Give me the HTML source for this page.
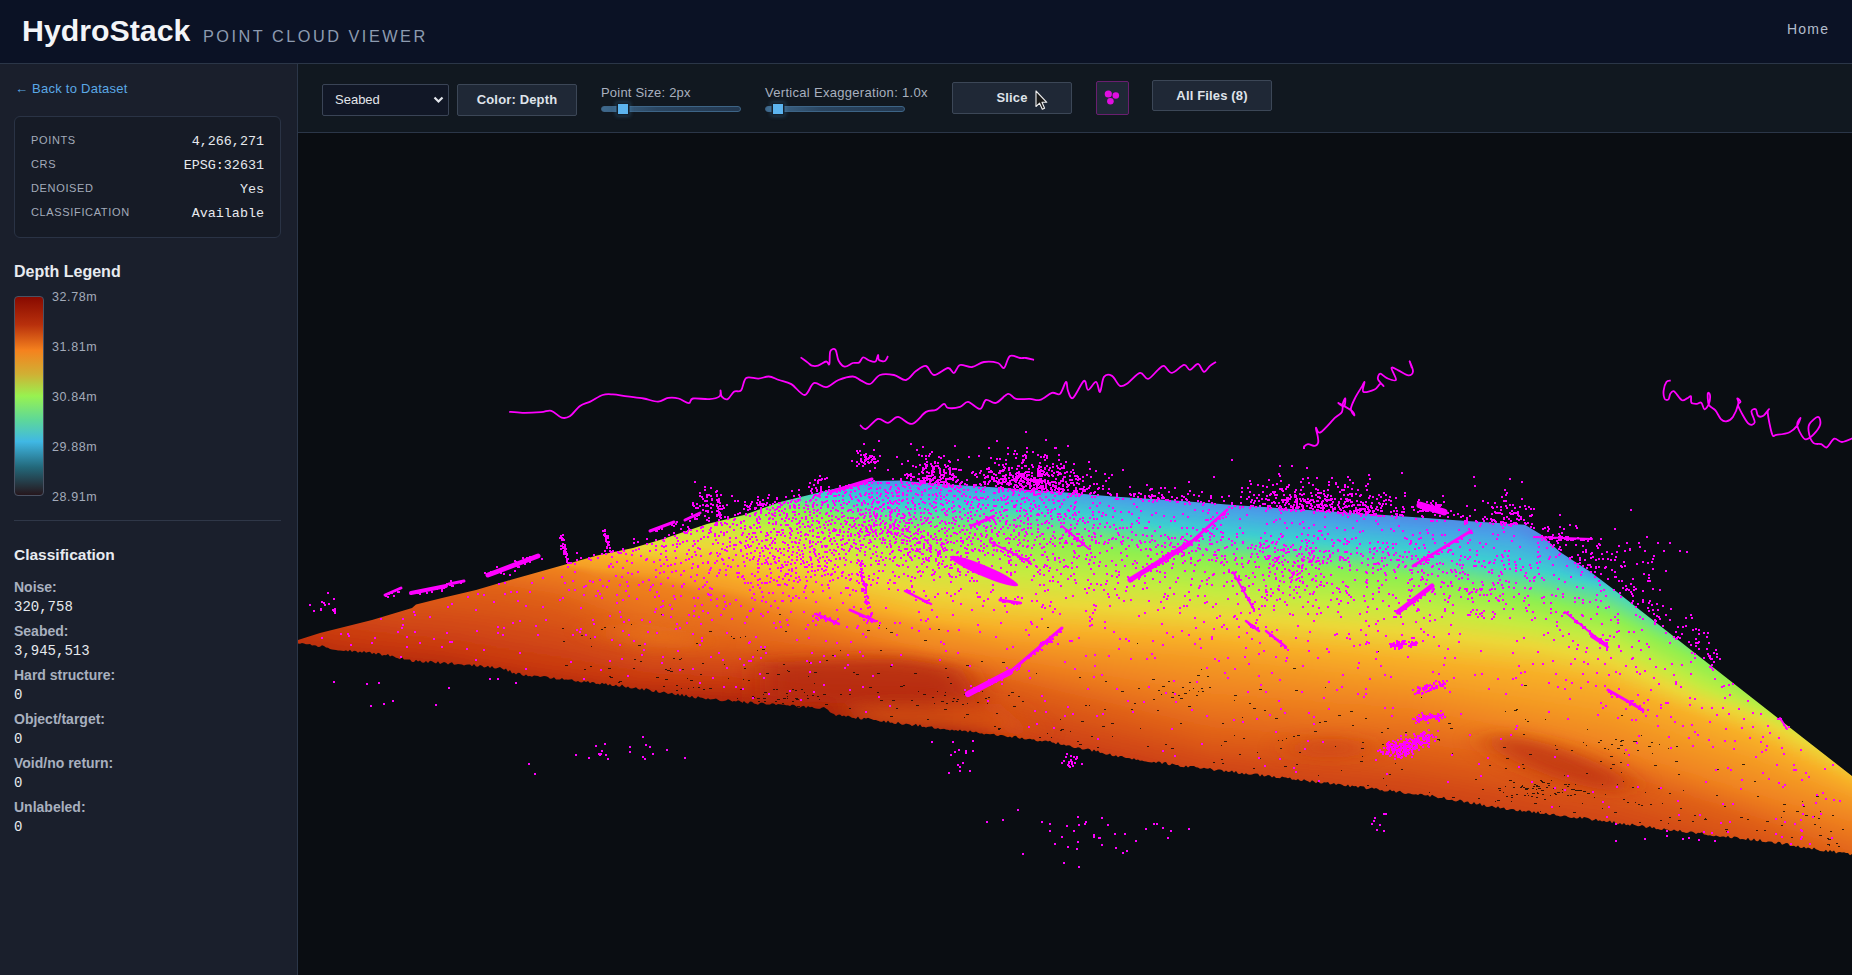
<!DOCTYPE html>
<html><head><meta charset="utf-8">
<style>
*{margin:0;padding:0;box-sizing:border-box}
html,body{width:1852px;height:975px;overflow:hidden;background:#0b0d12;font-family:"Liberation Sans",sans-serif}
.abs{position:absolute}
#hdr{left:0;top:0;width:1852px;height:64px;background:#0b1225;border-bottom:1px solid #2b3648}
#side{left:0;top:64px;width:298px;height:911px;background:#1a1f2c;border-right:1px solid #2b3648}
#tool{left:298px;top:64px;width:1554px;height:69px;background:#111820;border-bottom:1px solid #2b3648}
#view{left:298px;top:133px;width:1554px;height:842px;background:#0a0d12;overflow:hidden}
.t{position:absolute;white-space:nowrap;line-height:1}
.lbl{color:#a3abba;font-size:11px;letter-spacing:0.65px}
.val{color:#e6e9ee;font-family:"Liberation Mono",monospace;font-size:13.4px}
.cl{color:#a8b0bf;font-size:14px;font-weight:bold}
.cv{color:#e6e9ee;font-family:"Liberation Mono",monospace;font-size:14px}
.lg{color:#a3abba;font-size:12.5px;letter-spacing:0.6px}
.btn{position:absolute;background:#1f2836;border:1px solid #3c4757;border-radius:2px;color:#dfe3ea;font-weight:bold;font-size:13px;text-align:center;letter-spacing:0.15px}
.trk{position:absolute;height:6px;border-radius:4px;border:1px solid #3d6486;background:linear-gradient(to right,#3f6a8e,#2a4560 40%,#233850)}
.thm{position:absolute;width:10px;height:10px;background:#5cb4ef;box-shadow:0 0 0 1.5px #14202c,0 0 4px 2px rgba(80,160,220,0.35)}
</style></head><body>
<div id="hdr" class="abs">
  <div class="t" style="left:22px;top:16px;font-size:30.3px;font-weight:bold;color:#f3f5f8">HydroStack</div>
  <div class="t" style="left:203px;top:28px;font-size:16.3px;color:#8d9bb0;letter-spacing:2.5px">POINT CLOUD VIEWER</div>
  <div class="t" style="left:1787px;top:22px;font-size:14px;color:#b3bccb;letter-spacing:1.2px">Home</div>
</div>
<div id="side" class="abs">
  <div class="t" style="left:15px;top:18px;font-size:13px;color:#5aa9e6;letter-spacing:0.25px">&larr; Back to Dataset</div>
  <div class="abs" style="left:14px;top:52px;width:267px;height:122px;background:#161b26;border:1px solid #2a3345;border-radius:6px"></div>
  <div class="t lbl" style="left:31px;top:71px">POINTS</div><div class="t val" style="right:33px;top:71px">4,266,271</div>
  <div class="t lbl" style="left:31px;top:95px">CRS</div><div class="t val" style="right:33px;top:95px">EPSG:32631</div>
  <div class="t lbl" style="left:31px;top:119px">DENOISED</div><div class="t val" style="right:33px;top:119px">Yes</div>
  <div class="t lbl" style="left:31px;top:143px">CLASSIFICATION</div><div class="t val" style="right:33px;top:143px">Available</div>

  <div class="t" style="left:14px;top:200px;font-size:16px;font-weight:bold;color:#e8ebf0">Depth Legend</div>
  <div class="abs" style="left:14px;top:232px;width:30px;height:200px;border:1px solid #4a5263;border-radius:4px;background:linear-gradient(to bottom,#880a00 0%,#b8300c 14%,#f5821e 27%,#d0b034 39%,#98f250 50%,#5ed898 62%,#40b8e4 73%,#23687a 86%,#26161c 100%)"></div>
  <div class="t lg" style="left:52px;top:227px">32.78m</div>
  <div class="t lg" style="left:52px;top:277px">31.81m</div>
  <div class="t lg" style="left:52px;top:327px">30.84m</div>
  <div class="t lg" style="left:52px;top:377px">29.88m</div>
  <div class="t lg" style="left:52px;top:427px">28.91m</div>
  <div class="abs" style="left:14px;top:456px;width:267px;height:1px;background:#2f3748"></div>

  <div class="t" style="left:14px;top:483px;font-size:15.5px;font-weight:bold;color:#e8ebf0">Classification</div>
  <div class="t cl" style="left:14px;top:516px">Noise:</div><div class="t cv" style="left:14px;top:536px">320,758</div>
  <div class="t cl" style="left:14px;top:560px">Seabed:</div><div class="t cv" style="left:14px;top:580px">3,945,513</div>
  <div class="t cl" style="left:14px;top:604px">Hard structure:</div><div class="t cv" style="left:14px;top:624px">0</div>
  <div class="t cl" style="left:14px;top:648px">Object/target:</div><div class="t cv" style="left:14px;top:668px">0</div>
  <div class="t cl" style="left:14px;top:692px">Void/no return:</div><div class="t cv" style="left:14px;top:712px">0</div>
  <div class="t cl" style="left:14px;top:736px">Unlabeled:</div><div class="t cv" style="left:14px;top:756px">0</div>
</div>
<div id="tool" class="abs">
  <div class="abs" style="left:24px;top:20px;width:127px;height:32px;background:#111726;border:1px solid #3a4456;border-radius:2px"></div>
  <div class="t" style="left:37px;top:29px;font-size:13px;color:#e3e6eb">Seabed</div>
  <svg class="abs" style="left:135px;top:31px" width="12" height="10"><path d="M1.5 2.5 L5.5 6.5 L9.5 2.5" fill="none" stroke="#e3e6eb" stroke-width="2.2"/></svg>
  <div class="btn" style="left:159px;top:20px;width:120px;height:32px;line-height:30px">Color: Depth</div>
  <div class="t" style="left:303px;top:22px;font-size:13px;color:#a8b0bf;letter-spacing:0.2px">Point Size: 2px</div>
  <div class="trk" style="left:303px;top:42px;width:140px"></div>
  <div class="thm" style="left:320px;top:40px"></div>
  <div class="t" style="left:467px;top:22px;font-size:13px;color:#a8b0bf;letter-spacing:0.3px">Vertical Exaggeration: 1.0x</div>
  <div class="trk" style="left:467px;top:42px;width:140px"></div>
  <div class="thm" style="left:475px;top:40px"></div>
  <div class="btn" style="left:654px;top:18px;width:120px;height:32px;line-height:30px">Slice</div>
  <div class="abs" style="left:798px;top:17px;width:33px;height:34px;background:#1f2836;border:1px solid #6a1f70;border-radius:2px"></div>
  <svg class="abs" style="left:798px;top:17px" width="33" height="34"><circle cx="12.3" cy="13" r="3.6" fill="#e00ee0"/><circle cx="19.8" cy="14.5" r="3.3" fill="#e00ee0"/><circle cx="14.4" cy="20.2" r="3.3" fill="#e00ee0"/></svg>
  <div class="btn" style="left:854px;top:16px;width:120px;height:31px;line-height:29px">All Files (8)</div>
  <svg class="abs" style="left:737px;top:26px" width="16" height="22"><path d="M1 1 L1 16.5 L4.6 13.2 L7.3 19.3 L9.6 18.3 L7 12.3 L11.8 12.3 Z" fill="#1a1a1a" stroke="#f0f0f0" stroke-width="1.1" stroke-linejoin="round"/></svg>
</div>
<div id="view" class="abs">
<svg width="1554" height="842" viewBox="298 133 1554 842" style="position:absolute;left:0;top:0;display:block">
<defs>
<clipPath id="surf"><path d="M298 640 L320 633 L372 620 L412 608 L416 604.6 L442 598 L476 590 L512 579.5 L560 566 L597 555.5 L633 548 L663 539 L707 524 L744 515 L780 502 L817 493 L854 484 L872 481 L900 480.5 L938 483.7 L997 487.6 L1055 491.5 L1113 496.4 L1172 500.3 L1240 505.5 L1308 510 L1385 515 L1463 520.8 L1525 524.7 L1541 534.4 L1560 552 L1590 571.4 L1617 592 L1654 621 L1691 650 L1728 679 L1765 708 L1802 737 L1852 776 L1856 780 L1856 855.5 L1854 856 L1852 854 L1850 855.2 L1848 852.9 L1846 853 L1844 852.2 L1842 852.4 L1840 852.1 L1838 852.3 L1836 853.4 L1834 850.6 L1832 851.8 L1830 850 L1828 852.2 L1826 849.8 L1824 851.5 L1822 851.2 L1820 850.9 L1818 850.1 L1816 849.2 L1814 847.4 L1812 849.6 L1810 848.3 L1808 847.5 L1806 848.6 L1804 846.8 L1802 848 L1800 847.7 L1798 845.4 L1796 847 L1794 845.7 L1792 845.9 L1790 846.1 L1788 843.3 L1786 842.9 L1784 844.1 L1782 844.8 L1780 842 L1778 841.7 L1776 843.8 L1774 843.5 L1772 841.7 L1770 841.4 L1768 841.6 L1766 842.3 L1764 842 L1762 841.8 L1760 839.1 L1758 841.3 L1756 841.1 L1754 838.4 L1752 840.6 L1750 840.4 L1748 837.7 L1746 839.9 L1744 839.2 L1742 839 L1740 839.2 L1738 837.5 L1736 836.8 L1734 836.5 L1732 838.3 L1730 838.1 L1728 835.8 L1726 837.6 L1724 836.4 L1722 836.6 L1720 836.9 L1718 836.2 L1716 835.4 L1714 836.2 L1712 836 L1710 835.2 L1708 835.5 L1706 834.8 L1704 834.5 L1702 832.3 L1700 833.1 L1698 832.8 L1696 834.1 L1694 832.4 L1692 831.6 L1690 831.4 L1688 832.7 L1686 832.9 L1684 832.2 L1682 832 L1680 829.7 L1678 831.5 L1676 830.8 L1674 829.5 L1672 830.8 L1670 831.1 L1668 829.8 L1666 829.6 L1664 828.3 L1662 830 L1660 829.8 L1658 829 L1656 829.2 L1654 827 L1652 828.2 L1650 825.9 L1648 827.2 L1646 827.9 L1644 826.1 L1642 824.9 L1640 826.1 L1638 826.3 L1636 825.6 L1634 824.8 L1632 823.5 L1630 825.8 L1628 824.5 L1626 825.2 L1624 823 L1622 824.7 L1620 822.9 L1618 824.2 L1616 823.9 L1614 821.1 L1612 823.3 L1610 820.6 L1608 821.8 L1606 822 L1604 820.8 L1602 821.5 L1600 820.2 L1598 821 L1596 818.7 L1594 819.9 L1592 820.7 L1590 818.9 L1588 818.1 L1586 817.4 L1584 817.1 L1582 818.8 L1580 816.6 L1578 818.3 L1576 818.5 L1574 817.3 L1572 818 L1570 817.7 L1568 817 L1566 815.7 L1564 815.5 L1562 816.2 L1560 816.5 L1558 815.7 L1556 815.5 L1554 813.7 L1552 814 L1550 815.2 L1548 814.5 L1546 812.8 L1544 814 L1542 813.8 L1540 814 L1538 811.3 L1536 813.5 L1534 811.3 L1532 813 L1530 810.8 L1528 810.5 L1526 811.8 L1524 811.1 L1522 811.8 L1520 809.6 L1518 811.3 L1516 811.1 L1514 809.3 L1512 809.1 L1510 809.3 L1508 810.1 L1506 809.9 L1504 807.6 L1502 807.9 L1500 808.6 L1498 806.3 L1496 808 L1494 807.1 L1492 805.8 L1490 806.4 L1488 807.1 L1486 806.7 L1484 804.4 L1482 806 L1480 803.1 L1478 804.3 L1476 804.4 L1474 802.1 L1472 804.2 L1470 803.9 L1468 801.5 L1466 801.7 L1464 802.8 L1462 800.5 L1460 799.6 L1458 800.8 L1456 801.4 L1454 801.1 L1452 799.7 L1450 799.9 L1448 800 L1446 799.6 L1444 796.8 L1442 797.9 L1440 798.1 L1438 798.2 L1436 796.9 L1434 796 L1432 794.7 L1430 796.9 L1428 795.1 L1426 795.4 L1424 795.2 L1422 793.9 L1420 793.7 L1418 794.9 L1416 794.2 L1414 794.5 L1412 794.2 L1410 793.5 L1408 793.2 L1406 794 L1404 793.8 L1402 792.5 L1400 790.8 L1398 791.5 L1396 792.8 L1394 790.6 L1392 791.3 L1390 789.6 L1388 791.3 L1386 791.6 L1384 791.4 L1382 790.1 L1380 790.4 L1378 789.1 L1376 787.9 L1374 788.7 L1372 787.4 L1370 788.2 L1368 788.9 L1366 789.2 L1364 786.5 L1362 786.2 L1360 786 L1358 787.7 L1356 786 L1354 786.3 L1352 785.5 L1350 787.3 L1348 784.5 L1346 786.3 L1344 786.1 L1342 784.8 L1340 784.1 L1338 783.8 L1336 785.1 L1334 782.9 L1332 784.1 L1330 784.4 L1328 782.1 L1326 782.4 L1324 782.2 L1322 783.4 L1320 783.2 L1318 781.4 L1316 783.2 L1314 781.4 L1312 780.2 L1310 782.5 L1308 781.2 L1306 780.5 L1304 779.2 L1302 781 L1300 780.8 L1298 779 L1296 780.3 L1294 779.5 L1292 779.8 L1290 777.5 L1288 778.3 L1286 777.6 L1284 777.3 L1282 776.6 L1280 778.3 L1278 778.1 L1276 777.9 L1274 776.1 L1272 777.4 L1270 775.6 L1268 774.9 L1266 776.1 L1264 776.4 L1262 774.2 L1260 776.4 L1258 773.7 L1256 773.4 L1254 773.7 L1252 774.5 L1250 774.7 L1248 774.5 L1246 773.2 L1244 774.5 L1242 772.7 L1240 774 L1238 773.8 L1236 771 L1234 772.8 L1232 770.6 L1230 771.8 L1228 772.1 L1226 770.4 L1224 772.1 L1222 769.9 L1220 769.6 L1218 769.4 L1216 770.2 L1214 770.9 L1212 769.2 L1210 768 L1208 768.7 L1206 768.5 L1204 767.8 L1202 768.5 L1200 768.8 L1198 767.6 L1196 767.3 L1194 766.1 L1192 765.9 L1190 766.1 L1188 767.4 L1186 765.6 L1184 767.3 L1182 767 L1180 766.7 L1178 764.9 L1176 765.1 L1174 764.3 L1172 763.5 L1170 765.2 L1168 764.9 L1166 762.1 L1164 762.3 L1162 764 L1160 761.7 L1158 761.4 L1156 763.1 L1154 761.8 L1152 762.5 L1150 762.2 L1148 761.9 L1146 761.6 L1144 761.3 L1142 760.5 L1140 760.7 L1138 759.4 L1136 760.1 L1134 758.3 L1132 759.5 L1130 758.2 L1128 757.9 L1126 758.1 L1124 757.3 L1122 756 L1120 756.1 L1118 757.2 L1116 755.2 L1114 756.3 L1112 755.9 L1110 753.5 L1108 754.6 L1106 754.7 L1104 753.7 L1102 752.8 L1100 752.9 L1098 750.5 L1096 751.6 L1094 749.6 L1092 751.7 L1090 749.3 L1088 748.4 L1086 749 L1084 749.6 L1082 749.6 L1080 747.7 L1078 747.3 L1076 747.9 L1074 748 L1072 747.1 L1070 745.6 L1068 745.2 L1066 745.8 L1064 744.4 L1062 745 L1060 744.5 L1058 742.1 L1056 744.2 L1054 742.8 L1052 742.5 L1050 740.7 L1048 741.4 L1046 740.6 L1044 740.8 L1042 741.5 L1040 740.7 L1038 741.4 L1036 741.1 L1034 739.3 L1032 739.5 L1030 738.7 L1028 738.9 L1026 739.6 L1024 739.3 L1022 737.5 L1020 738.8 L1018 738 L1016 735.8 L1014 736 L1012 737.8 L1010 736.6 L1008 737.3 L1006 736.6 L1004 735.4 L1002 735.1 L1000 734.9 L998 736.1 L996 735.4 L994 733.7 L992 733.9 L990 734.2 L988 733.9 L986 733.7 L984 734.5 L982 733.2 L980 733.5 L978 732.7 L976 731.5 L974 732.3 L972 732 L970 730.3 L968 732.6 L966 730.8 L964 730.6 L962 731.3 L960 729.6 L958 730.9 L956 730.1 L954 730.4 L952 729.6 L950 730.4 L948 729.7 L946 729.4 L944 728.7 L942 728.9 L940 729.2 L938 728 L936 728.7 L934 728.5 L932 726.3 L930 726.5 L928 726.8 L926 727.5 L924 726.8 L922 727.1 L920 724.3 L918 726.6 L916 723.8 L914 725.1 L912 725.9 L910 724.6 L908 723.9 L906 723.6 L904 724.4 L902 724.7 L900 723.4 L898 721.7 L896 724 L894 723.7 L892 722.5 L890 722.7 L888 720.5 L886 722.7 L884 720.5 L882 721.7 L880 721.4 L878 720.7 L876 719.9 L874 720.1 L872 719.3 L870 718.6 L868 717.8 L866 718.5 L864 717.8 L862 719.5 L860 719.2 L858 716.5 L856 718.7 L854 717.9 L852 717.7 L850 716.4 L848 715.6 L846 716.8 L844 715.6 L842 716.3 L840 714.5 L838 714.8 L836 716 L834 713.9 L832 713.3 L830 712.3 L828 709.7 L826 708.6 L824 707 L822 707.4 L820 708.8 L818 708.7 L816 708.6 L814 707.9 L812 706.8 L810 707.2 L808 706 L806 707.9 L804 705.8 L802 706.2 L800 707.5 L798 707.4 L796 706.3 L794 704.7 L792 704.5 L790 705.9 L788 705.3 L786 705.2 L784 704.5 L782 704.4 L780 704.3 L778 704.1 L776 705 L774 703.4 L772 703.3 L770 704.6 L768 704.5 L766 704.4 L764 703.3 L762 702.6 L760 703 L758 704.8 L756 704.1 L754 703.4 L752 701.7 L750 701.5 L748 703.8 L746 703.1 L744 700.9 L742 703.2 L740 701 L738 700.3 L736 701.6 L734 700.9 L732 701.7 L730 700 L728 699.3 L726 700.6 L724 700.9 L722 701.2 L720 701 L718 699.8 L716 698.6 L714 698.9 L712 699.2 L710 699.5 L708 698.3 L706 699.6 L704 698.4 L702 697.7 L700 697.5 L698 696.2 L696 698.4 L694 698.1 L692 695.8 L690 697.5 L688 696.7 L686 694.4 L684 696.6 L682 693.8 L680 696 L678 693.6 L676 695.3 L674 694.5 L672 692.7 L670 693.4 L668 694.1 L666 692.8 L664 691.5 L662 692.2 L660 692.9 L658 692.6 L656 689.8 L654 692 L652 691.7 L650 689.9 L648 689.1 L646 688.3 L644 690.5 L642 688.2 L640 689.8 L638 689 L636 687.2 L634 687.9 L632 688.6 L630 688.3 L628 686.5 L626 687.7 L624 686.4 L622 684.6 L620 686.8 L618 686.6 L616 684.8 L614 686.1 L612 685.9 L610 684.1 L608 685.4 L606 683.2 L604 683.9 L602 682.7 L600 684.5 L598 683.8 L596 684 L594 682.3 L592 682.1 L590 683.3 L588 681.1 L586 681.9 L584 681.1 L582 682.4 L580 682.2 L578 680.9 L576 681.7 L574 681 L572 679.2 L570 679.5 L568 679.8 L566 679.6 L564 679.8 L562 678.1 L560 679.4 L558 679.6 L556 679.4 L554 677.2 L552 678.5 L550 678.7 L548 677 L546 676.3 L544 676.1 L542 676.4 L540 677.1 L538 675.9 L536 675.7 L534 675.5 L532 676.8 L530 676 L528 676.3 L526 674.6 L524 675.9 L522 675.2 L520 672.9 L518 672.7 L516 674.5 L514 672.7 L512 673.4 L510 670.1 L508 671.8 L506 668.5 L504 669.7 L502 668.4 L500 666.9 L498 667.7 L496 668.5 L494 668.3 L492 666.1 L490 668 L488 665.8 L486 667.1 L484 667.4 L482 665.7 L480 665 L478 666.8 L476 666.6 L474 663.9 L472 666.3 L470 664.6 L468 664.4 L466 664.7 L464 665.5 L462 664.4 L460 664.2 L458 664.1 L456 664.5 L454 664.8 L452 662.2 L450 663 L448 664.4 L446 662.8 L444 662.1 L442 663 L440 663.9 L438 661.2 L436 663.6 L434 662.5 L432 661.3 L430 660.7 L428 663.1 L426 660.9 L424 662.8 L422 662.6 L420 660.5 L418 661.4 L416 659.7 L414 662.1 L412 661.9 L410 659.4 L408 659.5 L406 659.5 L404 659.6 L402 657.2 L400 659.2 L398 658.3 L396 657.8 L394 656.4 L392 655.4 L390 656.5 L388 654 L386 655.2 L384 654.9 L382 655.7 L380 653.5 L378 652.7 L376 654.5 L374 652.7 L372 654 L370 651.7 L368 652 L366 652.8 L364 651 L362 652.8 L360 651.5 L358 652.8 L356 651 L354 650.8 L352 652.1 L350 649.8 L348 651.6 L346 650.3 L344 651.1 L342 650.8 L340 650.6 L338 650.4 L336 650.1 L334 649.8 L332 649.5 L330 649.1 L328 647.8 L326 647.4 L324 646 L322 645.2 L320 646.8 L318 647 L316 645.6 L314 645.3 L312 645.4 L310 644 L308 644.2 L306 644.3 L304 643.5 L302 643.1 L300 643.8 L298 643.4Z"/></clipPath>
<filter id="bl" x="-5%" y="-5%" width="110%" height="110%"><feGaussianBlur stdDeviation="5 2"/></filter>
<filter id="bl2" x="-50%" y="-50%" width="200%" height="200%"><feGaussianBlur stdDeviation="16 7"/></filter>
<linearGradient id="g290" gradientUnits="userSpaceOnUse" x1="0" y1="359" x2="0" y2="671"><stop offset="0.003" stop-color="#518ce4"/><stop offset="0.067" stop-color="#48a0e8"/><stop offset="0.131" stop-color="#3cd0d0"/><stop offset="0.196" stop-color="#8cf050"/><stop offset="0.260" stop-color="#c4ec40"/><stop offset="0.324" stop-color="#ecd838"/><stop offset="0.388" stop-color="#f8b028"/><stop offset="0.452" stop-color="#f49a24"/><stop offset="0.516" stop-color="#f08420"/><stop offset="0.644" stop-color="#e06018"/><stop offset="0.869" stop-color="#c83810"/><stop offset="0.997" stop-color="#a82008"/></linearGradient>
<linearGradient id="g298" gradientUnits="userSpaceOnUse" x1="0" y1="359.8" x2="0" y2="671.3"><stop offset="0.003" stop-color="#518ce4"/><stop offset="0.067" stop-color="#48a0e8"/><stop offset="0.132" stop-color="#3cd0d0"/><stop offset="0.196" stop-color="#8cf050"/><stop offset="0.261" stop-color="#c4ec40"/><stop offset="0.325" stop-color="#ecd838"/><stop offset="0.390" stop-color="#f8b028"/><stop offset="0.454" stop-color="#f49a24"/><stop offset="0.517" stop-color="#f08420"/><stop offset="0.646" stop-color="#e06018"/><stop offset="0.870" stop-color="#c83810"/><stop offset="0.997" stop-color="#a82008"/></linearGradient>
<linearGradient id="g306" gradientUnits="userSpaceOnUse" x1="0" y1="361.4" x2="0" y2="671.8"><stop offset="0.003" stop-color="#518ce4"/><stop offset="0.067" stop-color="#48a0e8"/><stop offset="0.133" stop-color="#3cd0d0"/><stop offset="0.196" stop-color="#8cf050"/><stop offset="0.263" stop-color="#c4ec40"/><stop offset="0.327" stop-color="#ecd838"/><stop offset="0.395" stop-color="#f8b028"/><stop offset="0.458" stop-color="#f49a24"/><stop offset="0.519" stop-color="#f08420"/><stop offset="0.649" stop-color="#e06018"/><stop offset="0.873" stop-color="#c83810"/><stop offset="0.997" stop-color="#a82008"/></linearGradient>
<linearGradient id="g314" gradientUnits="userSpaceOnUse" x1="0" y1="363" x2="0" y2="672.3"><stop offset="0.003" stop-color="#518ce4"/><stop offset="0.067" stop-color="#48a0e8"/><stop offset="0.133" stop-color="#3cd0d0"/><stop offset="0.197" stop-color="#8cf050"/><stop offset="0.266" stop-color="#c4ec40"/><stop offset="0.330" stop-color="#ecd838"/><stop offset="0.399" stop-color="#f8b028"/><stop offset="0.462" stop-color="#f49a24"/><stop offset="0.520" stop-color="#f08420"/><stop offset="0.653" stop-color="#e06018"/><stop offset="0.876" stop-color="#c83810"/><stop offset="0.997" stop-color="#a82008"/></linearGradient>
<linearGradient id="g322" gradientUnits="userSpaceOnUse" x1="0" y1="364.6" x2="0" y2="672.8"><stop offset="0.003" stop-color="#518ce4"/><stop offset="0.066" stop-color="#48a0e8"/><stop offset="0.134" stop-color="#3cd0d0"/><stop offset="0.198" stop-color="#8cf050"/><stop offset="0.268" stop-color="#c4ec40"/><stop offset="0.332" stop-color="#ecd838"/><stop offset="0.404" stop-color="#f8b028"/><stop offset="0.466" stop-color="#f49a24"/><stop offset="0.522" stop-color="#f08420"/><stop offset="0.656" stop-color="#e06018"/><stop offset="0.878" stop-color="#c83810"/><stop offset="0.997" stop-color="#a82008"/></linearGradient>
<linearGradient id="g330" gradientUnits="userSpaceOnUse" x1="0" y1="366.2" x2="0" y2="673.4"><stop offset="0.003" stop-color="#518ce4"/><stop offset="0.066" stop-color="#48a0e8"/><stop offset="0.135" stop-color="#3cd0d0"/><stop offset="0.198" stop-color="#8cf050"/><stop offset="0.270" stop-color="#c4ec40"/><stop offset="0.335" stop-color="#ecd838"/><stop offset="0.408" stop-color="#f8b028"/><stop offset="0.470" stop-color="#f49a24"/><stop offset="0.524" stop-color="#f08420"/><stop offset="0.660" stop-color="#e06018"/><stop offset="0.881" stop-color="#c83810"/><stop offset="0.997" stop-color="#a82008"/></linearGradient>
<linearGradient id="g338" gradientUnits="userSpaceOnUse" x1="0" y1="367.8" x2="0" y2="673.9"><stop offset="0.003" stop-color="#518ce4"/><stop offset="0.066" stop-color="#48a0e8"/><stop offset="0.136" stop-color="#3cd0d0"/><stop offset="0.199" stop-color="#8cf050"/><stop offset="0.273" stop-color="#c4ec40"/><stop offset="0.337" stop-color="#ecd838"/><stop offset="0.413" stop-color="#f8b028"/><stop offset="0.475" stop-color="#f49a24"/><stop offset="0.525" stop-color="#f08420"/><stop offset="0.663" stop-color="#e06018"/><stop offset="0.884" stop-color="#c83810"/><stop offset="0.997" stop-color="#a82008"/></linearGradient>
<linearGradient id="g346" gradientUnits="userSpaceOnUse" x1="0" y1="369.4" x2="0" y2="674.4"><stop offset="0.003" stop-color="#518ce4"/><stop offset="0.065" stop-color="#48a0e8"/><stop offset="0.136" stop-color="#3cd0d0"/><stop offset="0.200" stop-color="#8cf050"/><stop offset="0.275" stop-color="#c4ec40"/><stop offset="0.339" stop-color="#ecd838"/><stop offset="0.418" stop-color="#f8b028"/><stop offset="0.479" stop-color="#f49a24"/><stop offset="0.527" stop-color="#f08420"/><stop offset="0.667" stop-color="#e06018"/><stop offset="0.887" stop-color="#c83810"/><stop offset="0.997" stop-color="#a82008"/></linearGradient>
<linearGradient id="g354" gradientUnits="userSpaceOnUse" x1="0" y1="371" x2="0" y2="674.9"><stop offset="0.003" stop-color="#518ce4"/><stop offset="0.065" stop-color="#48a0e8"/><stop offset="0.137" stop-color="#3cd0d0"/><stop offset="0.201" stop-color="#8cf050"/><stop offset="0.278" stop-color="#c4ec40"/><stop offset="0.342" stop-color="#ecd838"/><stop offset="0.422" stop-color="#f8b028"/><stop offset="0.483" stop-color="#f49a24"/><stop offset="0.529" stop-color="#f08420"/><stop offset="0.670" stop-color="#e06018"/><stop offset="0.888" stop-color="#c83810"/><stop offset="0.997" stop-color="#a82008"/></linearGradient>
<linearGradient id="g362" gradientUnits="userSpaceOnUse" x1="0" y1="372.5" x2="0" y2="675.5"><stop offset="0.003" stop-color="#518ce4"/><stop offset="0.065" stop-color="#48a0e8"/><stop offset="0.138" stop-color="#3cd0d0"/><stop offset="0.201" stop-color="#8cf050"/><stop offset="0.280" stop-color="#c4ec40"/><stop offset="0.344" stop-color="#ecd838"/><stop offset="0.427" stop-color="#f8b028"/><stop offset="0.487" stop-color="#f49a24"/><stop offset="0.531" stop-color="#f08420"/><stop offset="0.674" stop-color="#e06018"/><stop offset="0.888" stop-color="#c83810"/><stop offset="0.997" stop-color="#a82008"/></linearGradient>
<linearGradient id="g370" gradientUnits="userSpaceOnUse" x1="0" y1="374.1" x2="0" y2="676"><stop offset="0.003" stop-color="#518ce4"/><stop offset="0.065" stop-color="#48a0e8"/><stop offset="0.139" stop-color="#3cd0d0"/><stop offset="0.202" stop-color="#8cf050"/><stop offset="0.283" stop-color="#c4ec40"/><stop offset="0.347" stop-color="#ecd838"/><stop offset="0.432" stop-color="#f8b028"/><stop offset="0.492" stop-color="#f49a24"/><stop offset="0.533" stop-color="#f08420"/><stop offset="0.677" stop-color="#e06018"/><stop offset="0.889" stop-color="#c83810"/><stop offset="0.997" stop-color="#a82008"/></linearGradient>
<linearGradient id="g378" gradientUnits="userSpaceOnUse" x1="0" y1="375.7" x2="0" y2="676.5"><stop offset="0.003" stop-color="#518ce4"/><stop offset="0.064" stop-color="#48a0e8"/><stop offset="0.139" stop-color="#3cd0d0"/><stop offset="0.203" stop-color="#8cf050"/><stop offset="0.285" stop-color="#c4ec40"/><stop offset="0.350" stop-color="#ecd838"/><stop offset="0.437" stop-color="#f8b028"/><stop offset="0.496" stop-color="#f49a24"/><stop offset="0.534" stop-color="#f08420"/><stop offset="0.681" stop-color="#e06018"/><stop offset="0.889" stop-color="#c83810"/><stop offset="0.997" stop-color="#a82008"/></linearGradient>
<linearGradient id="g386" gradientUnits="userSpaceOnUse" x1="0" y1="377.3" x2="0" y2="677.1"><stop offset="0.003" stop-color="#518ce4"/><stop offset="0.064" stop-color="#48a0e8"/><stop offset="0.140" stop-color="#3cd0d0"/><stop offset="0.203" stop-color="#8cf050"/><stop offset="0.288" stop-color="#c4ec40"/><stop offset="0.352" stop-color="#ecd838"/><stop offset="0.441" stop-color="#f8b028"/><stop offset="0.500" stop-color="#f49a24"/><stop offset="0.536" stop-color="#f08420"/><stop offset="0.685" stop-color="#e06018"/><stop offset="0.890" stop-color="#c83810"/><stop offset="0.997" stop-color="#a82008"/></linearGradient>
<linearGradient id="g394" gradientUnits="userSpaceOnUse" x1="0" y1="378.9" x2="0" y2="677.6"><stop offset="0.003" stop-color="#518ce4"/><stop offset="0.064" stop-color="#48a0e8"/><stop offset="0.141" stop-color="#3cd0d0"/><stop offset="0.204" stop-color="#8cf050"/><stop offset="0.290" stop-color="#c4ec40"/><stop offset="0.355" stop-color="#ecd838"/><stop offset="0.446" stop-color="#f8b028"/><stop offset="0.505" stop-color="#f49a24"/><stop offset="0.538" stop-color="#f08420"/><stop offset="0.688" stop-color="#e06018"/><stop offset="0.890" stop-color="#c83810"/><stop offset="0.997" stop-color="#a82008"/></linearGradient>
<linearGradient id="g402" gradientUnits="userSpaceOnUse" x1="0" y1="380.5" x2="0" y2="678.1"><stop offset="0.003" stop-color="#518ce4"/><stop offset="0.063" stop-color="#48a0e8"/><stop offset="0.142" stop-color="#3cd0d0"/><stop offset="0.205" stop-color="#8cf050"/><stop offset="0.293" stop-color="#c4ec40"/><stop offset="0.357" stop-color="#ecd838"/><stop offset="0.451" stop-color="#f8b028"/><stop offset="0.509" stop-color="#f49a24"/><stop offset="0.540" stop-color="#f08420"/><stop offset="0.688" stop-color="#e06018"/><stop offset="0.891" stop-color="#c83810"/><stop offset="0.997" stop-color="#a82008"/></linearGradient>
<linearGradient id="g410" gradientUnits="userSpaceOnUse" x1="0" y1="382.1" x2="0" y2="678.6"><stop offset="0.003" stop-color="#518ce4"/><stop offset="0.063" stop-color="#48a0e8"/><stop offset="0.143" stop-color="#3cd0d0"/><stop offset="0.205" stop-color="#8cf050"/><stop offset="0.295" stop-color="#c4ec40"/><stop offset="0.360" stop-color="#ecd838"/><stop offset="0.456" stop-color="#f8b028"/><stop offset="0.514" stop-color="#f49a24"/><stop offset="0.542" stop-color="#f08420"/><stop offset="0.687" stop-color="#e06018"/><stop offset="0.891" stop-color="#c83810"/><stop offset="0.997" stop-color="#a82008"/></linearGradient>
<linearGradient id="g418" gradientUnits="userSpaceOnUse" x1="0" y1="383.7" x2="0" y2="679.2"><stop offset="0.003" stop-color="#518ce4"/><stop offset="0.063" stop-color="#48a0e8"/><stop offset="0.143" stop-color="#3cd0d0"/><stop offset="0.206" stop-color="#8cf050"/><stop offset="0.298" stop-color="#c4ec40"/><stop offset="0.362" stop-color="#ecd838"/><stop offset="0.461" stop-color="#f8b028"/><stop offset="0.518" stop-color="#f49a24"/><stop offset="0.544" stop-color="#f08420"/><stop offset="0.685" stop-color="#e06018"/><stop offset="0.892" stop-color="#c83810"/><stop offset="0.997" stop-color="#a82008"/></linearGradient>
<linearGradient id="g426" gradientUnits="userSpaceOnUse" x1="0" y1="385.3" x2="0" y2="679.7"><stop offset="0.003" stop-color="#518ce4"/><stop offset="0.062" stop-color="#48a0e8"/><stop offset="0.144" stop-color="#3cd0d0"/><stop offset="0.207" stop-color="#8cf050"/><stop offset="0.300" stop-color="#c4ec40"/><stop offset="0.365" stop-color="#ecd838"/><stop offset="0.466" stop-color="#f8b028"/><stop offset="0.523" stop-color="#f49a24"/><stop offset="0.546" stop-color="#f08420"/><stop offset="0.683" stop-color="#e06018"/><stop offset="0.892" stop-color="#c83810"/><stop offset="0.997" stop-color="#a82008"/></linearGradient>
<linearGradient id="g434" gradientUnits="userSpaceOnUse" x1="0" y1="386.9" x2="0" y2="680.2"><stop offset="0.003" stop-color="#518ce4"/><stop offset="0.062" stop-color="#48a0e8"/><stop offset="0.145" stop-color="#3cd0d0"/><stop offset="0.208" stop-color="#8cf050"/><stop offset="0.303" stop-color="#c4ec40"/><stop offset="0.368" stop-color="#ecd838"/><stop offset="0.471" stop-color="#f8b028"/><stop offset="0.527" stop-color="#f49a24"/><stop offset="0.548" stop-color="#f08420"/><stop offset="0.682" stop-color="#e06018"/><stop offset="0.893" stop-color="#c83810"/><stop offset="0.997" stop-color="#a82008"/></linearGradient>
<linearGradient id="g442" gradientUnits="userSpaceOnUse" x1="0" y1="388.5" x2="0" y2="680.7"><stop offset="0.003" stop-color="#518ce4"/><stop offset="0.062" stop-color="#48a0e8"/><stop offset="0.146" stop-color="#3cd0d0"/><stop offset="0.208" stop-color="#8cf050"/><stop offset="0.306" stop-color="#c4ec40"/><stop offset="0.370" stop-color="#ecd838"/><stop offset="0.476" stop-color="#f8b028"/><stop offset="0.532" stop-color="#f49a24"/><stop offset="0.550" stop-color="#f08420"/><stop offset="0.680" stop-color="#e06018"/><stop offset="0.893" stop-color="#c83810"/><stop offset="0.997" stop-color="#a82008"/></linearGradient>
<linearGradient id="g450" gradientUnits="userSpaceOnUse" x1="0" y1="390.1" x2="0" y2="681.5"><stop offset="0.003" stop-color="#518ce4"/><stop offset="0.061" stop-color="#48a0e8"/><stop offset="0.147" stop-color="#3cd0d0"/><stop offset="0.209" stop-color="#8cf050"/><stop offset="0.308" stop-color="#c4ec40"/><stop offset="0.373" stop-color="#ecd838"/><stop offset="0.481" stop-color="#f8b028"/><stop offset="0.536" stop-color="#f49a24"/><stop offset="0.551" stop-color="#f08420"/><stop offset="0.678" stop-color="#e06018"/><stop offset="0.895" stop-color="#c83810"/><stop offset="0.997" stop-color="#a82008"/></linearGradient>
<linearGradient id="g458" gradientUnits="userSpaceOnUse" x1="0" y1="391.7" x2="0" y2="682.6"><stop offset="0.003" stop-color="#518ce4"/><stop offset="0.061" stop-color="#48a0e8"/><stop offset="0.147" stop-color="#3cd0d0"/><stop offset="0.209" stop-color="#8cf050"/><stop offset="0.310" stop-color="#c4ec40"/><stop offset="0.375" stop-color="#ecd838"/><stop offset="0.485" stop-color="#f8b028"/><stop offset="0.540" stop-color="#f49a24"/><stop offset="0.552" stop-color="#f08420"/><stop offset="0.675" stop-color="#e06018"/><stop offset="0.896" stop-color="#c83810"/><stop offset="0.997" stop-color="#a82008"/></linearGradient>
<linearGradient id="g466" gradientUnits="userSpaceOnUse" x1="0" y1="393.3" x2="0" y2="683.7"><stop offset="0.003" stop-color="#518ce4"/><stop offset="0.061" stop-color="#48a0e8"/><stop offset="0.148" stop-color="#3cd0d0"/><stop offset="0.210" stop-color="#8cf050"/><stop offset="0.312" stop-color="#c4ec40"/><stop offset="0.377" stop-color="#ecd838"/><stop offset="0.489" stop-color="#f8b028"/><stop offset="0.543" stop-color="#f49a24"/><stop offset="0.553" stop-color="#f08420"/><stop offset="0.672" stop-color="#e06018"/><stop offset="0.898" stop-color="#c83810"/><stop offset="0.997" stop-color="#a82008"/></linearGradient>
<linearGradient id="g474" gradientUnits="userSpaceOnUse" x1="0" y1="394.9" x2="0" y2="684.7"><stop offset="0.003" stop-color="#518ce4"/><stop offset="0.060" stop-color="#48a0e8"/><stop offset="0.148" stop-color="#3cd0d0"/><stop offset="0.210" stop-color="#8cf050"/><stop offset="0.314" stop-color="#c4ec40"/><stop offset="0.379" stop-color="#ecd838"/><stop offset="0.494" stop-color="#f8b028"/><stop offset="0.547" stop-color="#f49a24"/><stop offset="0.555" stop-color="#f08420"/><stop offset="0.669" stop-color="#e06018"/><stop offset="0.899" stop-color="#c83810"/><stop offset="0.997" stop-color="#a82008"/></linearGradient>
<linearGradient id="g482" gradientUnits="userSpaceOnUse" x1="0" y1="396.5" x2="0" y2="685.8"><stop offset="0.003" stop-color="#518ce4"/><stop offset="0.060" stop-color="#48a0e8"/><stop offset="0.149" stop-color="#3cd0d0"/><stop offset="0.210" stop-color="#8cf050"/><stop offset="0.317" stop-color="#c4ec40"/><stop offset="0.381" stop-color="#ecd838"/><stop offset="0.498" stop-color="#f8b028"/><stop offset="0.551" stop-color="#f49a24"/><stop offset="0.556" stop-color="#f08420"/><stop offset="0.666" stop-color="#e06018"/><stop offset="0.901" stop-color="#c83810"/><stop offset="0.997" stop-color="#a82008"/></linearGradient>
<linearGradient id="g490" gradientUnits="userSpaceOnUse" x1="0" y1="398" x2="0" y2="686.9"><stop offset="0.003" stop-color="#518ce4"/><stop offset="0.059" stop-color="#48a0e8"/><stop offset="0.149" stop-color="#3cd0d0"/><stop offset="0.211" stop-color="#8cf050"/><stop offset="0.319" stop-color="#c4ec40"/><stop offset="0.383" stop-color="#ecd838"/><stop offset="0.502" stop-color="#f8b028"/><stop offset="0.555" stop-color="#f49a24"/><stop offset="0.557" stop-color="#f08420"/><stop offset="0.664" stop-color="#e06018"/><stop offset="0.903" stop-color="#c83810"/><stop offset="0.997" stop-color="#a82008"/></linearGradient>
<linearGradient id="g498" gradientUnits="userSpaceOnUse" x1="0" y1="399.6" x2="0" y2="687.9"><stop offset="0.003" stop-color="#518ce4"/><stop offset="0.059" stop-color="#48a0e8"/><stop offset="0.150" stop-color="#3cd0d0"/><stop offset="0.211" stop-color="#8cf050"/><stop offset="0.321" stop-color="#c4ec40"/><stop offset="0.385" stop-color="#ecd838"/><stop offset="0.505" stop-color="#f8b028"/><stop offset="0.557" stop-color="#f49a24"/><stop offset="0.559" stop-color="#f08420"/><stop offset="0.661" stop-color="#e06018"/><stop offset="0.904" stop-color="#c83810"/><stop offset="0.997" stop-color="#a82008"/></linearGradient>
<linearGradient id="g506" gradientUnits="userSpaceOnUse" x1="0" y1="401.2" x2="0" y2="689"><stop offset="0.003" stop-color="#518ce4"/><stop offset="0.058" stop-color="#48a0e8"/><stop offset="0.151" stop-color="#3cd0d0"/><stop offset="0.212" stop-color="#8cf050"/><stop offset="0.323" stop-color="#c4ec40"/><stop offset="0.387" stop-color="#ecd838"/><stop offset="0.503" stop-color="#f8b028"/><stop offset="0.555" stop-color="#f49a24"/><stop offset="0.557" stop-color="#f08420"/><stop offset="0.662" stop-color="#e06018"/><stop offset="0.904" stop-color="#c83810"/><stop offset="0.997" stop-color="#a82008"/></linearGradient>
<linearGradient id="g514" gradientUnits="userSpaceOnUse" x1="0" y1="402.8" x2="0" y2="690.1"><stop offset="0.003" stop-color="#518ce4"/><stop offset="0.058" stop-color="#48a0e8"/><stop offset="0.151" stop-color="#3cd0d0"/><stop offset="0.212" stop-color="#8cf050"/><stop offset="0.325" stop-color="#c4ec40"/><stop offset="0.389" stop-color="#ecd838"/><stop offset="0.502" stop-color="#f8b028"/><stop offset="0.553" stop-color="#f49a24"/><stop offset="0.555" stop-color="#f08420"/><stop offset="0.662" stop-color="#e06018"/><stop offset="0.905" stop-color="#c83810"/><stop offset="0.997" stop-color="#a82008"/></linearGradient>
<linearGradient id="g522" gradientUnits="userSpaceOnUse" x1="0" y1="404.4" x2="0" y2="691.1"><stop offset="0.003" stop-color="#518ce4"/><stop offset="0.057" stop-color="#48a0e8"/><stop offset="0.152" stop-color="#3cd0d0"/><stop offset="0.212" stop-color="#8cf050"/><stop offset="0.327" stop-color="#c4ec40"/><stop offset="0.391" stop-color="#ecd838"/><stop offset="0.500" stop-color="#f8b028"/><stop offset="0.552" stop-color="#f49a24"/><stop offset="0.553" stop-color="#f08420"/><stop offset="0.662" stop-color="#e06018"/><stop offset="0.905" stop-color="#c83810"/><stop offset="0.997" stop-color="#a82008"/></linearGradient>
<linearGradient id="g530" gradientUnits="userSpaceOnUse" x1="0" y1="406" x2="0" y2="692.2"><stop offset="0.003" stop-color="#518ce4"/><stop offset="0.057" stop-color="#48a0e8"/><stop offset="0.152" stop-color="#3cd0d0"/><stop offset="0.213" stop-color="#8cf050"/><stop offset="0.330" stop-color="#c4ec40"/><stop offset="0.393" stop-color="#ecd838"/><stop offset="0.499" stop-color="#f8b028"/><stop offset="0.550" stop-color="#f49a24"/><stop offset="0.552" stop-color="#f08420"/><stop offset="0.663" stop-color="#e06018"/><stop offset="0.905" stop-color="#c83810"/><stop offset="0.997" stop-color="#a82008"/></linearGradient>
<linearGradient id="g538" gradientUnits="userSpaceOnUse" x1="0" y1="407.6" x2="0" y2="693.3"><stop offset="0.004" stop-color="#518ce4"/><stop offset="0.056" stop-color="#48a0e8"/><stop offset="0.153" stop-color="#3cd0d0"/><stop offset="0.213" stop-color="#8cf050"/><stop offset="0.332" stop-color="#c4ec40"/><stop offset="0.396" stop-color="#ecd838"/><stop offset="0.497" stop-color="#f8b028"/><stop offset="0.548" stop-color="#f49a24"/><stop offset="0.550" stop-color="#f08420"/><stop offset="0.663" stop-color="#e06018"/><stop offset="0.906" stop-color="#c83810"/><stop offset="0.996" stop-color="#a82008"/></linearGradient>
<linearGradient id="g546" gradientUnits="userSpaceOnUse" x1="0" y1="409.2" x2="0" y2="694.3"><stop offset="0.004" stop-color="#518ce4"/><stop offset="0.056" stop-color="#48a0e8"/><stop offset="0.154" stop-color="#3cd0d0"/><stop offset="0.213" stop-color="#8cf050"/><stop offset="0.334" stop-color="#c4ec40"/><stop offset="0.398" stop-color="#ecd838"/><stop offset="0.496" stop-color="#f8b028"/><stop offset="0.546" stop-color="#f49a24"/><stop offset="0.548" stop-color="#f08420"/><stop offset="0.663" stop-color="#e06018"/><stop offset="0.906" stop-color="#c83810"/><stop offset="0.996" stop-color="#a82008"/></linearGradient>
<linearGradient id="g554" gradientUnits="userSpaceOnUse" x1="0" y1="410.8" x2="0" y2="695.4"><stop offset="0.004" stop-color="#518ce4"/><stop offset="0.056" stop-color="#48a0e8"/><stop offset="0.154" stop-color="#3cd0d0"/><stop offset="0.214" stop-color="#8cf050"/><stop offset="0.336" stop-color="#c4ec40"/><stop offset="0.400" stop-color="#ecd838"/><stop offset="0.494" stop-color="#f8b028"/><stop offset="0.545" stop-color="#f49a24"/><stop offset="0.546" stop-color="#f08420"/><stop offset="0.664" stop-color="#e06018"/><stop offset="0.906" stop-color="#c83810"/><stop offset="0.996" stop-color="#a82008"/></linearGradient>
<linearGradient id="g562" gradientUnits="userSpaceOnUse" x1="0" y1="412.4" x2="0" y2="696.5"><stop offset="0.004" stop-color="#518ce4"/><stop offset="0.055" stop-color="#48a0e8"/><stop offset="0.155" stop-color="#3cd0d0"/><stop offset="0.214" stop-color="#8cf050"/><stop offset="0.338" stop-color="#c4ec40"/><stop offset="0.402" stop-color="#ecd838"/><stop offset="0.492" stop-color="#f8b028"/><stop offset="0.543" stop-color="#f49a24"/><stop offset="0.545" stop-color="#f08420"/><stop offset="0.668" stop-color="#e06018"/><stop offset="0.906" stop-color="#c83810"/><stop offset="0.996" stop-color="#a82008"/></linearGradient>
<linearGradient id="g570" gradientUnits="userSpaceOnUse" x1="0" y1="414" x2="0" y2="697.5"><stop offset="0.004" stop-color="#518ce4"/><stop offset="0.055" stop-color="#48a0e8"/><stop offset="0.155" stop-color="#3cd0d0"/><stop offset="0.215" stop-color="#8cf050"/><stop offset="0.341" stop-color="#c4ec40"/><stop offset="0.404" stop-color="#ecd838"/><stop offset="0.491" stop-color="#f8b028"/><stop offset="0.541" stop-color="#f49a24"/><stop offset="0.543" stop-color="#f08420"/><stop offset="0.675" stop-color="#e06018"/><stop offset="0.907" stop-color="#c83810"/><stop offset="0.996" stop-color="#a82008"/></linearGradient>
<linearGradient id="g578" gradientUnits="userSpaceOnUse" x1="0" y1="415.6" x2="0" y2="698.6"><stop offset="0.004" stop-color="#518ce4"/><stop offset="0.054" stop-color="#48a0e8"/><stop offset="0.156" stop-color="#3cd0d0"/><stop offset="0.215" stop-color="#8cf050"/><stop offset="0.343" stop-color="#c4ec40"/><stop offset="0.406" stop-color="#ecd838"/><stop offset="0.489" stop-color="#f8b028"/><stop offset="0.539" stop-color="#f49a24"/><stop offset="0.543" stop-color="#f08420"/><stop offset="0.681" stop-color="#e06018"/><stop offset="0.907" stop-color="#c83810"/><stop offset="0.996" stop-color="#a82008"/></linearGradient>
<linearGradient id="g586" gradientUnits="userSpaceOnUse" x1="0" y1="417.2" x2="0" y2="699.7"><stop offset="0.004" stop-color="#518ce4"/><stop offset="0.054" stop-color="#48a0e8"/><stop offset="0.157" stop-color="#3cd0d0"/><stop offset="0.215" stop-color="#8cf050"/><stop offset="0.345" stop-color="#c4ec40"/><stop offset="0.408" stop-color="#ecd838"/><stop offset="0.488" stop-color="#f8b028"/><stop offset="0.537" stop-color="#f49a24"/><stop offset="0.547" stop-color="#f08420"/><stop offset="0.687" stop-color="#e06018"/><stop offset="0.907" stop-color="#c83810"/><stop offset="0.996" stop-color="#a82008"/></linearGradient>
<linearGradient id="g594" gradientUnits="userSpaceOnUse" x1="0" y1="418.8" x2="0" y2="700.7"><stop offset="0.004" stop-color="#518ce4"/><stop offset="0.053" stop-color="#48a0e8"/><stop offset="0.157" stop-color="#3cd0d0"/><stop offset="0.216" stop-color="#8cf050"/><stop offset="0.347" stop-color="#c4ec40"/><stop offset="0.410" stop-color="#ecd838"/><stop offset="0.486" stop-color="#f8b028"/><stop offset="0.536" stop-color="#f49a24"/><stop offset="0.552" stop-color="#f08420"/><stop offset="0.693" stop-color="#e06018"/><stop offset="0.908" stop-color="#c83810"/><stop offset="0.996" stop-color="#a82008"/></linearGradient>
<linearGradient id="g602" gradientUnits="userSpaceOnUse" x1="0" y1="420.4" x2="0" y2="701.5"><stop offset="0.004" stop-color="#518ce4"/><stop offset="0.053" stop-color="#48a0e8"/><stop offset="0.158" stop-color="#3cd0d0"/><stop offset="0.216" stop-color="#8cf050"/><stop offset="0.350" stop-color="#c4ec40"/><stop offset="0.414" stop-color="#ecd838"/><stop offset="0.485" stop-color="#f8b028"/><stop offset="0.534" stop-color="#f49a24"/><stop offset="0.552" stop-color="#f08420"/><stop offset="0.703" stop-color="#e06018"/><stop offset="0.908" stop-color="#c83810"/><stop offset="0.996" stop-color="#a82008"/></linearGradient>
<linearGradient id="g610" gradientUnits="userSpaceOnUse" x1="0" y1="421.9" x2="0" y2="702"><stop offset="0.004" stop-color="#518ce4"/><stop offset="0.052" stop-color="#48a0e8"/><stop offset="0.159" stop-color="#3cd0d0"/><stop offset="0.217" stop-color="#8cf050"/><stop offset="0.353" stop-color="#c4ec40"/><stop offset="0.419" stop-color="#ecd838"/><stop offset="0.485" stop-color="#f8b028"/><stop offset="0.534" stop-color="#f49a24"/><stop offset="0.551" stop-color="#f08420"/><stop offset="0.714" stop-color="#e06018"/><stop offset="0.908" stop-color="#c83810"/><stop offset="0.996" stop-color="#a82008"/></linearGradient>
<linearGradient id="g618" gradientUnits="userSpaceOnUse" x1="0" y1="423.5" x2="0" y2="702.6"><stop offset="0.004" stop-color="#518ce4"/><stop offset="0.052" stop-color="#48a0e8"/><stop offset="0.160" stop-color="#3cd0d0"/><stop offset="0.218" stop-color="#8cf050"/><stop offset="0.356" stop-color="#c4ec40"/><stop offset="0.423" stop-color="#ecd838"/><stop offset="0.484" stop-color="#f8b028"/><stop offset="0.533" stop-color="#f49a24"/><stop offset="0.551" stop-color="#f08420"/><stop offset="0.725" stop-color="#e06018"/><stop offset="0.909" stop-color="#c83810"/><stop offset="0.996" stop-color="#a82008"/></linearGradient>
<linearGradient id="g626" gradientUnits="userSpaceOnUse" x1="0" y1="425.1" x2="0" y2="703.2"><stop offset="0.004" stop-color="#518ce4"/><stop offset="0.052" stop-color="#48a0e8"/><stop offset="0.161" stop-color="#3cd0d0"/><stop offset="0.219" stop-color="#8cf050"/><stop offset="0.359" stop-color="#c4ec40"/><stop offset="0.427" stop-color="#ecd838"/><stop offset="0.483" stop-color="#f8b028"/><stop offset="0.532" stop-color="#f49a24"/><stop offset="0.550" stop-color="#f08420"/><stop offset="0.737" stop-color="#e06018"/><stop offset="0.909" stop-color="#c83810"/><stop offset="0.996" stop-color="#a82008"/></linearGradient>
<linearGradient id="g634" gradientUnits="userSpaceOnUse" x1="0" y1="426.7" x2="0" y2="703.9"><stop offset="0.004" stop-color="#518ce4"/><stop offset="0.051" stop-color="#48a0e8"/><stop offset="0.162" stop-color="#3cd0d0"/><stop offset="0.219" stop-color="#8cf050"/><stop offset="0.362" stop-color="#c4ec40"/><stop offset="0.432" stop-color="#ecd838"/><stop offset="0.483" stop-color="#f8b028"/><stop offset="0.531" stop-color="#f49a24"/><stop offset="0.549" stop-color="#f08420"/><stop offset="0.748" stop-color="#e06018"/><stop offset="0.910" stop-color="#c83810"/><stop offset="0.996" stop-color="#a82008"/></linearGradient>
<linearGradient id="g642" gradientUnits="userSpaceOnUse" x1="0" y1="428.3" x2="0" y2="704.5"><stop offset="0.004" stop-color="#518ce4"/><stop offset="0.051" stop-color="#48a0e8"/><stop offset="0.162" stop-color="#3cd0d0"/><stop offset="0.220" stop-color="#8cf050"/><stop offset="0.365" stop-color="#c4ec40"/><stop offset="0.436" stop-color="#ecd838"/><stop offset="0.482" stop-color="#f8b028"/><stop offset="0.530" stop-color="#f49a24"/><stop offset="0.548" stop-color="#f08420"/><stop offset="0.759" stop-color="#e06018"/><stop offset="0.910" stop-color="#c83810"/><stop offset="0.996" stop-color="#a82008"/></linearGradient>
<linearGradient id="g650" gradientUnits="userSpaceOnUse" x1="0" y1="429.9" x2="0" y2="705"><stop offset="0.004" stop-color="#518ce4"/><stop offset="0.051" stop-color="#48a0e8"/><stop offset="0.163" stop-color="#3cd0d0"/><stop offset="0.221" stop-color="#8cf050"/><stop offset="0.362" stop-color="#c4ec40"/><stop offset="0.435" stop-color="#ecd838"/><stop offset="0.482" stop-color="#f8b028"/><stop offset="0.530" stop-color="#f49a24"/><stop offset="0.548" stop-color="#f08420"/><stop offset="0.765" stop-color="#e06018"/><stop offset="0.910" stop-color="#c83810"/><stop offset="0.996" stop-color="#a82008"/></linearGradient>
<linearGradient id="g658" gradientUnits="userSpaceOnUse" x1="0" y1="431.5" x2="0" y2="705.6"><stop offset="0.004" stop-color="#518ce4"/><stop offset="0.050" stop-color="#48a0e8"/><stop offset="0.164" stop-color="#3cd0d0"/><stop offset="0.222" stop-color="#8cf050"/><stop offset="0.355" stop-color="#c4ec40"/><stop offset="0.429" stop-color="#ecd838"/><stop offset="0.482" stop-color="#f8b028"/><stop offset="0.532" stop-color="#f49a24"/><stop offset="0.550" stop-color="#f08420"/><stop offset="0.763" stop-color="#e06018"/><stop offset="0.908" stop-color="#c83810"/><stop offset="0.996" stop-color="#a82008"/></linearGradient>
<linearGradient id="g666" gradientUnits="userSpaceOnUse" x1="0" y1="433.1" x2="0" y2="706.2"><stop offset="0.004" stop-color="#518ce4"/><stop offset="0.050" stop-color="#48a0e8"/><stop offset="0.165" stop-color="#3cd0d0"/><stop offset="0.222" stop-color="#8cf050"/><stop offset="0.347" stop-color="#c4ec40"/><stop offset="0.423" stop-color="#ecd838"/><stop offset="0.482" stop-color="#f8b028"/><stop offset="0.534" stop-color="#f49a24"/><stop offset="0.552" stop-color="#f08420"/><stop offset="0.762" stop-color="#e06018"/><stop offset="0.907" stop-color="#c83810"/><stop offset="0.996" stop-color="#a82008"/></linearGradient>
<linearGradient id="g674" gradientUnits="userSpaceOnUse" x1="0" y1="434.7" x2="0" y2="706.9"><stop offset="0.004" stop-color="#518ce4"/><stop offset="0.049" stop-color="#48a0e8"/><stop offset="0.166" stop-color="#3cd0d0"/><stop offset="0.223" stop-color="#8cf050"/><stop offset="0.339" stop-color="#c4ec40"/><stop offset="0.417" stop-color="#ecd838"/><stop offset="0.481" stop-color="#f8b028"/><stop offset="0.535" stop-color="#f49a24"/><stop offset="0.554" stop-color="#f08420"/><stop offset="0.761" stop-color="#e06018"/><stop offset="0.905" stop-color="#c83810"/><stop offset="0.996" stop-color="#a82008"/></linearGradient>
<linearGradient id="g682" gradientUnits="userSpaceOnUse" x1="0" y1="436.3" x2="0" y2="707.5"><stop offset="0.004" stop-color="#518ce4"/><stop offset="0.049" stop-color="#48a0e8"/><stop offset="0.167" stop-color="#3cd0d0"/><stop offset="0.224" stop-color="#8cf050"/><stop offset="0.332" stop-color="#c4ec40"/><stop offset="0.411" stop-color="#ecd838"/><stop offset="0.481" stop-color="#f8b028"/><stop offset="0.537" stop-color="#f49a24"/><stop offset="0.556" stop-color="#f08420"/><stop offset="0.760" stop-color="#e06018"/><stop offset="0.904" stop-color="#c83810"/><stop offset="0.996" stop-color="#a82008"/></linearGradient>
<linearGradient id="g690" gradientUnits="userSpaceOnUse" x1="0" y1="437.9" x2="0" y2="708"><stop offset="0.004" stop-color="#518ce4"/><stop offset="0.049" stop-color="#48a0e8"/><stop offset="0.168" stop-color="#3cd0d0"/><stop offset="0.225" stop-color="#8cf050"/><stop offset="0.324" stop-color="#c4ec40"/><stop offset="0.404" stop-color="#ecd838"/><stop offset="0.481" stop-color="#f8b028"/><stop offset="0.539" stop-color="#f49a24"/><stop offset="0.558" stop-color="#f08420"/><stop offset="0.759" stop-color="#e06018"/><stop offset="0.903" stop-color="#c83810"/><stop offset="0.996" stop-color="#a82008"/></linearGradient>
<linearGradient id="g698" gradientUnits="userSpaceOnUse" x1="0" y1="439.5" x2="0" y2="708.6"><stop offset="0.004" stop-color="#518ce4"/><stop offset="0.048" stop-color="#48a0e8"/><stop offset="0.169" stop-color="#3cd0d0"/><stop offset="0.226" stop-color="#8cf050"/><stop offset="0.316" stop-color="#c4ec40"/><stop offset="0.398" stop-color="#ecd838"/><stop offset="0.481" stop-color="#f8b028"/><stop offset="0.541" stop-color="#f49a24"/><stop offset="0.560" stop-color="#f08420"/><stop offset="0.758" stop-color="#e06018"/><stop offset="0.901" stop-color="#c83810"/><stop offset="0.996" stop-color="#a82008"/></linearGradient>
<linearGradient id="g706" gradientUnits="userSpaceOnUse" x1="0" y1="441.1" x2="0" y2="709.2"><stop offset="0.004" stop-color="#518ce4"/><stop offset="0.048" stop-color="#48a0e8"/><stop offset="0.170" stop-color="#3cd0d0"/><stop offset="0.227" stop-color="#8cf050"/><stop offset="0.308" stop-color="#c4ec40"/><stop offset="0.391" stop-color="#ecd838"/><stop offset="0.480" stop-color="#f8b028"/><stop offset="0.543" stop-color="#f49a24"/><stop offset="0.562" stop-color="#f08420"/><stop offset="0.756" stop-color="#e06018"/><stop offset="0.900" stop-color="#c83810"/><stop offset="0.996" stop-color="#a82008"/></linearGradient>
<linearGradient id="g714" gradientUnits="userSpaceOnUse" x1="0" y1="442.7" x2="0" y2="709.9"><stop offset="0.004" stop-color="#518ce4"/><stop offset="0.047" stop-color="#48a0e8"/><stop offset="0.171" stop-color="#3cd0d0"/><stop offset="0.227" stop-color="#8cf050"/><stop offset="0.300" stop-color="#c4ec40"/><stop offset="0.385" stop-color="#ecd838"/><stop offset="0.480" stop-color="#f8b028"/><stop offset="0.544" stop-color="#f49a24"/><stop offset="0.564" stop-color="#f08420"/><stop offset="0.755" stop-color="#e06018"/><stop offset="0.898" stop-color="#c83810"/><stop offset="0.996" stop-color="#a82008"/></linearGradient>
<linearGradient id="g722" gradientUnits="userSpaceOnUse" x1="0" y1="444.3" x2="0" y2="710.5"><stop offset="0.004" stop-color="#518ce4"/><stop offset="0.047" stop-color="#48a0e8"/><stop offset="0.172" stop-color="#3cd0d0"/><stop offset="0.228" stop-color="#8cf050"/><stop offset="0.292" stop-color="#c4ec40"/><stop offset="0.378" stop-color="#ecd838"/><stop offset="0.480" stop-color="#f8b028"/><stop offset="0.546" stop-color="#f49a24"/><stop offset="0.566" stop-color="#f08420"/><stop offset="0.754" stop-color="#e06018"/><stop offset="0.897" stop-color="#c83810"/><stop offset="0.996" stop-color="#a82008"/></linearGradient>
<linearGradient id="g730" gradientUnits="userSpaceOnUse" x1="0" y1="445.9" x2="0" y2="711"><stop offset="0.004" stop-color="#518ce4"/><stop offset="0.046" stop-color="#48a0e8"/><stop offset="0.167" stop-color="#3cd0d0"/><stop offset="0.225" stop-color="#8cf050"/><stop offset="0.292" stop-color="#c4ec40"/><stop offset="0.381" stop-color="#ecd838"/><stop offset="0.483" stop-color="#f8b028"/><stop offset="0.548" stop-color="#f49a24"/><stop offset="0.572" stop-color="#f08420"/><stop offset="0.753" stop-color="#e06018"/><stop offset="0.897" stop-color="#c83810"/><stop offset="0.996" stop-color="#a82008"/></linearGradient>
<linearGradient id="g738" gradientUnits="userSpaceOnUse" x1="0" y1="447.4" x2="0" y2="711.6"><stop offset="0.004" stop-color="#518ce4"/><stop offset="0.046" stop-color="#48a0e8"/><stop offset="0.163" stop-color="#3cd0d0"/><stop offset="0.222" stop-color="#8cf050"/><stop offset="0.292" stop-color="#c4ec40"/><stop offset="0.383" stop-color="#ecd838"/><stop offset="0.486" stop-color="#f8b028"/><stop offset="0.550" stop-color="#f49a24"/><stop offset="0.577" stop-color="#f08420"/><stop offset="0.752" stop-color="#e06018"/><stop offset="0.897" stop-color="#c83810"/><stop offset="0.996" stop-color="#a82008"/></linearGradient>
<linearGradient id="g746" gradientUnits="userSpaceOnUse" x1="0" y1="449" x2="0" y2="712.2"><stop offset="0.004" stop-color="#518ce4"/><stop offset="0.046" stop-color="#48a0e8"/><stop offset="0.158" stop-color="#3cd0d0"/><stop offset="0.219" stop-color="#8cf050"/><stop offset="0.292" stop-color="#c4ec40"/><stop offset="0.386" stop-color="#ecd838"/><stop offset="0.489" stop-color="#f8b028"/><stop offset="0.552" stop-color="#f49a24"/><stop offset="0.583" stop-color="#f08420"/><stop offset="0.751" stop-color="#e06018"/><stop offset="0.897" stop-color="#c83810"/><stop offset="0.996" stop-color="#a82008"/></linearGradient>
<linearGradient id="g754" gradientUnits="userSpaceOnUse" x1="0" y1="450.6" x2="0" y2="712.9"><stop offset="0.004" stop-color="#518ce4"/><stop offset="0.045" stop-color="#48a0e8"/><stop offset="0.153" stop-color="#3cd0d0"/><stop offset="0.216" stop-color="#8cf050"/><stop offset="0.292" stop-color="#c4ec40"/><stop offset="0.388" stop-color="#ecd838"/><stop offset="0.493" stop-color="#f8b028"/><stop offset="0.554" stop-color="#f49a24"/><stop offset="0.588" stop-color="#f08420"/><stop offset="0.749" stop-color="#e06018"/><stop offset="0.898" stop-color="#c83810"/><stop offset="0.996" stop-color="#a82008"/></linearGradient>
<linearGradient id="g762" gradientUnits="userSpaceOnUse" x1="0" y1="452.2" x2="0" y2="713.5"><stop offset="0.004" stop-color="#518ce4"/><stop offset="0.045" stop-color="#48a0e8"/><stop offset="0.149" stop-color="#3cd0d0"/><stop offset="0.212" stop-color="#8cf050"/><stop offset="0.292" stop-color="#c4ec40"/><stop offset="0.390" stop-color="#ecd838"/><stop offset="0.496" stop-color="#f8b028"/><stop offset="0.556" stop-color="#f49a24"/><stop offset="0.594" stop-color="#f08420"/><stop offset="0.748" stop-color="#e06018"/><stop offset="0.898" stop-color="#c83810"/><stop offset="0.996" stop-color="#a82008"/></linearGradient>
<linearGradient id="g770" gradientUnits="userSpaceOnUse" x1="0" y1="453.8" x2="0" y2="714"><stop offset="0.004" stop-color="#518ce4"/><stop offset="0.044" stop-color="#48a0e8"/><stop offset="0.144" stop-color="#3cd0d0"/><stop offset="0.209" stop-color="#8cf050"/><stop offset="0.292" stop-color="#c4ec40"/><stop offset="0.393" stop-color="#ecd838"/><stop offset="0.499" stop-color="#f8b028"/><stop offset="0.558" stop-color="#f49a24"/><stop offset="0.600" stop-color="#f08420"/><stop offset="0.747" stop-color="#e06018"/><stop offset="0.898" stop-color="#c83810"/><stop offset="0.996" stop-color="#a82008"/></linearGradient>
<linearGradient id="g778" gradientUnits="userSpaceOnUse" x1="0" y1="455.4" x2="0" y2="714.6"><stop offset="0.004" stop-color="#518ce4"/><stop offset="0.044" stop-color="#48a0e8"/><stop offset="0.139" stop-color="#3cd0d0"/><stop offset="0.206" stop-color="#8cf050"/><stop offset="0.292" stop-color="#c4ec40"/><stop offset="0.395" stop-color="#ecd838"/><stop offset="0.502" stop-color="#f8b028"/><stop offset="0.560" stop-color="#f49a24"/><stop offset="0.606" stop-color="#f08420"/><stop offset="0.746" stop-color="#e06018"/><stop offset="0.898" stop-color="#c83810"/><stop offset="0.996" stop-color="#a82008"/></linearGradient>
<linearGradient id="g786" gradientUnits="userSpaceOnUse" x1="0" y1="457" x2="0" y2="715.2"><stop offset="0.004" stop-color="#518ce4"/><stop offset="0.043" stop-color="#48a0e8"/><stop offset="0.134" stop-color="#3cd0d0"/><stop offset="0.203" stop-color="#8cf050"/><stop offset="0.292" stop-color="#c4ec40"/><stop offset="0.398" stop-color="#ecd838"/><stop offset="0.506" stop-color="#f8b028"/><stop offset="0.562" stop-color="#f49a24"/><stop offset="0.611" stop-color="#f08420"/><stop offset="0.745" stop-color="#e06018"/><stop offset="0.899" stop-color="#c83810"/><stop offset="0.996" stop-color="#a82008"/></linearGradient>
<linearGradient id="g794" gradientUnits="userSpaceOnUse" x1="0" y1="458.6" x2="0" y2="715.9"><stop offset="0.004" stop-color="#518ce4"/><stop offset="0.043" stop-color="#48a0e8"/><stop offset="0.130" stop-color="#3cd0d0"/><stop offset="0.199" stop-color="#8cf050"/><stop offset="0.292" stop-color="#c4ec40"/><stop offset="0.400" stop-color="#ecd838"/><stop offset="0.509" stop-color="#f8b028"/><stop offset="0.564" stop-color="#f49a24"/><stop offset="0.617" stop-color="#f08420"/><stop offset="0.743" stop-color="#e06018"/><stop offset="0.899" stop-color="#c83810"/><stop offset="0.996" stop-color="#a82008"/></linearGradient>
<linearGradient id="g802" gradientUnits="userSpaceOnUse" x1="0" y1="460.7" x2="0" y2="715.9"><stop offset="0.004" stop-color="#518ce4"/><stop offset="0.042" stop-color="#48a0e8"/><stop offset="0.126" stop-color="#3cd0d0"/><stop offset="0.198" stop-color="#8cf050"/><stop offset="0.292" stop-color="#c4ec40"/><stop offset="0.402" stop-color="#ecd838"/><stop offset="0.512" stop-color="#f8b028"/><stop offset="0.566" stop-color="#f49a24"/><stop offset="0.622" stop-color="#f08420"/><stop offset="0.744" stop-color="#e06018"/><stop offset="0.899" stop-color="#c83810"/><stop offset="0.996" stop-color="#a82008"/></linearGradient>
<linearGradient id="g810" gradientUnits="userSpaceOnUse" x1="0" y1="462.9" x2="0" y2="715.7"><stop offset="0.004" stop-color="#518ce4"/><stop offset="0.040" stop-color="#48a0e8"/><stop offset="0.123" stop-color="#3cd0d0"/><stop offset="0.198" stop-color="#8cf050"/><stop offset="0.293" stop-color="#c4ec40"/><stop offset="0.405" stop-color="#ecd838"/><stop offset="0.516" stop-color="#f8b028"/><stop offset="0.568" stop-color="#f49a24"/><stop offset="0.626" stop-color="#f08420"/><stop offset="0.746" stop-color="#e06018"/><stop offset="0.899" stop-color="#c83810"/><stop offset="0.996" stop-color="#a82008"/></linearGradient>
<linearGradient id="g818" gradientUnits="userSpaceOnUse" x1="0" y1="465.1" x2="0" y2="715.5"><stop offset="0.004" stop-color="#518ce4"/><stop offset="0.039" stop-color="#48a0e8"/><stop offset="0.120" stop-color="#3cd0d0"/><stop offset="0.197" stop-color="#8cf050"/><stop offset="0.294" stop-color="#c4ec40"/><stop offset="0.407" stop-color="#ecd838"/><stop offset="0.519" stop-color="#f8b028"/><stop offset="0.571" stop-color="#f49a24"/><stop offset="0.631" stop-color="#f08420"/><stop offset="0.748" stop-color="#e06018"/><stop offset="0.900" stop-color="#c83810"/><stop offset="0.996" stop-color="#a82008"/></linearGradient>
<linearGradient id="g826" gradientUnits="userSpaceOnUse" x1="0" y1="467.3" x2="0" y2="715.3"><stop offset="0.004" stop-color="#518ce4"/><stop offset="0.037" stop-color="#48a0e8"/><stop offset="0.117" stop-color="#3cd0d0"/><stop offset="0.197" stop-color="#8cf050"/><stop offset="0.295" stop-color="#c4ec40"/><stop offset="0.410" stop-color="#ecd838"/><stop offset="0.522" stop-color="#f8b028"/><stop offset="0.573" stop-color="#f49a24"/><stop offset="0.635" stop-color="#f08420"/><stop offset="0.750" stop-color="#e06018"/><stop offset="0.900" stop-color="#c83810"/><stop offset="0.996" stop-color="#a82008"/></linearGradient>
<linearGradient id="g834" gradientUnits="userSpaceOnUse" x1="0" y1="469.5" x2="0" y2="715.1"><stop offset="0.004" stop-color="#518ce4"/><stop offset="0.035" stop-color="#48a0e8"/><stop offset="0.114" stop-color="#3cd0d0"/><stop offset="0.196" stop-color="#8cf050"/><stop offset="0.296" stop-color="#c4ec40"/><stop offset="0.412" stop-color="#ecd838"/><stop offset="0.526" stop-color="#f8b028"/><stop offset="0.576" stop-color="#f49a24"/><stop offset="0.640" stop-color="#f08420"/><stop offset="0.751" stop-color="#e06018"/><stop offset="0.900" stop-color="#c83810"/><stop offset="0.996" stop-color="#a82008"/></linearGradient>
<linearGradient id="g842" gradientUnits="userSpaceOnUse" x1="0" y1="471.7" x2="0" y2="714.9"><stop offset="0.004" stop-color="#518ce4"/><stop offset="0.034" stop-color="#48a0e8"/><stop offset="0.110" stop-color="#3cd0d0"/><stop offset="0.196" stop-color="#8cf050"/><stop offset="0.296" stop-color="#c4ec40"/><stop offset="0.414" stop-color="#ecd838"/><stop offset="0.530" stop-color="#f8b028"/><stop offset="0.578" stop-color="#f49a24"/><stop offset="0.645" stop-color="#f08420"/><stop offset="0.753" stop-color="#e06018"/><stop offset="0.900" stop-color="#c83810"/><stop offset="0.996" stop-color="#a82008"/></linearGradient>
<linearGradient id="g850" gradientUnits="userSpaceOnUse" x1="0" y1="474" x2="0" y2="714.8"><stop offset="0.004" stop-color="#518ce4"/><stop offset="0.032" stop-color="#48a0e8"/><stop offset="0.107" stop-color="#3cd0d0"/><stop offset="0.195" stop-color="#8cf050"/><stop offset="0.297" stop-color="#c4ec40"/><stop offset="0.417" stop-color="#ecd838"/><stop offset="0.533" stop-color="#f8b028"/><stop offset="0.581" stop-color="#f49a24"/><stop offset="0.650" stop-color="#f08420"/><stop offset="0.755" stop-color="#e06018"/><stop offset="0.901" stop-color="#c83810"/><stop offset="0.996" stop-color="#a82008"/></linearGradient>
<linearGradient id="g858" gradientUnits="userSpaceOnUse" x1="0" y1="476.2" x2="0" y2="714.6"><stop offset="0.004" stop-color="#518ce4"/><stop offset="0.030" stop-color="#48a0e8"/><stop offset="0.104" stop-color="#3cd0d0"/><stop offset="0.195" stop-color="#8cf050"/><stop offset="0.298" stop-color="#c4ec40"/><stop offset="0.420" stop-color="#ecd838"/><stop offset="0.537" stop-color="#f8b028"/><stop offset="0.583" stop-color="#f49a24"/><stop offset="0.654" stop-color="#f08420"/><stop offset="0.757" stop-color="#e06018"/><stop offset="0.901" stop-color="#c83810"/><stop offset="0.996" stop-color="#a82008"/></linearGradient>
<linearGradient id="g866" gradientUnits="userSpaceOnUse" x1="0" y1="477.2" x2="0" y2="714.4"><stop offset="0.004" stop-color="#518ce4"/><stop offset="0.029" stop-color="#48a0e8"/><stop offset="0.104" stop-color="#3cd0d0"/><stop offset="0.198" stop-color="#8cf050"/><stop offset="0.302" stop-color="#c4ec40"/><stop offset="0.425" stop-color="#ecd838"/><stop offset="0.543" stop-color="#f8b028"/><stop offset="0.588" stop-color="#f49a24"/><stop offset="0.661" stop-color="#f08420"/><stop offset="0.760" stop-color="#e06018"/><stop offset="0.902" stop-color="#c83810"/><stop offset="0.996" stop-color="#a82008"/></linearGradient>
<linearGradient id="g874" gradientUnits="userSpaceOnUse" x1="0" y1="477.6" x2="0" y2="714.2"><stop offset="0.004" stop-color="#518ce4"/><stop offset="0.028" stop-color="#48a0e8"/><stop offset="0.108" stop-color="#3cd0d0"/><stop offset="0.204" stop-color="#8cf050"/><stop offset="0.309" stop-color="#c4ec40"/><stop offset="0.432" stop-color="#ecd838"/><stop offset="0.550" stop-color="#f8b028"/><stop offset="0.594" stop-color="#f49a24"/><stop offset="0.669" stop-color="#f08420"/><stop offset="0.764" stop-color="#e06018"/><stop offset="0.903" stop-color="#c83810"/><stop offset="0.996" stop-color="#a82008"/></linearGradient>
<linearGradient id="g882" gradientUnits="userSpaceOnUse" x1="0" y1="478" x2="0" y2="714"><stop offset="0.004" stop-color="#518ce4"/><stop offset="0.027" stop-color="#48a0e8"/><stop offset="0.111" stop-color="#3cd0d0"/><stop offset="0.210" stop-color="#8cf050"/><stop offset="0.315" stop-color="#c4ec40"/><stop offset="0.439" stop-color="#ecd838"/><stop offset="0.558" stop-color="#f8b028"/><stop offset="0.600" stop-color="#f49a24"/><stop offset="0.677" stop-color="#f08420"/><stop offset="0.768" stop-color="#e06018"/><stop offset="0.904" stop-color="#c83810"/><stop offset="0.996" stop-color="#a82008"/></linearGradient>
<linearGradient id="g890" gradientUnits="userSpaceOnUse" x1="0" y1="478.4" x2="0" y2="713.8"><stop offset="0.004" stop-color="#518ce4"/><stop offset="0.026" stop-color="#48a0e8"/><stop offset="0.115" stop-color="#3cd0d0"/><stop offset="0.216" stop-color="#8cf050"/><stop offset="0.321" stop-color="#c4ec40"/><stop offset="0.446" stop-color="#ecd838"/><stop offset="0.565" stop-color="#f8b028"/><stop offset="0.606" stop-color="#f49a24"/><stop offset="0.684" stop-color="#f08420"/><stop offset="0.771" stop-color="#e06018"/><stop offset="0.905" stop-color="#c83810"/><stop offset="0.996" stop-color="#a82008"/></linearGradient>
<linearGradient id="g898" gradientUnits="userSpaceOnUse" x1="0" y1="478.8" x2="0" y2="713.7"><stop offset="0.004" stop-color="#518ce4"/><stop offset="0.025" stop-color="#48a0e8"/><stop offset="0.116" stop-color="#3cd0d0"/><stop offset="0.219" stop-color="#8cf050"/><stop offset="0.328" stop-color="#c4ec40"/><stop offset="0.454" stop-color="#ecd838"/><stop offset="0.573" stop-color="#f8b028"/><stop offset="0.612" stop-color="#f49a24"/><stop offset="0.692" stop-color="#f08420"/><stop offset="0.775" stop-color="#e06018"/><stop offset="0.906" stop-color="#c83810"/><stop offset="0.996" stop-color="#a82008"/></linearGradient>
<linearGradient id="g906" gradientUnits="userSpaceOnUse" x1="0" y1="479.2" x2="0" y2="713.5"><stop offset="0.004" stop-color="#518ce4"/><stop offset="0.025" stop-color="#48a0e8"/><stop offset="0.114" stop-color="#3cd0d0"/><stop offset="0.219" stop-color="#8cf050"/><stop offset="0.334" stop-color="#c4ec40"/><stop offset="0.461" stop-color="#ecd838"/><stop offset="0.580" stop-color="#f8b028"/><stop offset="0.618" stop-color="#f49a24"/><stop offset="0.700" stop-color="#f08420"/><stop offset="0.779" stop-color="#e06018"/><stop offset="0.907" stop-color="#c83810"/><stop offset="0.996" stop-color="#a82008"/></linearGradient>
<linearGradient id="g914" gradientUnits="userSpaceOnUse" x1="0" y1="479.6" x2="0" y2="713.3"><stop offset="0.004" stop-color="#518ce4"/><stop offset="0.024" stop-color="#48a0e8"/><stop offset="0.112" stop-color="#3cd0d0"/><stop offset="0.220" stop-color="#8cf050"/><stop offset="0.341" stop-color="#c4ec40"/><stop offset="0.468" stop-color="#ecd838"/><stop offset="0.588" stop-color="#f8b028"/><stop offset="0.624" stop-color="#f49a24"/><stop offset="0.708" stop-color="#f08420"/><stop offset="0.783" stop-color="#e06018"/><stop offset="0.908" stop-color="#c83810"/><stop offset="0.996" stop-color="#a82008"/></linearGradient>
<linearGradient id="g922" gradientUnits="userSpaceOnUse" x1="0" y1="480" x2="0" y2="713.1"><stop offset="0.004" stop-color="#518ce4"/><stop offset="0.023" stop-color="#48a0e8"/><stop offset="0.111" stop-color="#3cd0d0"/><stop offset="0.220" stop-color="#8cf050"/><stop offset="0.347" stop-color="#c4ec40"/><stop offset="0.476" stop-color="#ecd838"/><stop offset="0.596" stop-color="#f8b028"/><stop offset="0.630" stop-color="#f49a24"/><stop offset="0.716" stop-color="#f08420"/><stop offset="0.787" stop-color="#e06018"/><stop offset="0.909" stop-color="#c83810"/><stop offset="0.996" stop-color="#a82008"/></linearGradient>
<linearGradient id="g930" gradientUnits="userSpaceOnUse" x1="0" y1="480.3" x2="0" y2="715.2"><stop offset="0.004" stop-color="#518ce4"/><stop offset="0.022" stop-color="#48a0e8"/><stop offset="0.108" stop-color="#3cd0d0"/><stop offset="0.218" stop-color="#8cf050"/><stop offset="0.349" stop-color="#c4ec40"/><stop offset="0.477" stop-color="#ecd838"/><stop offset="0.596" stop-color="#f8b028"/><stop offset="0.630" stop-color="#f49a24"/><stop offset="0.715" stop-color="#f08420"/><stop offset="0.785" stop-color="#e06018"/><stop offset="0.905" stop-color="#c83810"/><stop offset="0.996" stop-color="#a82008"/></linearGradient>
<linearGradient id="g938" gradientUnits="userSpaceOnUse" x1="0" y1="480.7" x2="0" y2="721.1"><stop offset="0.004" stop-color="#518ce4"/><stop offset="0.020" stop-color="#48a0e8"/><stop offset="0.103" stop-color="#3cd0d0"/><stop offset="0.213" stop-color="#8cf050"/><stop offset="0.343" stop-color="#c4ec40"/><stop offset="0.468" stop-color="#ecd838"/><stop offset="0.584" stop-color="#f8b028"/><stop offset="0.620" stop-color="#f49a24"/><stop offset="0.701" stop-color="#f08420"/><stop offset="0.774" stop-color="#e06018"/><stop offset="0.891" stop-color="#c83810"/><stop offset="0.996" stop-color="#a82008"/></linearGradient>
<linearGradient id="g946" gradientUnits="userSpaceOnUse" x1="0" y1="481.1" x2="0" y2="726.9"><stop offset="0.004" stop-color="#518ce4"/><stop offset="0.019" stop-color="#48a0e8"/><stop offset="0.099" stop-color="#3cd0d0"/><stop offset="0.208" stop-color="#8cf050"/><stop offset="0.337" stop-color="#c4ec40"/><stop offset="0.459" stop-color="#ecd838"/><stop offset="0.573" stop-color="#f8b028"/><stop offset="0.610" stop-color="#f49a24"/><stop offset="0.688" stop-color="#f08420"/><stop offset="0.763" stop-color="#e06018"/><stop offset="0.878" stop-color="#c83810"/><stop offset="0.996" stop-color="#a82008"/></linearGradient>
<linearGradient id="g954" gradientUnits="userSpaceOnUse" x1="0" y1="481.5" x2="0" y2="732.8"><stop offset="0.004" stop-color="#518ce4"/><stop offset="0.018" stop-color="#48a0e8"/><stop offset="0.095" stop-color="#3cd0d0"/><stop offset="0.204" stop-color="#8cf050"/><stop offset="0.331" stop-color="#c4ec40"/><stop offset="0.451" stop-color="#ecd838"/><stop offset="0.562" stop-color="#f8b028"/><stop offset="0.601" stop-color="#f49a24"/><stop offset="0.675" stop-color="#f08420"/><stop offset="0.753" stop-color="#e06018"/><stop offset="0.866" stop-color="#c83810"/><stop offset="0.996" stop-color="#a82008"/></linearGradient>
<linearGradient id="g962" gradientUnits="userSpaceOnUse" x1="0" y1="481.9" x2="0" y2="738.7"><stop offset="0.004" stop-color="#518ce4"/><stop offset="0.016" stop-color="#48a0e8"/><stop offset="0.091" stop-color="#3cd0d0"/><stop offset="0.199" stop-color="#8cf050"/><stop offset="0.326" stop-color="#c4ec40"/><stop offset="0.443" stop-color="#ecd838"/><stop offset="0.552" stop-color="#f8b028"/><stop offset="0.592" stop-color="#f49a24"/><stop offset="0.662" stop-color="#f08420"/><stop offset="0.744" stop-color="#e06018"/><stop offset="0.854" stop-color="#c83810"/><stop offset="0.996" stop-color="#a82008"/></linearGradient>
<linearGradient id="g970" gradientUnits="userSpaceOnUse" x1="0" y1="482.3" x2="0" y2="744.6"><stop offset="0.004" stop-color="#518ce4"/><stop offset="0.015" stop-color="#48a0e8"/><stop offset="0.088" stop-color="#3cd0d0"/><stop offset="0.195" stop-color="#8cf050"/><stop offset="0.321" stop-color="#c4ec40"/><stop offset="0.435" stop-color="#ecd838"/><stop offset="0.542" stop-color="#f8b028"/><stop offset="0.584" stop-color="#f49a24"/><stop offset="0.650" stop-color="#f08420"/><stop offset="0.734" stop-color="#e06018"/><stop offset="0.843" stop-color="#c83810"/><stop offset="0.996" stop-color="#a82008"/></linearGradient>
<linearGradient id="g978" gradientUnits="userSpaceOnUse" x1="0" y1="482.7" x2="0" y2="750.4"><stop offset="0.004" stop-color="#518ce4"/><stop offset="0.014" stop-color="#48a0e8"/><stop offset="0.084" stop-color="#3cd0d0"/><stop offset="0.191" stop-color="#8cf050"/><stop offset="0.316" stop-color="#c4ec40"/><stop offset="0.428" stop-color="#ecd838"/><stop offset="0.532" stop-color="#f8b028"/><stop offset="0.576" stop-color="#f49a24"/><stop offset="0.639" stop-color="#f08420"/><stop offset="0.725" stop-color="#e06018"/><stop offset="0.840" stop-color="#c83810"/><stop offset="0.996" stop-color="#a82008"/></linearGradient>
<linearGradient id="g986" gradientUnits="userSpaceOnUse" x1="0" y1="483.1" x2="0" y2="756.3"><stop offset="0.004" stop-color="#518ce4"/><stop offset="0.013" stop-color="#48a0e8"/><stop offset="0.081" stop-color="#3cd0d0"/><stop offset="0.187" stop-color="#8cf050"/><stop offset="0.311" stop-color="#c4ec40"/><stop offset="0.421" stop-color="#ecd838"/><stop offset="0.523" stop-color="#f8b028"/><stop offset="0.568" stop-color="#f49a24"/><stop offset="0.628" stop-color="#f08420"/><stop offset="0.717" stop-color="#e06018"/><stop offset="0.861" stop-color="#c83810"/><stop offset="0.996" stop-color="#a82008"/></linearGradient>
<linearGradient id="g994" gradientUnits="userSpaceOnUse" x1="0" y1="483.4" x2="0" y2="762.2"><stop offset="0.004" stop-color="#518ce4"/><stop offset="0.012" stop-color="#48a0e8"/><stop offset="0.078" stop-color="#3cd0d0"/><stop offset="0.183" stop-color="#8cf050"/><stop offset="0.306" stop-color="#c4ec40"/><stop offset="0.414" stop-color="#ecd838"/><stop offset="0.514" stop-color="#f8b028"/><stop offset="0.561" stop-color="#f49a24"/><stop offset="0.618" stop-color="#f08420"/><stop offset="0.709" stop-color="#e06018"/><stop offset="0.881" stop-color="#c83810"/><stop offset="0.996" stop-color="#a82008"/></linearGradient>
<linearGradient id="g1002" gradientUnits="userSpaceOnUse" x1="0" y1="483.8" x2="0" y2="768.1"><stop offset="0.004" stop-color="#518ce4"/><stop offset="0.011" stop-color="#48a0e8"/><stop offset="0.075" stop-color="#3cd0d0"/><stop offset="0.179" stop-color="#8cf050"/><stop offset="0.302" stop-color="#c4ec40"/><stop offset="0.407" stop-color="#ecd838"/><stop offset="0.506" stop-color="#f8b028"/><stop offset="0.554" stop-color="#f49a24"/><stop offset="0.608" stop-color="#f08420"/><stop offset="0.701" stop-color="#e06018"/><stop offset="0.900" stop-color="#c83810"/><stop offset="0.996" stop-color="#a82008"/></linearGradient>
<linearGradient id="g1010" gradientUnits="userSpaceOnUse" x1="0" y1="484.2" x2="0" y2="771.9"><stop offset="0.003" stop-color="#518ce4"/><stop offset="0.011" stop-color="#48a0e8"/><stop offset="0.074" stop-color="#3cd0d0"/><stop offset="0.178" stop-color="#8cf050"/><stop offset="0.300" stop-color="#c4ec40"/><stop offset="0.404" stop-color="#ecd838"/><stop offset="0.501" stop-color="#f8b028"/><stop offset="0.550" stop-color="#f49a24"/><stop offset="0.603" stop-color="#f08420"/><stop offset="0.698" stop-color="#e06018"/><stop offset="0.909" stop-color="#c83810"/><stop offset="0.997" stop-color="#a82008"/></linearGradient>
<linearGradient id="g1018" gradientUnits="userSpaceOnUse" x1="0" y1="484.6" x2="0" y2="773.6"><stop offset="0.003" stop-color="#518ce4"/><stop offset="0.013" stop-color="#48a0e8"/><stop offset="0.076" stop-color="#3cd0d0"/><stop offset="0.180" stop-color="#8cf050"/><stop offset="0.300" stop-color="#c4ec40"/><stop offset="0.402" stop-color="#ecd838"/><stop offset="0.499" stop-color="#f8b028"/><stop offset="0.548" stop-color="#f49a24"/><stop offset="0.603" stop-color="#f08420"/><stop offset="0.701" stop-color="#e06018"/><stop offset="0.909" stop-color="#c83810"/><stop offset="0.997" stop-color="#a82008"/></linearGradient>
<linearGradient id="g1026" gradientUnits="userSpaceOnUse" x1="0" y1="485" x2="0" y2="775.3"><stop offset="0.003" stop-color="#518ce4"/><stop offset="0.014" stop-color="#48a0e8"/><stop offset="0.078" stop-color="#3cd0d0"/><stop offset="0.181" stop-color="#8cf050"/><stop offset="0.300" stop-color="#c4ec40"/><stop offset="0.401" stop-color="#ecd838"/><stop offset="0.497" stop-color="#f8b028"/><stop offset="0.547" stop-color="#f49a24"/><stop offset="0.604" stop-color="#f08420"/><stop offset="0.703" stop-color="#e06018"/><stop offset="0.910" stop-color="#c83810"/><stop offset="0.997" stop-color="#a82008"/></linearGradient>
<linearGradient id="g1034" gradientUnits="userSpaceOnUse" x1="0" y1="485.6" x2="0" y2="777"><stop offset="0.003" stop-color="#518ce4"/><stop offset="0.015" stop-color="#48a0e8"/><stop offset="0.079" stop-color="#3cd0d0"/><stop offset="0.182" stop-color="#8cf050"/><stop offset="0.300" stop-color="#c4ec40"/><stop offset="0.400" stop-color="#ecd838"/><stop offset="0.494" stop-color="#f8b028"/><stop offset="0.545" stop-color="#f49a24"/><stop offset="0.604" stop-color="#f08420"/><stop offset="0.705" stop-color="#e06018"/><stop offset="0.910" stop-color="#c83810"/><stop offset="0.997" stop-color="#a82008"/></linearGradient>
<linearGradient id="g1042" gradientUnits="userSpaceOnUse" x1="0" y1="486.2" x2="0" y2="778.7"><stop offset="0.003" stop-color="#518ce4"/><stop offset="0.016" stop-color="#48a0e8"/><stop offset="0.081" stop-color="#3cd0d0"/><stop offset="0.182" stop-color="#8cf050"/><stop offset="0.300" stop-color="#c4ec40"/><stop offset="0.398" stop-color="#ecd838"/><stop offset="0.492" stop-color="#f8b028"/><stop offset="0.544" stop-color="#f49a24"/><stop offset="0.604" stop-color="#f08420"/><stop offset="0.708" stop-color="#e06018"/><stop offset="0.910" stop-color="#c83810"/><stop offset="0.997" stop-color="#a82008"/></linearGradient>
<linearGradient id="g1050" gradientUnits="userSpaceOnUse" x1="0" y1="486.9" x2="0" y2="780.4"><stop offset="0.003" stop-color="#518ce4"/><stop offset="0.016" stop-color="#48a0e8"/><stop offset="0.082" stop-color="#3cd0d0"/><stop offset="0.183" stop-color="#8cf050"/><stop offset="0.300" stop-color="#c4ec40"/><stop offset="0.397" stop-color="#ecd838"/><stop offset="0.490" stop-color="#f8b028"/><stop offset="0.542" stop-color="#f49a24"/><stop offset="0.604" stop-color="#f08420"/><stop offset="0.710" stop-color="#e06018"/><stop offset="0.909" stop-color="#c83810"/><stop offset="0.997" stop-color="#a82008"/></linearGradient>
<linearGradient id="g1058" gradientUnits="userSpaceOnUse" x1="0" y1="487.5" x2="0" y2="782.1"><stop offset="0.003" stop-color="#518ce4"/><stop offset="0.017" stop-color="#48a0e8"/><stop offset="0.083" stop-color="#3cd0d0"/><stop offset="0.183" stop-color="#8cf050"/><stop offset="0.300" stop-color="#c4ec40"/><stop offset="0.395" stop-color="#ecd838"/><stop offset="0.488" stop-color="#f8b028"/><stop offset="0.540" stop-color="#f49a24"/><stop offset="0.605" stop-color="#f08420"/><stop offset="0.712" stop-color="#e06018"/><stop offset="0.909" stop-color="#c83810"/><stop offset="0.997" stop-color="#a82008"/></linearGradient>
<linearGradient id="g1066" gradientUnits="userSpaceOnUse" x1="0" y1="488.1" x2="0" y2="783.8"><stop offset="0.003" stop-color="#518ce4"/><stop offset="0.018" stop-color="#48a0e8"/><stop offset="0.085" stop-color="#3cd0d0"/><stop offset="0.184" stop-color="#8cf050"/><stop offset="0.299" stop-color="#c4ec40"/><stop offset="0.394" stop-color="#ecd838"/><stop offset="0.485" stop-color="#f8b028"/><stop offset="0.539" stop-color="#f49a24"/><stop offset="0.605" stop-color="#f08420"/><stop offset="0.714" stop-color="#e06018"/><stop offset="0.909" stop-color="#c83810"/><stop offset="0.997" stop-color="#a82008"/></linearGradient>
<linearGradient id="g1074" gradientUnits="userSpaceOnUse" x1="0" y1="488.7" x2="0" y2="785.5"><stop offset="0.003" stop-color="#518ce4"/><stop offset="0.018" stop-color="#48a0e8"/><stop offset="0.086" stop-color="#3cd0d0"/><stop offset="0.185" stop-color="#8cf050"/><stop offset="0.299" stop-color="#c4ec40"/><stop offset="0.392" stop-color="#ecd838"/><stop offset="0.483" stop-color="#f8b028"/><stop offset="0.537" stop-color="#f49a24"/><stop offset="0.605" stop-color="#f08420"/><stop offset="0.716" stop-color="#e06018"/><stop offset="0.909" stop-color="#c83810"/><stop offset="0.997" stop-color="#a82008"/></linearGradient>
<linearGradient id="g1082" gradientUnits="userSpaceOnUse" x1="0" y1="489.4" x2="0" y2="787.2"><stop offset="0.003" stop-color="#518ce4"/><stop offset="0.019" stop-color="#48a0e8"/><stop offset="0.087" stop-color="#3cd0d0"/><stop offset="0.185" stop-color="#8cf050"/><stop offset="0.299" stop-color="#c4ec40"/><stop offset="0.391" stop-color="#ecd838"/><stop offset="0.481" stop-color="#f8b028"/><stop offset="0.536" stop-color="#f49a24"/><stop offset="0.605" stop-color="#f08420"/><stop offset="0.719" stop-color="#e06018"/><stop offset="0.909" stop-color="#c83810"/><stop offset="0.997" stop-color="#a82008"/></linearGradient>
<linearGradient id="g1090" gradientUnits="userSpaceOnUse" x1="0" y1="490" x2="0" y2="788.9"><stop offset="0.003" stop-color="#518ce4"/><stop offset="0.020" stop-color="#48a0e8"/><stop offset="0.088" stop-color="#3cd0d0"/><stop offset="0.186" stop-color="#8cf050"/><stop offset="0.299" stop-color="#c4ec40"/><stop offset="0.389" stop-color="#ecd838"/><stop offset="0.479" stop-color="#f8b028"/><stop offset="0.534" stop-color="#f49a24"/><stop offset="0.605" stop-color="#f08420"/><stop offset="0.721" stop-color="#e06018"/><stop offset="0.909" stop-color="#c83810"/><stop offset="0.997" stop-color="#a82008"/></linearGradient>
<linearGradient id="g1098" gradientUnits="userSpaceOnUse" x1="0" y1="490.6" x2="0" y2="790.6"><stop offset="0.003" stop-color="#518ce4"/><stop offset="0.020" stop-color="#48a0e8"/><stop offset="0.089" stop-color="#3cd0d0"/><stop offset="0.186" stop-color="#8cf050"/><stop offset="0.298" stop-color="#c4ec40"/><stop offset="0.388" stop-color="#ecd838"/><stop offset="0.476" stop-color="#f8b028"/><stop offset="0.532" stop-color="#f49a24"/><stop offset="0.605" stop-color="#f08420"/><stop offset="0.723" stop-color="#e06018"/><stop offset="0.909" stop-color="#c83810"/><stop offset="0.997" stop-color="#a82008"/></linearGradient>
<linearGradient id="g1106" gradientUnits="userSpaceOnUse" x1="0" y1="491.2" x2="0" y2="792.3"><stop offset="0.003" stop-color="#518ce4"/><stop offset="0.021" stop-color="#48a0e8"/><stop offset="0.091" stop-color="#3cd0d0"/><stop offset="0.187" stop-color="#8cf050"/><stop offset="0.298" stop-color="#c4ec40"/><stop offset="0.386" stop-color="#ecd838"/><stop offset="0.474" stop-color="#f8b028"/><stop offset="0.531" stop-color="#f49a24"/><stop offset="0.605" stop-color="#f08420"/><stop offset="0.725" stop-color="#e06018"/><stop offset="0.909" stop-color="#c83810"/><stop offset="0.997" stop-color="#a82008"/></linearGradient>
<linearGradient id="g1114" gradientUnits="userSpaceOnUse" x1="0" y1="491.8" x2="0" y2="794"><stop offset="0.003" stop-color="#518ce4"/><stop offset="0.021" stop-color="#48a0e8"/><stop offset="0.092" stop-color="#3cd0d0"/><stop offset="0.188" stop-color="#8cf050"/><stop offset="0.298" stop-color="#c4ec40"/><stop offset="0.385" stop-color="#ecd838"/><stop offset="0.472" stop-color="#f8b028"/><stop offset="0.529" stop-color="#f49a24"/><stop offset="0.606" stop-color="#f08420"/><stop offset="0.727" stop-color="#e06018"/><stop offset="0.909" stop-color="#c83810"/><stop offset="0.997" stop-color="#a82008"/></linearGradient>
<linearGradient id="g1122" gradientUnits="userSpaceOnUse" x1="0" y1="492.5" x2="0" y2="795.7"><stop offset="0.003" stop-color="#518ce4"/><stop offset="0.022" stop-color="#48a0e8"/><stop offset="0.093" stop-color="#3cd0d0"/><stop offset="0.188" stop-color="#8cf050"/><stop offset="0.298" stop-color="#c4ec40"/><stop offset="0.383" stop-color="#ecd838"/><stop offset="0.470" stop-color="#f8b028"/><stop offset="0.528" stop-color="#f49a24"/><stop offset="0.606" stop-color="#f08420"/><stop offset="0.729" stop-color="#e06018"/><stop offset="0.909" stop-color="#c83810"/><stop offset="0.997" stop-color="#a82008"/></linearGradient>
<linearGradient id="g1130" gradientUnits="userSpaceOnUse" x1="0" y1="493.1" x2="0" y2="797.4"><stop offset="0.003" stop-color="#518ce4"/><stop offset="0.023" stop-color="#48a0e8"/><stop offset="0.094" stop-color="#3cd0d0"/><stop offset="0.189" stop-color="#8cf050"/><stop offset="0.298" stop-color="#c4ec40"/><stop offset="0.382" stop-color="#ecd838"/><stop offset="0.468" stop-color="#f8b028"/><stop offset="0.526" stop-color="#f49a24"/><stop offset="0.606" stop-color="#f08420"/><stop offset="0.731" stop-color="#e06018"/><stop offset="0.909" stop-color="#c83810"/><stop offset="0.997" stop-color="#a82008"/></linearGradient>
<linearGradient id="g1138" gradientUnits="userSpaceOnUse" x1="0" y1="493.7" x2="0" y2="799.1"><stop offset="0.003" stop-color="#518ce4"/><stop offset="0.023" stop-color="#48a0e8"/><stop offset="0.095" stop-color="#3cd0d0"/><stop offset="0.189" stop-color="#8cf050"/><stop offset="0.297" stop-color="#c4ec40"/><stop offset="0.380" stop-color="#ecd838"/><stop offset="0.466" stop-color="#f8b028"/><stop offset="0.525" stop-color="#f49a24"/><stop offset="0.606" stop-color="#f08420"/><stop offset="0.733" stop-color="#e06018"/><stop offset="0.909" stop-color="#c83810"/><stop offset="0.997" stop-color="#a82008"/></linearGradient>
<linearGradient id="g1146" gradientUnits="userSpaceOnUse" x1="0" y1="494.3" x2="0" y2="800.8"><stop offset="0.003" stop-color="#518ce4"/><stop offset="0.024" stop-color="#48a0e8"/><stop offset="0.096" stop-color="#3cd0d0"/><stop offset="0.190" stop-color="#8cf050"/><stop offset="0.297" stop-color="#c4ec40"/><stop offset="0.379" stop-color="#ecd838"/><stop offset="0.464" stop-color="#f8b028"/><stop offset="0.523" stop-color="#f49a24"/><stop offset="0.606" stop-color="#f08420"/><stop offset="0.735" stop-color="#e06018"/><stop offset="0.909" stop-color="#c83810"/><stop offset="0.997" stop-color="#a82008"/></linearGradient>
<linearGradient id="g1154" gradientUnits="userSpaceOnUse" x1="0" y1="495" x2="0" y2="802.5"><stop offset="0.003" stop-color="#518ce4"/><stop offset="0.025" stop-color="#48a0e8"/><stop offset="0.098" stop-color="#3cd0d0"/><stop offset="0.190" stop-color="#8cf050"/><stop offset="0.297" stop-color="#c4ec40"/><stop offset="0.378" stop-color="#ecd838"/><stop offset="0.461" stop-color="#f8b028"/><stop offset="0.521" stop-color="#f49a24"/><stop offset="0.606" stop-color="#f08420"/><stop offset="0.737" stop-color="#e06018"/><stop offset="0.909" stop-color="#c83810"/><stop offset="0.997" stop-color="#a82008"/></linearGradient>
<linearGradient id="g1162" gradientUnits="userSpaceOnUse" x1="0" y1="495.6" x2="0" y2="804.2"><stop offset="0.003" stop-color="#518ce4"/><stop offset="0.025" stop-color="#48a0e8"/><stop offset="0.099" stop-color="#3cd0d0"/><stop offset="0.191" stop-color="#8cf050"/><stop offset="0.297" stop-color="#c4ec40"/><stop offset="0.376" stop-color="#ecd838"/><stop offset="0.459" stop-color="#f8b028"/><stop offset="0.520" stop-color="#f49a24"/><stop offset="0.606" stop-color="#f08420"/><stop offset="0.739" stop-color="#e06018"/><stop offset="0.909" stop-color="#c83810"/><stop offset="0.997" stop-color="#a82008"/></linearGradient>
<linearGradient id="g1170" gradientUnits="userSpaceOnUse" x1="0" y1="496.2" x2="0" y2="805.9"><stop offset="0.003" stop-color="#518ce4"/><stop offset="0.026" stop-color="#48a0e8"/><stop offset="0.100" stop-color="#3cd0d0"/><stop offset="0.191" stop-color="#8cf050"/><stop offset="0.297" stop-color="#c4ec40"/><stop offset="0.375" stop-color="#ecd838"/><stop offset="0.457" stop-color="#f8b028"/><stop offset="0.518" stop-color="#f49a24"/><stop offset="0.607" stop-color="#f08420"/><stop offset="0.741" stop-color="#e06018"/><stop offset="0.909" stop-color="#c83810"/><stop offset="0.997" stop-color="#a82008"/></linearGradient>
<linearGradient id="g1178" gradientUnits="userSpaceOnUse" x1="0" y1="496.8" x2="0" y2="807.6"><stop offset="0.003" stop-color="#518ce4"/><stop offset="0.027" stop-color="#48a0e8"/><stop offset="0.101" stop-color="#3cd0d0"/><stop offset="0.192" stop-color="#8cf050"/><stop offset="0.296" stop-color="#c4ec40"/><stop offset="0.374" stop-color="#ecd838"/><stop offset="0.455" stop-color="#f8b028"/><stop offset="0.517" stop-color="#f49a24"/><stop offset="0.607" stop-color="#f08420"/><stop offset="0.743" stop-color="#e06018"/><stop offset="0.909" stop-color="#c83810"/><stop offset="0.997" stop-color="#a82008"/></linearGradient>
<linearGradient id="g1186" gradientUnits="userSpaceOnUse" x1="0" y1="497.4" x2="0" y2="809.3"><stop offset="0.003" stop-color="#518ce4"/><stop offset="0.027" stop-color="#48a0e8"/><stop offset="0.102" stop-color="#3cd0d0"/><stop offset="0.193" stop-color="#8cf050"/><stop offset="0.296" stop-color="#c4ec40"/><stop offset="0.372" stop-color="#ecd838"/><stop offset="0.453" stop-color="#f8b028"/><stop offset="0.515" stop-color="#f49a24"/><stop offset="0.607" stop-color="#f08420"/><stop offset="0.745" stop-color="#e06018"/><stop offset="0.909" stop-color="#c83810"/><stop offset="0.997" stop-color="#a82008"/></linearGradient>
<linearGradient id="g1194" gradientUnits="userSpaceOnUse" x1="0" y1="498.1" x2="0" y2="811"><stop offset="0.003" stop-color="#518ce4"/><stop offset="0.028" stop-color="#48a0e8"/><stop offset="0.103" stop-color="#3cd0d0"/><stop offset="0.193" stop-color="#8cf050"/><stop offset="0.296" stop-color="#c4ec40"/><stop offset="0.371" stop-color="#ecd838"/><stop offset="0.451" stop-color="#f8b028"/><stop offset="0.514" stop-color="#f49a24"/><stop offset="0.607" stop-color="#f08420"/><stop offset="0.747" stop-color="#e06018"/><stop offset="0.909" stop-color="#c83810"/><stop offset="0.997" stop-color="#a82008"/></linearGradient>
<linearGradient id="g1202" gradientUnits="userSpaceOnUse" x1="0" y1="498.7" x2="0" y2="812.7"><stop offset="0.003" stop-color="#518ce4"/><stop offset="0.028" stop-color="#48a0e8"/><stop offset="0.104" stop-color="#3cd0d0"/><stop offset="0.194" stop-color="#8cf050"/><stop offset="0.296" stop-color="#c4ec40"/><stop offset="0.369" stop-color="#ecd838"/><stop offset="0.449" stop-color="#f8b028"/><stop offset="0.513" stop-color="#f49a24"/><stop offset="0.607" stop-color="#f08420"/><stop offset="0.749" stop-color="#e06018"/><stop offset="0.909" stop-color="#c83810"/><stop offset="0.997" stop-color="#a82008"/></linearGradient>
<linearGradient id="g1210" gradientUnits="userSpaceOnUse" x1="0" y1="499.4" x2="0" y2="814.4"><stop offset="0.003" stop-color="#518ce4"/><stop offset="0.029" stop-color="#48a0e8"/><stop offset="0.105" stop-color="#3cd0d0"/><stop offset="0.194" stop-color="#8cf050"/><stop offset="0.295" stop-color="#c4ec40"/><stop offset="0.368" stop-color="#ecd838"/><stop offset="0.448" stop-color="#f8b028"/><stop offset="0.511" stop-color="#f49a24"/><stop offset="0.606" stop-color="#f08420"/><stop offset="0.749" stop-color="#e06018"/><stop offset="0.908" stop-color="#c83810"/><stop offset="0.997" stop-color="#a82008"/></linearGradient>
<linearGradient id="g1218" gradientUnits="userSpaceOnUse" x1="0" y1="500.1" x2="0" y2="816.1"><stop offset="0.003" stop-color="#518ce4"/><stop offset="0.029" stop-color="#48a0e8"/><stop offset="0.104" stop-color="#3cd0d0"/><stop offset="0.193" stop-color="#8cf050"/><stop offset="0.294" stop-color="#c4ec40"/><stop offset="0.367" stop-color="#ecd838"/><stop offset="0.447" stop-color="#f8b028"/><stop offset="0.510" stop-color="#f49a24"/><stop offset="0.604" stop-color="#f08420"/><stop offset="0.746" stop-color="#e06018"/><stop offset="0.906" stop-color="#c83810"/><stop offset="0.997" stop-color="#a82008"/></linearGradient>
<linearGradient id="g1226" gradientUnits="userSpaceOnUse" x1="0" y1="500.8" x2="0" y2="817.8"><stop offset="0.003" stop-color="#518ce4"/><stop offset="0.029" stop-color="#48a0e8"/><stop offset="0.104" stop-color="#3cd0d0"/><stop offset="0.192" stop-color="#8cf050"/><stop offset="0.292" stop-color="#c4ec40"/><stop offset="0.366" stop-color="#ecd838"/><stop offset="0.445" stop-color="#f8b028"/><stop offset="0.509" stop-color="#f49a24"/><stop offset="0.602" stop-color="#f08420"/><stop offset="0.744" stop-color="#e06018"/><stop offset="0.904" stop-color="#c83810"/><stop offset="0.997" stop-color="#a82008"/></linearGradient>
<linearGradient id="g1234" gradientUnits="userSpaceOnUse" x1="0" y1="501.5" x2="0" y2="819.5"><stop offset="0.003" stop-color="#518ce4"/><stop offset="0.029" stop-color="#48a0e8"/><stop offset="0.104" stop-color="#3cd0d0"/><stop offset="0.191" stop-color="#8cf050"/><stop offset="0.291" stop-color="#c4ec40"/><stop offset="0.364" stop-color="#ecd838"/><stop offset="0.444" stop-color="#f8b028"/><stop offset="0.509" stop-color="#f49a24"/><stop offset="0.599" stop-color="#f08420"/><stop offset="0.741" stop-color="#e06018"/><stop offset="0.902" stop-color="#c83810"/><stop offset="0.997" stop-color="#a82008"/></linearGradient>
<linearGradient id="g1242" gradientUnits="userSpaceOnUse" x1="0" y1="502.2" x2="0" y2="821.2"><stop offset="0.003" stop-color="#518ce4"/><stop offset="0.029" stop-color="#48a0e8"/><stop offset="0.103" stop-color="#3cd0d0"/><stop offset="0.191" stop-color="#8cf050"/><stop offset="0.290" stop-color="#c4ec40"/><stop offset="0.363" stop-color="#ecd838"/><stop offset="0.443" stop-color="#f8b028"/><stop offset="0.508" stop-color="#f49a24"/><stop offset="0.597" stop-color="#f08420"/><stop offset="0.738" stop-color="#e06018"/><stop offset="0.901" stop-color="#c83810"/><stop offset="0.997" stop-color="#a82008"/></linearGradient>
<linearGradient id="g1250" gradientUnits="userSpaceOnUse" x1="0" y1="503" x2="0" y2="822.9"><stop offset="0.003" stop-color="#518ce4"/><stop offset="0.030" stop-color="#48a0e8"/><stop offset="0.103" stop-color="#3cd0d0"/><stop offset="0.190" stop-color="#8cf050"/><stop offset="0.289" stop-color="#c4ec40"/><stop offset="0.362" stop-color="#ecd838"/><stop offset="0.442" stop-color="#f8b028"/><stop offset="0.507" stop-color="#f49a24"/><stop offset="0.595" stop-color="#f08420"/><stop offset="0.736" stop-color="#e06018"/><stop offset="0.899" stop-color="#c83810"/><stop offset="0.997" stop-color="#a82008"/></linearGradient>
<linearGradient id="g1258" gradientUnits="userSpaceOnUse" x1="0" y1="503.7" x2="0" y2="824.6"><stop offset="0.003" stop-color="#518ce4"/><stop offset="0.030" stop-color="#48a0e8"/><stop offset="0.103" stop-color="#3cd0d0"/><stop offset="0.189" stop-color="#8cf050"/><stop offset="0.287" stop-color="#c4ec40"/><stop offset="0.361" stop-color="#ecd838"/><stop offset="0.441" stop-color="#f8b028"/><stop offset="0.506" stop-color="#f49a24"/><stop offset="0.593" stop-color="#f08420"/><stop offset="0.733" stop-color="#e06018"/><stop offset="0.897" stop-color="#c83810"/><stop offset="0.997" stop-color="#a82008"/></linearGradient>
<linearGradient id="g1266" gradientUnits="userSpaceOnUse" x1="0" y1="504.4" x2="0" y2="826.3"><stop offset="0.003" stop-color="#518ce4"/><stop offset="0.030" stop-color="#48a0e8"/><stop offset="0.103" stop-color="#3cd0d0"/><stop offset="0.189" stop-color="#8cf050"/><stop offset="0.286" stop-color="#c4ec40"/><stop offset="0.359" stop-color="#ecd838"/><stop offset="0.440" stop-color="#f8b028"/><stop offset="0.505" stop-color="#f49a24"/><stop offset="0.591" stop-color="#f08420"/><stop offset="0.730" stop-color="#e06018"/><stop offset="0.895" stop-color="#c83810"/><stop offset="0.997" stop-color="#a82008"/></linearGradient>
<linearGradient id="g1274" gradientUnits="userSpaceOnUse" x1="0" y1="505.1" x2="0" y2="828"><stop offset="0.003" stop-color="#518ce4"/><stop offset="0.030" stop-color="#48a0e8"/><stop offset="0.102" stop-color="#3cd0d0"/><stop offset="0.188" stop-color="#8cf050"/><stop offset="0.285" stop-color="#c4ec40"/><stop offset="0.358" stop-color="#ecd838"/><stop offset="0.439" stop-color="#f8b028"/><stop offset="0.504" stop-color="#f49a24"/><stop offset="0.588" stop-color="#f08420"/><stop offset="0.728" stop-color="#e06018"/><stop offset="0.893" stop-color="#c83810"/><stop offset="0.997" stop-color="#a82008"/></linearGradient>
<linearGradient id="g1282" gradientUnits="userSpaceOnUse" x1="0" y1="505.8" x2="0" y2="829.7"><stop offset="0.003" stop-color="#518ce4"/><stop offset="0.030" stop-color="#48a0e8"/><stop offset="0.102" stop-color="#3cd0d0"/><stop offset="0.187" stop-color="#8cf050"/><stop offset="0.284" stop-color="#c4ec40"/><stop offset="0.357" stop-color="#ecd838"/><stop offset="0.438" stop-color="#f8b028"/><stop offset="0.503" stop-color="#f49a24"/><stop offset="0.586" stop-color="#f08420"/><stop offset="0.725" stop-color="#e06018"/><stop offset="0.891" stop-color="#c83810"/><stop offset="0.997" stop-color="#a82008"/></linearGradient>
<linearGradient id="g1290" gradientUnits="userSpaceOnUse" x1="0" y1="506.6" x2="0" y2="831.4"><stop offset="0.003" stop-color="#518ce4"/><stop offset="0.030" stop-color="#48a0e8"/><stop offset="0.102" stop-color="#3cd0d0"/><stop offset="0.186" stop-color="#8cf050"/><stop offset="0.282" stop-color="#c4ec40"/><stop offset="0.356" stop-color="#ecd838"/><stop offset="0.437" stop-color="#f8b028"/><stop offset="0.502" stop-color="#f49a24"/><stop offset="0.584" stop-color="#f08420"/><stop offset="0.723" stop-color="#e06018"/><stop offset="0.889" stop-color="#c83810"/><stop offset="0.997" stop-color="#a82008"/></linearGradient>
<linearGradient id="g1298" gradientUnits="userSpaceOnUse" x1="0" y1="507.3" x2="0" y2="833.1"><stop offset="0.003" stop-color="#518ce4"/><stop offset="0.030" stop-color="#48a0e8"/><stop offset="0.101" stop-color="#3cd0d0"/><stop offset="0.186" stop-color="#8cf050"/><stop offset="0.281" stop-color="#c4ec40"/><stop offset="0.355" stop-color="#ecd838"/><stop offset="0.436" stop-color="#f8b028"/><stop offset="0.501" stop-color="#f49a24"/><stop offset="0.582" stop-color="#f08420"/><stop offset="0.720" stop-color="#e06018"/><stop offset="0.888" stop-color="#c83810"/><stop offset="0.997" stop-color="#a82008"/></linearGradient>
<linearGradient id="g1306" gradientUnits="userSpaceOnUse" x1="0" y1="508" x2="0" y2="834.8"><stop offset="0.003" stop-color="#518ce4"/><stop offset="0.031" stop-color="#48a0e8"/><stop offset="0.101" stop-color="#3cd0d0"/><stop offset="0.185" stop-color="#8cf050"/><stop offset="0.280" stop-color="#c4ec40"/><stop offset="0.353" stop-color="#ecd838"/><stop offset="0.434" stop-color="#f8b028"/><stop offset="0.500" stop-color="#f49a24"/><stop offset="0.580" stop-color="#f08420"/><stop offset="0.717" stop-color="#e06018"/><stop offset="0.886" stop-color="#c83810"/><stop offset="0.997" stop-color="#a82008"/></linearGradient>
<linearGradient id="g1314" gradientUnits="userSpaceOnUse" x1="0" y1="508.7" x2="0" y2="836.5"><stop offset="0.003" stop-color="#518ce4"/><stop offset="0.031" stop-color="#48a0e8"/><stop offset="0.101" stop-color="#3cd0d0"/><stop offset="0.184" stop-color="#8cf050"/><stop offset="0.279" stop-color="#c4ec40"/><stop offset="0.352" stop-color="#ecd838"/><stop offset="0.433" stop-color="#f8b028"/><stop offset="0.499" stop-color="#f49a24"/><stop offset="0.578" stop-color="#f08420"/><stop offset="0.715" stop-color="#e06018"/><stop offset="0.884" stop-color="#c83810"/><stop offset="0.997" stop-color="#a82008"/></linearGradient>
<linearGradient id="g1322" gradientUnits="userSpaceOnUse" x1="0" y1="509.4" x2="0" y2="838.2"><stop offset="0.003" stop-color="#518ce4"/><stop offset="0.031" stop-color="#48a0e8"/><stop offset="0.100" stop-color="#3cd0d0"/><stop offset="0.184" stop-color="#8cf050"/><stop offset="0.278" stop-color="#c4ec40"/><stop offset="0.351" stop-color="#ecd838"/><stop offset="0.432" stop-color="#f8b028"/><stop offset="0.498" stop-color="#f49a24"/><stop offset="0.576" stop-color="#f08420"/><stop offset="0.712" stop-color="#e06018"/><stop offset="0.882" stop-color="#c83810"/><stop offset="0.997" stop-color="#a82008"/></linearGradient>
<linearGradient id="g1330" gradientUnits="userSpaceOnUse" x1="0" y1="510.2" x2="0" y2="839.9"><stop offset="0.003" stop-color="#518ce4"/><stop offset="0.031" stop-color="#48a0e8"/><stop offset="0.100" stop-color="#3cd0d0"/><stop offset="0.183" stop-color="#8cf050"/><stop offset="0.276" stop-color="#c4ec40"/><stop offset="0.350" stop-color="#ecd838"/><stop offset="0.431" stop-color="#f8b028"/><stop offset="0.498" stop-color="#f49a24"/><stop offset="0.574" stop-color="#f08420"/><stop offset="0.710" stop-color="#e06018"/><stop offset="0.880" stop-color="#c83810"/><stop offset="0.997" stop-color="#a82008"/></linearGradient>
<linearGradient id="g1338" gradientUnits="userSpaceOnUse" x1="0" y1="510.9" x2="0" y2="841.6"><stop offset="0.003" stop-color="#518ce4"/><stop offset="0.031" stop-color="#48a0e8"/><stop offset="0.100" stop-color="#3cd0d0"/><stop offset="0.182" stop-color="#8cf050"/><stop offset="0.275" stop-color="#c4ec40"/><stop offset="0.349" stop-color="#ecd838"/><stop offset="0.430" stop-color="#f8b028"/><stop offset="0.497" stop-color="#f49a24"/><stop offset="0.571" stop-color="#f08420"/><stop offset="0.708" stop-color="#e06018"/><stop offset="0.879" stop-color="#c83810"/><stop offset="0.997" stop-color="#a82008"/></linearGradient>
<linearGradient id="g1346" gradientUnits="userSpaceOnUse" x1="0" y1="511.6" x2="0" y2="843.3"><stop offset="0.003" stop-color="#518ce4"/><stop offset="0.031" stop-color="#48a0e8"/><stop offset="0.099" stop-color="#3cd0d0"/><stop offset="0.182" stop-color="#8cf050"/><stop offset="0.274" stop-color="#c4ec40"/><stop offset="0.348" stop-color="#ecd838"/><stop offset="0.429" stop-color="#f8b028"/><stop offset="0.496" stop-color="#f49a24"/><stop offset="0.569" stop-color="#f08420"/><stop offset="0.705" stop-color="#e06018"/><stop offset="0.877" stop-color="#c83810"/><stop offset="0.997" stop-color="#a82008"/></linearGradient>
<linearGradient id="g1354" gradientUnits="userSpaceOnUse" x1="0" y1="512.3" x2="0" y2="845"><stop offset="0.003" stop-color="#518ce4"/><stop offset="0.031" stop-color="#48a0e8"/><stop offset="0.099" stop-color="#3cd0d0"/><stop offset="0.181" stop-color="#8cf050"/><stop offset="0.273" stop-color="#c4ec40"/><stop offset="0.346" stop-color="#ecd838"/><stop offset="0.428" stop-color="#f8b028"/><stop offset="0.495" stop-color="#f49a24"/><stop offset="0.567" stop-color="#f08420"/><stop offset="0.703" stop-color="#e06018"/><stop offset="0.875" stop-color="#c83810"/><stop offset="0.997" stop-color="#a82008"/></linearGradient>
<linearGradient id="g1362" gradientUnits="userSpaceOnUse" x1="0" y1="513" x2="0" y2="846.7"><stop offset="0.003" stop-color="#518ce4"/><stop offset="0.032" stop-color="#48a0e8"/><stop offset="0.099" stop-color="#3cd0d0"/><stop offset="0.180" stop-color="#8cf050"/><stop offset="0.272" stop-color="#c4ec40"/><stop offset="0.345" stop-color="#ecd838"/><stop offset="0.427" stop-color="#f8b028"/><stop offset="0.494" stop-color="#f49a24"/><stop offset="0.565" stop-color="#f08420"/><stop offset="0.700" stop-color="#e06018"/><stop offset="0.873" stop-color="#c83810"/><stop offset="0.997" stop-color="#a82008"/></linearGradient>
<linearGradient id="g1370" gradientUnits="userSpaceOnUse" x1="0" y1="513.8" x2="0" y2="848.4"><stop offset="0.003" stop-color="#518ce4"/><stop offset="0.032" stop-color="#48a0e8"/><stop offset="0.099" stop-color="#3cd0d0"/><stop offset="0.180" stop-color="#8cf050"/><stop offset="0.271" stop-color="#c4ec40"/><stop offset="0.344" stop-color="#ecd838"/><stop offset="0.426" stop-color="#f8b028"/><stop offset="0.493" stop-color="#f49a24"/><stop offset="0.563" stop-color="#f08420"/><stop offset="0.698" stop-color="#e06018"/><stop offset="0.872" stop-color="#c83810"/><stop offset="0.997" stop-color="#a82008"/></linearGradient>
<linearGradient id="g1378" gradientUnits="userSpaceOnUse" x1="0" y1="514.5" x2="0" y2="850.1"><stop offset="0.003" stop-color="#518ce4"/><stop offset="0.032" stop-color="#48a0e8"/><stop offset="0.098" stop-color="#3cd0d0"/><stop offset="0.179" stop-color="#8cf050"/><stop offset="0.269" stop-color="#c4ec40"/><stop offset="0.343" stop-color="#ecd838"/><stop offset="0.425" stop-color="#f8b028"/><stop offset="0.492" stop-color="#f49a24"/><stop offset="0.561" stop-color="#f08420"/><stop offset="0.695" stop-color="#e06018"/><stop offset="0.870" stop-color="#c83810"/><stop offset="0.997" stop-color="#a82008"/></linearGradient>
<linearGradient id="g1386" gradientUnits="userSpaceOnUse" x1="0" y1="515.2" x2="0" y2="851.9"><stop offset="0.003" stop-color="#518ce4"/><stop offset="0.032" stop-color="#48a0e8"/><stop offset="0.098" stop-color="#3cd0d0"/><stop offset="0.179" stop-color="#8cf050"/><stop offset="0.268" stop-color="#c4ec40"/><stop offset="0.342" stop-color="#ecd838"/><stop offset="0.424" stop-color="#f8b028"/><stop offset="0.492" stop-color="#f49a24"/><stop offset="0.559" stop-color="#f08420"/><stop offset="0.693" stop-color="#e06018"/><stop offset="0.868" stop-color="#c83810"/><stop offset="0.997" stop-color="#a82008"/></linearGradient>
<linearGradient id="g1394" gradientUnits="userSpaceOnUse" x1="0" y1="515.9" x2="0" y2="853.6"><stop offset="0.003" stop-color="#518ce4"/><stop offset="0.032" stop-color="#48a0e8"/><stop offset="0.098" stop-color="#3cd0d0"/><stop offset="0.178" stop-color="#8cf050"/><stop offset="0.267" stop-color="#c4ec40"/><stop offset="0.341" stop-color="#ecd838"/><stop offset="0.423" stop-color="#f8b028"/><stop offset="0.491" stop-color="#f49a24"/><stop offset="0.557" stop-color="#f08420"/><stop offset="0.691" stop-color="#e06018"/><stop offset="0.867" stop-color="#c83810"/><stop offset="0.997" stop-color="#a82008"/></linearGradient>
<linearGradient id="g1402" gradientUnits="userSpaceOnUse" x1="0" y1="516.6" x2="0" y2="855.3"><stop offset="0.003" stop-color="#518ce4"/><stop offset="0.032" stop-color="#48a0e8"/><stop offset="0.097" stop-color="#3cd0d0"/><stop offset="0.177" stop-color="#8cf050"/><stop offset="0.266" stop-color="#c4ec40"/><stop offset="0.340" stop-color="#ecd838"/><stop offset="0.422" stop-color="#f8b028"/><stop offset="0.490" stop-color="#f49a24"/><stop offset="0.555" stop-color="#f08420"/><stop offset="0.688" stop-color="#e06018"/><stop offset="0.865" stop-color="#c83810"/><stop offset="0.997" stop-color="#a82008"/></linearGradient>
<linearGradient id="g1410" gradientUnits="userSpaceOnUse" x1="0" y1="517.2" x2="0" y2="857"><stop offset="0.003" stop-color="#518ce4"/><stop offset="0.032" stop-color="#48a0e8"/><stop offset="0.098" stop-color="#3cd0d0"/><stop offset="0.178" stop-color="#8cf050"/><stop offset="0.266" stop-color="#c4ec40"/><stop offset="0.339" stop-color="#ecd838"/><stop offset="0.421" stop-color="#f8b028"/><stop offset="0.490" stop-color="#f49a24"/><stop offset="0.555" stop-color="#f08420"/><stop offset="0.687" stop-color="#e06018"/><stop offset="0.864" stop-color="#c83810"/><stop offset="0.997" stop-color="#a82008"/></linearGradient>
<linearGradient id="g1418" gradientUnits="userSpaceOnUse" x1="0" y1="517.7" x2="0" y2="858.7"><stop offset="0.003" stop-color="#518ce4"/><stop offset="0.033" stop-color="#48a0e8"/><stop offset="0.100" stop-color="#3cd0d0"/><stop offset="0.180" stop-color="#8cf050"/><stop offset="0.267" stop-color="#c4ec40"/><stop offset="0.339" stop-color="#ecd838"/><stop offset="0.421" stop-color="#f8b028"/><stop offset="0.490" stop-color="#f49a24"/><stop offset="0.556" stop-color="#f08420"/><stop offset="0.686" stop-color="#e06018"/><stop offset="0.864" stop-color="#c83810"/><stop offset="0.997" stop-color="#a82008"/></linearGradient>
<linearGradient id="g1426" gradientUnits="userSpaceOnUse" x1="0" y1="518.2" x2="0" y2="860.4"><stop offset="0.003" stop-color="#518ce4"/><stop offset="0.033" stop-color="#48a0e8"/><stop offset="0.102" stop-color="#3cd0d0"/><stop offset="0.183" stop-color="#8cf050"/><stop offset="0.268" stop-color="#c4ec40"/><stop offset="0.339" stop-color="#ecd838"/><stop offset="0.420" stop-color="#f8b028"/><stop offset="0.491" stop-color="#f49a24"/><stop offset="0.558" stop-color="#f08420"/><stop offset="0.685" stop-color="#e06018"/><stop offset="0.865" stop-color="#c83810"/><stop offset="0.997" stop-color="#a82008"/></linearGradient>
<linearGradient id="g1434" gradientUnits="userSpaceOnUse" x1="0" y1="518.6" x2="0" y2="862.1"><stop offset="0.003" stop-color="#518ce4"/><stop offset="0.033" stop-color="#48a0e8"/><stop offset="0.103" stop-color="#3cd0d0"/><stop offset="0.185" stop-color="#8cf050"/><stop offset="0.269" stop-color="#c4ec40"/><stop offset="0.339" stop-color="#ecd838"/><stop offset="0.420" stop-color="#f8b028"/><stop offset="0.492" stop-color="#f49a24"/><stop offset="0.559" stop-color="#f08420"/><stop offset="0.684" stop-color="#e06018"/><stop offset="0.865" stop-color="#c83810"/><stop offset="0.997" stop-color="#a82008"/></linearGradient>
<linearGradient id="g1442" gradientUnits="userSpaceOnUse" x1="0" y1="519.1" x2="0" y2="863.8"><stop offset="0.003" stop-color="#518ce4"/><stop offset="0.033" stop-color="#48a0e8"/><stop offset="0.105" stop-color="#3cd0d0"/><stop offset="0.187" stop-color="#8cf050"/><stop offset="0.270" stop-color="#c4ec40"/><stop offset="0.339" stop-color="#ecd838"/><stop offset="0.419" stop-color="#f8b028"/><stop offset="0.492" stop-color="#f49a24"/><stop offset="0.560" stop-color="#f08420"/><stop offset="0.683" stop-color="#e06018"/><stop offset="0.865" stop-color="#c83810"/><stop offset="0.997" stop-color="#a82008"/></linearGradient>
<linearGradient id="g1450" gradientUnits="userSpaceOnUse" x1="0" y1="519.5" x2="0" y2="865.5"><stop offset="0.003" stop-color="#518ce4"/><stop offset="0.033" stop-color="#48a0e8"/><stop offset="0.107" stop-color="#3cd0d0"/><stop offset="0.190" stop-color="#8cf050"/><stop offset="0.271" stop-color="#c4ec40"/><stop offset="0.338" stop-color="#ecd838"/><stop offset="0.418" stop-color="#f8b028"/><stop offset="0.493" stop-color="#f49a24"/><stop offset="0.562" stop-color="#f08420"/><stop offset="0.682" stop-color="#e06018"/><stop offset="0.865" stop-color="#c83810"/><stop offset="0.997" stop-color="#a82008"/></linearGradient>
<linearGradient id="g1458" gradientUnits="userSpaceOnUse" x1="0" y1="520" x2="0" y2="867.2"><stop offset="0.003" stop-color="#518ce4"/><stop offset="0.033" stop-color="#48a0e8"/><stop offset="0.108" stop-color="#3cd0d0"/><stop offset="0.192" stop-color="#8cf050"/><stop offset="0.272" stop-color="#c4ec40"/><stop offset="0.338" stop-color="#ecd838"/><stop offset="0.418" stop-color="#f8b028"/><stop offset="0.493" stop-color="#f49a24"/><stop offset="0.563" stop-color="#f08420"/><stop offset="0.681" stop-color="#e06018"/><stop offset="0.866" stop-color="#c83810"/><stop offset="0.997" stop-color="#a82008"/></linearGradient>
<linearGradient id="g1466" gradientUnits="userSpaceOnUse" x1="0" y1="520.5" x2="0" y2="868.9"><stop offset="0.003" stop-color="#518ce4"/><stop offset="0.033" stop-color="#48a0e8"/><stop offset="0.110" stop-color="#3cd0d0"/><stop offset="0.194" stop-color="#8cf050"/><stop offset="0.273" stop-color="#c4ec40"/><stop offset="0.338" stop-color="#ecd838"/><stop offset="0.417" stop-color="#f8b028"/><stop offset="0.494" stop-color="#f49a24"/><stop offset="0.564" stop-color="#f08420"/><stop offset="0.680" stop-color="#e06018"/><stop offset="0.866" stop-color="#c83810"/><stop offset="0.997" stop-color="#a82008"/></linearGradient>
<linearGradient id="g1474" gradientUnits="userSpaceOnUse" x1="0" y1="520.9" x2="0" y2="870.6"><stop offset="0.003" stop-color="#518ce4"/><stop offset="0.033" stop-color="#48a0e8"/><stop offset="0.111" stop-color="#3cd0d0"/><stop offset="0.196" stop-color="#8cf050"/><stop offset="0.274" stop-color="#c4ec40"/><stop offset="0.338" stop-color="#ecd838"/><stop offset="0.417" stop-color="#f8b028"/><stop offset="0.495" stop-color="#f49a24"/><stop offset="0.565" stop-color="#f08420"/><stop offset="0.679" stop-color="#e06018"/><stop offset="0.866" stop-color="#c83810"/><stop offset="0.997" stop-color="#a82008"/></linearGradient>
<linearGradient id="g1482" gradientUnits="userSpaceOnUse" x1="0" y1="521.4" x2="0" y2="872.3"><stop offset="0.003" stop-color="#518ce4"/><stop offset="0.033" stop-color="#48a0e8"/><stop offset="0.113" stop-color="#3cd0d0"/><stop offset="0.199" stop-color="#8cf050"/><stop offset="0.275" stop-color="#c4ec40"/><stop offset="0.338" stop-color="#ecd838"/><stop offset="0.416" stop-color="#f8b028"/><stop offset="0.495" stop-color="#f49a24"/><stop offset="0.567" stop-color="#f08420"/><stop offset="0.679" stop-color="#e06018"/><stop offset="0.866" stop-color="#c83810"/><stop offset="0.997" stop-color="#a82008"/></linearGradient>
<linearGradient id="g1490" gradientUnits="userSpaceOnUse" x1="0" y1="521.8" x2="0" y2="874"><stop offset="0.003" stop-color="#518ce4"/><stop offset="0.034" stop-color="#48a0e8"/><stop offset="0.115" stop-color="#3cd0d0"/><stop offset="0.201" stop-color="#8cf050"/><stop offset="0.276" stop-color="#c4ec40"/><stop offset="0.338" stop-color="#ecd838"/><stop offset="0.415" stop-color="#f8b028"/><stop offset="0.496" stop-color="#f49a24"/><stop offset="0.568" stop-color="#f08420"/><stop offset="0.678" stop-color="#e06018"/><stop offset="0.866" stop-color="#c83810"/><stop offset="0.997" stop-color="#a82008"/></linearGradient>
<linearGradient id="g1498" gradientUnits="userSpaceOnUse" x1="0" y1="522.3" x2="0" y2="875.7"><stop offset="0.003" stop-color="#518ce4"/><stop offset="0.034" stop-color="#48a0e8"/><stop offset="0.116" stop-color="#3cd0d0"/><stop offset="0.203" stop-color="#8cf050"/><stop offset="0.277" stop-color="#c4ec40"/><stop offset="0.338" stop-color="#ecd838"/><stop offset="0.415" stop-color="#f8b028"/><stop offset="0.496" stop-color="#f49a24"/><stop offset="0.569" stop-color="#f08420"/><stop offset="0.677" stop-color="#e06018"/><stop offset="0.867" stop-color="#c83810"/><stop offset="0.997" stop-color="#a82008"/></linearGradient>
<linearGradient id="g1506" gradientUnits="userSpaceOnUse" x1="0" y1="522.8" x2="0" y2="877.4"><stop offset="0.003" stop-color="#518ce4"/><stop offset="0.034" stop-color="#48a0e8"/><stop offset="0.118" stop-color="#3cd0d0"/><stop offset="0.205" stop-color="#8cf050"/><stop offset="0.278" stop-color="#c4ec40"/><stop offset="0.338" stop-color="#ecd838"/><stop offset="0.414" stop-color="#f8b028"/><stop offset="0.497" stop-color="#f49a24"/><stop offset="0.570" stop-color="#f08420"/><stop offset="0.676" stop-color="#e06018"/><stop offset="0.867" stop-color="#c83810"/><stop offset="0.997" stop-color="#a82008"/></linearGradient>
<linearGradient id="g1514" gradientUnits="userSpaceOnUse" x1="0" y1="525.2" x2="0" y2="879.1"><stop offset="0.003" stop-color="#518ce4"/><stop offset="0.032" stop-color="#48a0e8"/><stop offset="0.114" stop-color="#3cd0d0"/><stop offset="0.203" stop-color="#8cf050"/><stop offset="0.276" stop-color="#c4ec40"/><stop offset="0.334" stop-color="#ecd838"/><stop offset="0.411" stop-color="#f8b028"/><stop offset="0.495" stop-color="#f49a24"/><stop offset="0.569" stop-color="#f08420"/><stop offset="0.673" stop-color="#e06018"/><stop offset="0.866" stop-color="#c83810"/><stop offset="0.997" stop-color="#a82008"/></linearGradient>
<linearGradient id="g1522" gradientUnits="userSpaceOnUse" x1="0" y1="529.5" x2="0" y2="880.8"><stop offset="0.003" stop-color="#518ce4"/><stop offset="0.029" stop-color="#48a0e8"/><stop offset="0.106" stop-color="#3cd0d0"/><stop offset="0.197" stop-color="#8cf050"/><stop offset="0.269" stop-color="#c4ec40"/><stop offset="0.326" stop-color="#ecd838"/><stop offset="0.404" stop-color="#f8b028"/><stop offset="0.490" stop-color="#f49a24"/><stop offset="0.566" stop-color="#f08420"/><stop offset="0.669" stop-color="#e06018"/><stop offset="0.865" stop-color="#c83810"/><stop offset="0.997" stop-color="#a82008"/></linearGradient>
<linearGradient id="g1530" gradientUnits="userSpaceOnUse" x1="0" y1="533.8" x2="0" y2="882.5"><stop offset="0.003" stop-color="#518ce4"/><stop offset="0.026" stop-color="#48a0e8"/><stop offset="0.098" stop-color="#3cd0d0"/><stop offset="0.190" stop-color="#8cf050"/><stop offset="0.262" stop-color="#c4ec40"/><stop offset="0.319" stop-color="#ecd838"/><stop offset="0.396" stop-color="#f8b028"/><stop offset="0.485" stop-color="#f49a24"/><stop offset="0.562" stop-color="#f08420"/><stop offset="0.665" stop-color="#e06018"/><stop offset="0.864" stop-color="#c83810"/><stop offset="0.997" stop-color="#a82008"/></linearGradient>
<linearGradient id="g1538" gradientUnits="userSpaceOnUse" x1="0" y1="538.1" x2="0" y2="884.2"><stop offset="0.003" stop-color="#518ce4"/><stop offset="0.022" stop-color="#48a0e8"/><stop offset="0.092" stop-color="#3cd0d0"/><stop offset="0.183" stop-color="#8cf050"/><stop offset="0.256" stop-color="#c4ec40"/><stop offset="0.313" stop-color="#ecd838"/><stop offset="0.391" stop-color="#f8b028"/><stop offset="0.480" stop-color="#f49a24"/><stop offset="0.559" stop-color="#f08420"/><stop offset="0.660" stop-color="#e06018"/><stop offset="0.863" stop-color="#c83810"/><stop offset="0.997" stop-color="#a82008"/></linearGradient>
<linearGradient id="g1546" gradientUnits="userSpaceOnUse" x1="0" y1="542.4" x2="0" y2="885.9"><stop offset="0.003" stop-color="#518ce4"/><stop offset="0.019" stop-color="#48a0e8"/><stop offset="0.085" stop-color="#3cd0d0"/><stop offset="0.177" stop-color="#8cf050"/><stop offset="0.250" stop-color="#c4ec40"/><stop offset="0.308" stop-color="#ecd838"/><stop offset="0.385" stop-color="#f8b028"/><stop offset="0.475" stop-color="#f49a24"/><stop offset="0.555" stop-color="#f08420"/><stop offset="0.655" stop-color="#e06018"/><stop offset="0.861" stop-color="#c83810"/><stop offset="0.997" stop-color="#a82008"/></linearGradient>
<linearGradient id="g1554" gradientUnits="userSpaceOnUse" x1="0" y1="546.7" x2="0" y2="887.6"><stop offset="0.003" stop-color="#518ce4"/><stop offset="0.019" stop-color="#48a0e8"/><stop offset="0.078" stop-color="#3cd0d0"/><stop offset="0.170" stop-color="#8cf050"/><stop offset="0.244" stop-color="#c4ec40"/><stop offset="0.302" stop-color="#ecd838"/><stop offset="0.380" stop-color="#f8b028"/><stop offset="0.469" stop-color="#f49a24"/><stop offset="0.551" stop-color="#f08420"/><stop offset="0.651" stop-color="#e06018"/><stop offset="0.860" stop-color="#c83810"/><stop offset="0.997" stop-color="#a82008"/></linearGradient>
<linearGradient id="g1562" gradientUnits="userSpaceOnUse" x1="0" y1="550.9" x2="0" y2="889.3"><stop offset="0.003" stop-color="#518ce4"/><stop offset="0.022" stop-color="#48a0e8"/><stop offset="0.072" stop-color="#3cd0d0"/><stop offset="0.164" stop-color="#8cf050"/><stop offset="0.238" stop-color="#c4ec40"/><stop offset="0.297" stop-color="#ecd838"/><stop offset="0.374" stop-color="#f8b028"/><stop offset="0.464" stop-color="#f49a24"/><stop offset="0.548" stop-color="#f08420"/><stop offset="0.646" stop-color="#e06018"/><stop offset="0.859" stop-color="#c83810"/><stop offset="0.997" stop-color="#a82008"/></linearGradient>
<linearGradient id="g1570" gradientUnits="userSpaceOnUse" x1="0" y1="555.2" x2="0" y2="891"><stop offset="0.003" stop-color="#518ce4"/><stop offset="0.025" stop-color="#48a0e8"/><stop offset="0.065" stop-color="#3cd0d0"/><stop offset="0.157" stop-color="#8cf050"/><stop offset="0.231" stop-color="#c4ec40"/><stop offset="0.291" stop-color="#ecd838"/><stop offset="0.368" stop-color="#f8b028"/><stop offset="0.459" stop-color="#f49a24"/><stop offset="0.544" stop-color="#f08420"/><stop offset="0.641" stop-color="#e06018"/><stop offset="0.857" stop-color="#c83810"/><stop offset="0.997" stop-color="#a82008"/></linearGradient>
<linearGradient id="g1578" gradientUnits="userSpaceOnUse" x1="0" y1="559.4" x2="0" y2="892.7"><stop offset="0.003" stop-color="#518ce4"/><stop offset="0.027" stop-color="#48a0e8"/><stop offset="0.058" stop-color="#3cd0d0"/><stop offset="0.150" stop-color="#8cf050"/><stop offset="0.225" stop-color="#c4ec40"/><stop offset="0.285" stop-color="#ecd838"/><stop offset="0.362" stop-color="#f8b028"/><stop offset="0.453" stop-color="#f49a24"/><stop offset="0.540" stop-color="#f08420"/><stop offset="0.636" stop-color="#e06018"/><stop offset="0.856" stop-color="#c83810"/><stop offset="0.997" stop-color="#a82008"/></linearGradient>
<linearGradient id="g1586" gradientUnits="userSpaceOnUse" x1="0" y1="563.7" x2="0" y2="894.4"><stop offset="0.003" stop-color="#518ce4"/><stop offset="0.030" stop-color="#48a0e8"/><stop offset="0.051" stop-color="#3cd0d0"/><stop offset="0.143" stop-color="#8cf050"/><stop offset="0.219" stop-color="#c4ec40"/><stop offset="0.279" stop-color="#ecd838"/><stop offset="0.356" stop-color="#f8b028"/><stop offset="0.448" stop-color="#f49a24"/><stop offset="0.536" stop-color="#f08420"/><stop offset="0.631" stop-color="#e06018"/><stop offset="0.855" stop-color="#c83810"/><stop offset="0.997" stop-color="#a82008"/></linearGradient>
<linearGradient id="g1594" gradientUnits="userSpaceOnUse" x1="0" y1="567.9" x2="0" y2="896.1"><stop offset="0.003" stop-color="#518ce4"/><stop offset="0.029" stop-color="#48a0e8"/><stop offset="0.044" stop-color="#3cd0d0"/><stop offset="0.136" stop-color="#8cf050"/><stop offset="0.212" stop-color="#c4ec40"/><stop offset="0.273" stop-color="#ecd838"/><stop offset="0.350" stop-color="#f8b028"/><stop offset="0.442" stop-color="#f49a24"/><stop offset="0.532" stop-color="#f08420"/><stop offset="0.626" stop-color="#e06018"/><stop offset="0.853" stop-color="#c83810"/><stop offset="0.997" stop-color="#a82008"/></linearGradient>
<linearGradient id="g1602" gradientUnits="userSpaceOnUse" x1="0" y1="571.8" x2="0" y2="897.8"><stop offset="0.003" stop-color="#518ce4"/><stop offset="0.028" stop-color="#48a0e8"/><stop offset="0.038" stop-color="#3cd0d0"/><stop offset="0.130" stop-color="#8cf050"/><stop offset="0.207" stop-color="#c4ec40"/><stop offset="0.268" stop-color="#ecd838"/><stop offset="0.345" stop-color="#f8b028"/><stop offset="0.437" stop-color="#f49a24"/><stop offset="0.529" stop-color="#f08420"/><stop offset="0.622" stop-color="#e06018"/><stop offset="0.852" stop-color="#c83810"/><stop offset="0.997" stop-color="#a82008"/></linearGradient>
<linearGradient id="g1610" gradientUnits="userSpaceOnUse" x1="0" y1="575.6" x2="0" y2="899.5"><stop offset="0.003" stop-color="#518ce4"/><stop offset="0.028" stop-color="#48a0e8"/><stop offset="0.035" stop-color="#3cd0d0"/><stop offset="0.128" stop-color="#8cf050"/><stop offset="0.205" stop-color="#c4ec40"/><stop offset="0.266" stop-color="#ecd838"/><stop offset="0.342" stop-color="#f8b028"/><stop offset="0.434" stop-color="#f49a24"/><stop offset="0.527" stop-color="#f08420"/><stop offset="0.620" stop-color="#e06018"/><stop offset="0.851" stop-color="#c83810"/><stop offset="0.997" stop-color="#a82008"/></linearGradient>
<linearGradient id="g1618" gradientUnits="userSpaceOnUse" x1="0" y1="579.3" x2="0" y2="901.2"><stop offset="0.003" stop-color="#518ce4"/><stop offset="0.027" stop-color="#48a0e8"/><stop offset="0.036" stop-color="#3cd0d0"/><stop offset="0.130" stop-color="#8cf050"/><stop offset="0.207" stop-color="#c4ec40"/><stop offset="0.267" stop-color="#ecd838"/><stop offset="0.342" stop-color="#f8b028"/><stop offset="0.434" stop-color="#f49a24"/><stop offset="0.527" stop-color="#f08420"/><stop offset="0.620" stop-color="#e06018"/><stop offset="0.850" stop-color="#c83810"/><stop offset="0.997" stop-color="#a82008"/></linearGradient>
<linearGradient id="g1626" gradientUnits="userSpaceOnUse" x1="0" y1="583.1" x2="0" y2="902.9"><stop offset="0.003" stop-color="#518ce4"/><stop offset="0.026" stop-color="#48a0e8"/><stop offset="0.037" stop-color="#3cd0d0"/><stop offset="0.131" stop-color="#8cf050"/><stop offset="0.209" stop-color="#c4ec40"/><stop offset="0.268" stop-color="#ecd838"/><stop offset="0.341" stop-color="#f8b028"/><stop offset="0.433" stop-color="#f49a24"/><stop offset="0.526" stop-color="#f08420"/><stop offset="0.620" stop-color="#e06018"/><stop offset="0.848" stop-color="#c83810"/><stop offset="0.997" stop-color="#a82008"/></linearGradient>
<linearGradient id="g1634" gradientUnits="userSpaceOnUse" x1="0" y1="586.8" x2="0" y2="904.6"><stop offset="0.003" stop-color="#518ce4"/><stop offset="0.025" stop-color="#48a0e8"/><stop offset="0.038" stop-color="#3cd0d0"/><stop offset="0.133" stop-color="#8cf050"/><stop offset="0.211" stop-color="#c4ec40"/><stop offset="0.269" stop-color="#ecd838"/><stop offset="0.340" stop-color="#f8b028"/><stop offset="0.432" stop-color="#f49a24"/><stop offset="0.526" stop-color="#f08420"/><stop offset="0.620" stop-color="#e06018"/><stop offset="0.847" stop-color="#c83810"/><stop offset="0.997" stop-color="#a82008"/></linearGradient>
<linearGradient id="g1642" gradientUnits="userSpaceOnUse" x1="0" y1="590.6" x2="0" y2="906.3"><stop offset="0.003" stop-color="#518ce4"/><stop offset="0.024" stop-color="#48a0e8"/><stop offset="0.039" stop-color="#3cd0d0"/><stop offset="0.134" stop-color="#8cf050"/><stop offset="0.214" stop-color="#c4ec40"/><stop offset="0.271" stop-color="#ecd838"/><stop offset="0.340" stop-color="#f8b028"/><stop offset="0.431" stop-color="#f49a24"/><stop offset="0.526" stop-color="#f08420"/><stop offset="0.621" stop-color="#e06018"/><stop offset="0.846" stop-color="#c83810"/><stop offset="0.997" stop-color="#a82008"/></linearGradient>
<linearGradient id="g1650" gradientUnits="userSpaceOnUse" x1="0" y1="594.3" x2="0" y2="908"><stop offset="0.003" stop-color="#518ce4"/><stop offset="0.024" stop-color="#48a0e8"/><stop offset="0.040" stop-color="#3cd0d0"/><stop offset="0.136" stop-color="#8cf050"/><stop offset="0.216" stop-color="#c4ec40"/><stop offset="0.272" stop-color="#ecd838"/><stop offset="0.339" stop-color="#f8b028"/><stop offset="0.430" stop-color="#f49a24"/><stop offset="0.525" stop-color="#f08420"/><stop offset="0.621" stop-color="#e06018"/><stop offset="0.844" stop-color="#c83810"/><stop offset="0.997" stop-color="#a82008"/></linearGradient>
<linearGradient id="g1658" gradientUnits="userSpaceOnUse" x1="0" y1="598.1" x2="0" y2="909.7"><stop offset="0.003" stop-color="#518ce4"/><stop offset="0.025" stop-color="#48a0e8"/><stop offset="0.042" stop-color="#3cd0d0"/><stop offset="0.138" stop-color="#8cf050"/><stop offset="0.218" stop-color="#c4ec40"/><stop offset="0.273" stop-color="#ecd838"/><stop offset="0.339" stop-color="#f8b028"/><stop offset="0.429" stop-color="#f49a24"/><stop offset="0.525" stop-color="#f08420"/><stop offset="0.621" stop-color="#e06018"/><stop offset="0.843" stop-color="#c83810"/><stop offset="0.997" stop-color="#a82008"/></linearGradient>
<linearGradient id="g1666" gradientUnits="userSpaceOnUse" x1="0" y1="601.8" x2="0" y2="911.4"><stop offset="0.003" stop-color="#518ce4"/><stop offset="0.026" stop-color="#48a0e8"/><stop offset="0.043" stop-color="#3cd0d0"/><stop offset="0.139" stop-color="#8cf050"/><stop offset="0.220" stop-color="#c4ec40"/><stop offset="0.274" stop-color="#ecd838"/><stop offset="0.338" stop-color="#f8b028"/><stop offset="0.428" stop-color="#f49a24"/><stop offset="0.525" stop-color="#f08420"/><stop offset="0.622" stop-color="#e06018"/><stop offset="0.842" stop-color="#c83810"/><stop offset="0.997" stop-color="#a82008"/></linearGradient>
<linearGradient id="g1674" gradientUnits="userSpaceOnUse" x1="0" y1="605.6" x2="0" y2="913.1"><stop offset="0.003" stop-color="#518ce4"/><stop offset="0.026" stop-color="#48a0e8"/><stop offset="0.044" stop-color="#3cd0d0"/><stop offset="0.141" stop-color="#8cf050"/><stop offset="0.223" stop-color="#c4ec40"/><stop offset="0.275" stop-color="#ecd838"/><stop offset="0.337" stop-color="#f8b028"/><stop offset="0.427" stop-color="#f49a24"/><stop offset="0.524" stop-color="#f08420"/><stop offset="0.622" stop-color="#e06018"/><stop offset="0.841" stop-color="#c83810"/><stop offset="0.997" stop-color="#a82008"/></linearGradient>
<linearGradient id="g1682" gradientUnits="userSpaceOnUse" x1="0" y1="609.3" x2="0" y2="914.8"><stop offset="0.003" stop-color="#518ce4"/><stop offset="0.027" stop-color="#48a0e8"/><stop offset="0.045" stop-color="#3cd0d0"/><stop offset="0.143" stop-color="#8cf050"/><stop offset="0.225" stop-color="#c4ec40"/><stop offset="0.276" stop-color="#ecd838"/><stop offset="0.337" stop-color="#f8b028"/><stop offset="0.426" stop-color="#f49a24"/><stop offset="0.524" stop-color="#f08420"/><stop offset="0.622" stop-color="#e06018"/><stop offset="0.839" stop-color="#c83810"/><stop offset="0.997" stop-color="#a82008"/></linearGradient>
<linearGradient id="g1690" gradientUnits="userSpaceOnUse" x1="0" y1="613.1" x2="0" y2="916.5"><stop offset="0.003" stop-color="#518ce4"/><stop offset="0.027" stop-color="#48a0e8"/><stop offset="0.046" stop-color="#3cd0d0"/><stop offset="0.145" stop-color="#8cf050"/><stop offset="0.227" stop-color="#c4ec40"/><stop offset="0.278" stop-color="#ecd838"/><stop offset="0.336" stop-color="#f8b028"/><stop offset="0.425" stop-color="#f49a24"/><stop offset="0.524" stop-color="#f08420"/><stop offset="0.623" stop-color="#e06018"/><stop offset="0.838" stop-color="#c83810"/><stop offset="0.997" stop-color="#a82008"/></linearGradient>
<linearGradient id="g1698" gradientUnits="userSpaceOnUse" x1="0" y1="616.8" x2="0" y2="918.2"><stop offset="0.003" stop-color="#518ce4"/><stop offset="0.028" stop-color="#48a0e8"/><stop offset="0.048" stop-color="#3cd0d0"/><stop offset="0.147" stop-color="#8cf050"/><stop offset="0.229" stop-color="#c4ec40"/><stop offset="0.278" stop-color="#ecd838"/><stop offset="0.335" stop-color="#f8b028"/><stop offset="0.424" stop-color="#f49a24"/><stop offset="0.523" stop-color="#f08420"/><stop offset="0.623" stop-color="#e06018"/><stop offset="0.836" stop-color="#c83810"/><stop offset="0.997" stop-color="#a82008"/></linearGradient>
<linearGradient id="g1706" gradientUnits="userSpaceOnUse" x1="0" y1="620.6" x2="0" y2="919.9"><stop offset="0.003" stop-color="#518ce4"/><stop offset="0.029" stop-color="#48a0e8"/><stop offset="0.051" stop-color="#3cd0d0"/><stop offset="0.149" stop-color="#8cf050"/><stop offset="0.229" stop-color="#c4ec40"/><stop offset="0.275" stop-color="#ecd838"/><stop offset="0.335" stop-color="#f8b028"/><stop offset="0.423" stop-color="#f49a24"/><stop offset="0.523" stop-color="#f08420"/><stop offset="0.623" stop-color="#e06018"/><stop offset="0.835" stop-color="#c83810"/><stop offset="0.997" stop-color="#a82008"/></linearGradient>
<linearGradient id="g1714" gradientUnits="userSpaceOnUse" x1="0" y1="624.3" x2="0" y2="921.6"><stop offset="0.003" stop-color="#518ce4"/><stop offset="0.029" stop-color="#48a0e8"/><stop offset="0.054" stop-color="#3cd0d0"/><stop offset="0.151" stop-color="#8cf050"/><stop offset="0.228" stop-color="#c4ec40"/><stop offset="0.273" stop-color="#ecd838"/><stop offset="0.334" stop-color="#f8b028"/><stop offset="0.422" stop-color="#f49a24"/><stop offset="0.523" stop-color="#f08420"/><stop offset="0.624" stop-color="#e06018"/><stop offset="0.834" stop-color="#c83810"/><stop offset="0.997" stop-color="#a82008"/></linearGradient>
<linearGradient id="g1722" gradientUnits="userSpaceOnUse" x1="0" y1="628.1" x2="0" y2="923.3"><stop offset="0.003" stop-color="#518ce4"/><stop offset="0.030" stop-color="#48a0e8"/><stop offset="0.057" stop-color="#3cd0d0"/><stop offset="0.153" stop-color="#8cf050"/><stop offset="0.228" stop-color="#c4ec40"/><stop offset="0.270" stop-color="#ecd838"/><stop offset="0.333" stop-color="#f8b028"/><stop offset="0.421" stop-color="#f49a24"/><stop offset="0.522" stop-color="#f08420"/><stop offset="0.624" stop-color="#e06018"/><stop offset="0.832" stop-color="#c83810"/><stop offset="0.997" stop-color="#a82008"/></linearGradient>
<linearGradient id="g1730" gradientUnits="userSpaceOnUse" x1="0" y1="631.8" x2="0" y2="925"><stop offset="0.003" stop-color="#518ce4"/><stop offset="0.031" stop-color="#48a0e8"/><stop offset="0.061" stop-color="#3cd0d0"/><stop offset="0.156" stop-color="#8cf050"/><stop offset="0.228" stop-color="#c4ec40"/><stop offset="0.267" stop-color="#ecd838"/><stop offset="0.332" stop-color="#f8b028"/><stop offset="0.420" stop-color="#f49a24"/><stop offset="0.522" stop-color="#f08420"/><stop offset="0.624" stop-color="#e06018"/><stop offset="0.831" stop-color="#c83810"/><stop offset="0.997" stop-color="#a82008"/></linearGradient>
<linearGradient id="g1738" gradientUnits="userSpaceOnUse" x1="0" y1="635.6" x2="0" y2="926.7"><stop offset="0.003" stop-color="#518ce4"/><stop offset="0.031" stop-color="#48a0e8"/><stop offset="0.064" stop-color="#3cd0d0"/><stop offset="0.158" stop-color="#8cf050"/><stop offset="0.227" stop-color="#c4ec40"/><stop offset="0.265" stop-color="#ecd838"/><stop offset="0.332" stop-color="#f8b028"/><stop offset="0.419" stop-color="#f49a24"/><stop offset="0.522" stop-color="#f08420"/><stop offset="0.625" stop-color="#e06018"/><stop offset="0.829" stop-color="#c83810"/><stop offset="0.997" stop-color="#a82008"/></linearGradient>
<linearGradient id="g1746" gradientUnits="userSpaceOnUse" x1="0" y1="639.3" x2="0" y2="928.4"><stop offset="0.003" stop-color="#518ce4"/><stop offset="0.032" stop-color="#48a0e8"/><stop offset="0.068" stop-color="#3cd0d0"/><stop offset="0.160" stop-color="#8cf050"/><stop offset="0.227" stop-color="#c4ec40"/><stop offset="0.262" stop-color="#ecd838"/><stop offset="0.331" stop-color="#f8b028"/><stop offset="0.417" stop-color="#f49a24"/><stop offset="0.521" stop-color="#f08420"/><stop offset="0.625" stop-color="#e06018"/><stop offset="0.828" stop-color="#c83810"/><stop offset="0.997" stop-color="#a82008"/></linearGradient>
<linearGradient id="g1754" gradientUnits="userSpaceOnUse" x1="0" y1="643.1" x2="0" y2="930.1"><stop offset="0.003" stop-color="#518ce4"/><stop offset="0.033" stop-color="#48a0e8"/><stop offset="0.071" stop-color="#3cd0d0"/><stop offset="0.163" stop-color="#8cf050"/><stop offset="0.228" stop-color="#c4ec40"/><stop offset="0.264" stop-color="#ecd838"/><stop offset="0.333" stop-color="#f8b028"/><stop offset="0.418" stop-color="#f49a24"/><stop offset="0.520" stop-color="#f08420"/><stop offset="0.627" stop-color="#e06018"/><stop offset="0.826" stop-color="#c83810"/><stop offset="0.997" stop-color="#a82008"/></linearGradient>
<linearGradient id="g1762" gradientUnits="userSpaceOnUse" x1="0" y1="646.8" x2="0" y2="931.9"><stop offset="0.004" stop-color="#518ce4"/><stop offset="0.033" stop-color="#48a0e8"/><stop offset="0.075" stop-color="#3cd0d0"/><stop offset="0.165" stop-color="#8cf050"/><stop offset="0.228" stop-color="#c4ec40"/><stop offset="0.266" stop-color="#ecd838"/><stop offset="0.336" stop-color="#f8b028"/><stop offset="0.418" stop-color="#f49a24"/><stop offset="0.518" stop-color="#f08420"/><stop offset="0.629" stop-color="#e06018"/><stop offset="0.825" stop-color="#c83810"/><stop offset="0.996" stop-color="#a82008"/></linearGradient>
<linearGradient id="g1770" gradientUnits="userSpaceOnUse" x1="0" y1="650.6" x2="0" y2="933.6"><stop offset="0.004" stop-color="#518ce4"/><stop offset="0.034" stop-color="#48a0e8"/><stop offset="0.078" stop-color="#3cd0d0"/><stop offset="0.167" stop-color="#8cf050"/><stop offset="0.228" stop-color="#c4ec40"/><stop offset="0.268" stop-color="#ecd838"/><stop offset="0.338" stop-color="#f8b028"/><stop offset="0.419" stop-color="#f49a24"/><stop offset="0.517" stop-color="#f08420"/><stop offset="0.631" stop-color="#e06018"/><stop offset="0.823" stop-color="#c83810"/><stop offset="0.996" stop-color="#a82008"/></linearGradient>
<linearGradient id="g1778" gradientUnits="userSpaceOnUse" x1="0" y1="654.3" x2="0" y2="935.3"><stop offset="0.004" stop-color="#518ce4"/><stop offset="0.035" stop-color="#48a0e8"/><stop offset="0.082" stop-color="#3cd0d0"/><stop offset="0.170" stop-color="#8cf050"/><stop offset="0.229" stop-color="#c4ec40"/><stop offset="0.270" stop-color="#ecd838"/><stop offset="0.341" stop-color="#f8b028"/><stop offset="0.419" stop-color="#f49a24"/><stop offset="0.515" stop-color="#f08420"/><stop offset="0.633" stop-color="#e06018"/><stop offset="0.821" stop-color="#c83810"/><stop offset="0.996" stop-color="#a82008"/></linearGradient>
<linearGradient id="g1786" gradientUnits="userSpaceOnUse" x1="0" y1="658.1" x2="0" y2="937"><stop offset="0.004" stop-color="#518ce4"/><stop offset="0.035" stop-color="#48a0e8"/><stop offset="0.086" stop-color="#3cd0d0"/><stop offset="0.172" stop-color="#8cf050"/><stop offset="0.229" stop-color="#c4ec40"/><stop offset="0.272" stop-color="#ecd838"/><stop offset="0.344" stop-color="#f8b028"/><stop offset="0.420" stop-color="#f49a24"/><stop offset="0.514" stop-color="#f08420"/><stop offset="0.635" stop-color="#e06018"/><stop offset="0.820" stop-color="#c83810"/><stop offset="0.996" stop-color="#a82008"/></linearGradient>
<linearGradient id="g1794" gradientUnits="userSpaceOnUse" x1="0" y1="661.8" x2="0" y2="938.7"><stop offset="0.004" stop-color="#518ce4"/><stop offset="0.036" stop-color="#48a0e8"/><stop offset="0.089" stop-color="#3cd0d0"/><stop offset="0.175" stop-color="#8cf050"/><stop offset="0.230" stop-color="#c4ec40"/><stop offset="0.274" stop-color="#ecd838"/><stop offset="0.346" stop-color="#f8b028"/><stop offset="0.420" stop-color="#f49a24"/><stop offset="0.512" stop-color="#f08420"/><stop offset="0.637" stop-color="#e06018"/><stop offset="0.818" stop-color="#c83810"/><stop offset="0.996" stop-color="#a82008"/></linearGradient>
<linearGradient id="g1802" gradientUnits="userSpaceOnUse" x1="0" y1="665.6" x2="0" y2="940.4"><stop offset="0.004" stop-color="#518ce4"/><stop offset="0.037" stop-color="#48a0e8"/><stop offset="0.093" stop-color="#3cd0d0"/><stop offset="0.178" stop-color="#8cf050"/><stop offset="0.230" stop-color="#c4ec40"/><stop offset="0.276" stop-color="#ecd838"/><stop offset="0.349" stop-color="#f8b028"/><stop offset="0.421" stop-color="#f49a24"/><stop offset="0.511" stop-color="#f08420"/><stop offset="0.639" stop-color="#e06018"/><stop offset="0.816" stop-color="#c83810"/><stop offset="0.996" stop-color="#a82008"/></linearGradient>
<linearGradient id="g1810" gradientUnits="userSpaceOnUse" x1="0" y1="669.3" x2="0" y2="942.1"><stop offset="0.004" stop-color="#518ce4"/><stop offset="0.038" stop-color="#48a0e8"/><stop offset="0.097" stop-color="#3cd0d0"/><stop offset="0.180" stop-color="#8cf050"/><stop offset="0.230" stop-color="#c4ec40"/><stop offset="0.278" stop-color="#ecd838"/><stop offset="0.352" stop-color="#f8b028"/><stop offset="0.421" stop-color="#f49a24"/><stop offset="0.509" stop-color="#f08420"/><stop offset="0.641" stop-color="#e06018"/><stop offset="0.815" stop-color="#c83810"/><stop offset="0.996" stop-color="#a82008"/></linearGradient>
<linearGradient id="g1818" gradientUnits="userSpaceOnUse" x1="0" y1="673.1" x2="0" y2="943.8"><stop offset="0.004" stop-color="#518ce4"/><stop offset="0.039" stop-color="#48a0e8"/><stop offset="0.101" stop-color="#3cd0d0"/><stop offset="0.183" stop-color="#8cf050"/><stop offset="0.231" stop-color="#c4ec40"/><stop offset="0.280" stop-color="#ecd838"/><stop offset="0.354" stop-color="#f8b028"/><stop offset="0.422" stop-color="#f49a24"/><stop offset="0.507" stop-color="#f08420"/><stop offset="0.643" stop-color="#e06018"/><stop offset="0.813" stop-color="#c83810"/><stop offset="0.996" stop-color="#a82008"/></linearGradient>
<linearGradient id="g1826" gradientUnits="userSpaceOnUse" x1="0" y1="676.8" x2="0" y2="945.5"><stop offset="0.004" stop-color="#518ce4"/><stop offset="0.039" stop-color="#48a0e8"/><stop offset="0.105" stop-color="#3cd0d0"/><stop offset="0.186" stop-color="#8cf050"/><stop offset="0.231" stop-color="#c4ec40"/><stop offset="0.283" stop-color="#ecd838"/><stop offset="0.357" stop-color="#f8b028"/><stop offset="0.422" stop-color="#f49a24"/><stop offset="0.506" stop-color="#f08420"/><stop offset="0.645" stop-color="#e06018"/><stop offset="0.811" stop-color="#c83810"/><stop offset="0.996" stop-color="#a82008"/></linearGradient>
<linearGradient id="g1834" gradientUnits="userSpaceOnUse" x1="0" y1="680.6" x2="0" y2="947.2"><stop offset="0.004" stop-color="#518ce4"/><stop offset="0.040" stop-color="#48a0e8"/><stop offset="0.109" stop-color="#3cd0d0"/><stop offset="0.188" stop-color="#8cf050"/><stop offset="0.232" stop-color="#c4ec40"/><stop offset="0.285" stop-color="#ecd838"/><stop offset="0.360" stop-color="#f8b028"/><stop offset="0.423" stop-color="#f49a24"/><stop offset="0.504" stop-color="#f08420"/><stop offset="0.648" stop-color="#e06018"/><stop offset="0.809" stop-color="#c83810"/><stop offset="0.996" stop-color="#a82008"/></linearGradient>
<linearGradient id="g1842" gradientUnits="userSpaceOnUse" x1="0" y1="684.3" x2="0" y2="948.9"><stop offset="0.004" stop-color="#518ce4"/><stop offset="0.041" stop-color="#48a0e8"/><stop offset="0.113" stop-color="#3cd0d0"/><stop offset="0.191" stop-color="#8cf050"/><stop offset="0.232" stop-color="#c4ec40"/><stop offset="0.287" stop-color="#ecd838"/><stop offset="0.363" stop-color="#f8b028"/><stop offset="0.423" stop-color="#f49a24"/><stop offset="0.502" stop-color="#f08420"/><stop offset="0.650" stop-color="#e06018"/><stop offset="0.808" stop-color="#c83810"/><stop offset="0.996" stop-color="#a82008"/></linearGradient>
<linearGradient id="g1850" gradientUnits="userSpaceOnUse" x1="0" y1="688.1" x2="0" y2="950.6"><stop offset="0.004" stop-color="#518ce4"/><stop offset="0.042" stop-color="#48a0e8"/><stop offset="0.117" stop-color="#3cd0d0"/><stop offset="0.194" stop-color="#8cf050"/><stop offset="0.233" stop-color="#c4ec40"/><stop offset="0.289" stop-color="#ecd838"/><stop offset="0.366" stop-color="#f8b028"/><stop offset="0.424" stop-color="#f49a24"/><stop offset="0.500" stop-color="#f08420"/><stop offset="0.652" stop-color="#e06018"/><stop offset="0.806" stop-color="#c83810"/><stop offset="0.996" stop-color="#a82008"/></linearGradient>
<linearGradient id="g1858" gradientUnits="userSpaceOnUse" x1="0" y1="689" x2="0" y2="951"><stop offset="0.004" stop-color="#518ce4"/><stop offset="0.042" stop-color="#48a0e8"/><stop offset="0.118" stop-color="#3cd0d0"/><stop offset="0.195" stop-color="#8cf050"/><stop offset="0.233" stop-color="#c4ec40"/><stop offset="0.290" stop-color="#ecd838"/><stop offset="0.366" stop-color="#f8b028"/><stop offset="0.424" stop-color="#f49a24"/><stop offset="0.500" stop-color="#f08420"/><stop offset="0.653" stop-color="#e06018"/><stop offset="0.805" stop-color="#c83810"/><stop offset="0.996" stop-color="#a82008"/></linearGradient>
</defs>
<g clip-path="url(#surf)"><g filter="url(#bl)"><rect x="289" y="460" width="10" height="420" fill="url(#g290)"/><rect x="297" y="460" width="10" height="420" fill="url(#g298)"/><rect x="305" y="460" width="10" height="420" fill="url(#g306)"/><rect x="313" y="460" width="10" height="420" fill="url(#g314)"/><rect x="321" y="460" width="10" height="420" fill="url(#g322)"/><rect x="329" y="460" width="10" height="420" fill="url(#g330)"/><rect x="337" y="460" width="10" height="420" fill="url(#g338)"/><rect x="345" y="460" width="10" height="420" fill="url(#g346)"/><rect x="353" y="460" width="10" height="420" fill="url(#g354)"/><rect x="361" y="460" width="10" height="420" fill="url(#g362)"/><rect x="369" y="460" width="10" height="420" fill="url(#g370)"/><rect x="377" y="460" width="10" height="420" fill="url(#g378)"/><rect x="385" y="460" width="10" height="420" fill="url(#g386)"/><rect x="393" y="460" width="10" height="420" fill="url(#g394)"/><rect x="401" y="460" width="10" height="420" fill="url(#g402)"/><rect x="409" y="460" width="10" height="420" fill="url(#g410)"/><rect x="417" y="460" width="10" height="420" fill="url(#g418)"/><rect x="425" y="460" width="10" height="420" fill="url(#g426)"/><rect x="433" y="460" width="10" height="420" fill="url(#g434)"/><rect x="441" y="460" width="10" height="420" fill="url(#g442)"/><rect x="449" y="460" width="10" height="420" fill="url(#g450)"/><rect x="457" y="460" width="10" height="420" fill="url(#g458)"/><rect x="465" y="460" width="10" height="420" fill="url(#g466)"/><rect x="473" y="460" width="10" height="420" fill="url(#g474)"/><rect x="481" y="460" width="10" height="420" fill="url(#g482)"/><rect x="489" y="460" width="10" height="420" fill="url(#g490)"/><rect x="497" y="460" width="10" height="420" fill="url(#g498)"/><rect x="505" y="460" width="10" height="420" fill="url(#g506)"/><rect x="513" y="460" width="10" height="420" fill="url(#g514)"/><rect x="521" y="460" width="10" height="420" fill="url(#g522)"/><rect x="529" y="460" width="10" height="420" fill="url(#g530)"/><rect x="537" y="460" width="10" height="420" fill="url(#g538)"/><rect x="545" y="460" width="10" height="420" fill="url(#g546)"/><rect x="553" y="460" width="10" height="420" fill="url(#g554)"/><rect x="561" y="460" width="10" height="420" fill="url(#g562)"/><rect x="569" y="460" width="10" height="420" fill="url(#g570)"/><rect x="577" y="460" width="10" height="420" fill="url(#g578)"/><rect x="585" y="460" width="10" height="420" fill="url(#g586)"/><rect x="593" y="460" width="10" height="420" fill="url(#g594)"/><rect x="601" y="460" width="10" height="420" fill="url(#g602)"/><rect x="609" y="460" width="10" height="420" fill="url(#g610)"/><rect x="617" y="460" width="10" height="420" fill="url(#g618)"/><rect x="625" y="460" width="10" height="420" fill="url(#g626)"/><rect x="633" y="460" width="10" height="420" fill="url(#g634)"/><rect x="641" y="460" width="10" height="420" fill="url(#g642)"/><rect x="649" y="460" width="10" height="420" fill="url(#g650)"/><rect x="657" y="460" width="10" height="420" fill="url(#g658)"/><rect x="665" y="460" width="10" height="420" fill="url(#g666)"/><rect x="673" y="460" width="10" height="420" fill="url(#g674)"/><rect x="681" y="460" width="10" height="420" fill="url(#g682)"/><rect x="689" y="460" width="10" height="420" fill="url(#g690)"/><rect x="697" y="460" width="10" height="420" fill="url(#g698)"/><rect x="705" y="460" width="10" height="420" fill="url(#g706)"/><rect x="713" y="460" width="10" height="420" fill="url(#g714)"/><rect x="721" y="460" width="10" height="420" fill="url(#g722)"/><rect x="729" y="460" width="10" height="420" fill="url(#g730)"/><rect x="737" y="460" width="10" height="420" fill="url(#g738)"/><rect x="745" y="460" width="10" height="420" fill="url(#g746)"/><rect x="753" y="460" width="10" height="420" fill="url(#g754)"/><rect x="761" y="460" width="10" height="420" fill="url(#g762)"/><rect x="769" y="460" width="10" height="420" fill="url(#g770)"/><rect x="777" y="460" width="10" height="420" fill="url(#g778)"/><rect x="785" y="460" width="10" height="420" fill="url(#g786)"/><rect x="793" y="460" width="10" height="420" fill="url(#g794)"/><rect x="801" y="460" width="10" height="420" fill="url(#g802)"/><rect x="809" y="460" width="10" height="420" fill="url(#g810)"/><rect x="817" y="460" width="10" height="420" fill="url(#g818)"/><rect x="825" y="460" width="10" height="420" fill="url(#g826)"/><rect x="833" y="460" width="10" height="420" fill="url(#g834)"/><rect x="841" y="460" width="10" height="420" fill="url(#g842)"/><rect x="849" y="460" width="10" height="420" fill="url(#g850)"/><rect x="857" y="460" width="10" height="420" fill="url(#g858)"/><rect x="865" y="460" width="10" height="420" fill="url(#g866)"/><rect x="873" y="460" width="10" height="420" fill="url(#g874)"/><rect x="881" y="460" width="10" height="420" fill="url(#g882)"/><rect x="889" y="460" width="10" height="420" fill="url(#g890)"/><rect x="897" y="460" width="10" height="420" fill="url(#g898)"/><rect x="905" y="460" width="10" height="420" fill="url(#g906)"/><rect x="913" y="460" width="10" height="420" fill="url(#g914)"/><rect x="921" y="460" width="10" height="420" fill="url(#g922)"/><rect x="929" y="460" width="10" height="420" fill="url(#g930)"/><rect x="937" y="460" width="10" height="420" fill="url(#g938)"/><rect x="945" y="460" width="10" height="420" fill="url(#g946)"/><rect x="953" y="460" width="10" height="420" fill="url(#g954)"/><rect x="961" y="460" width="10" height="420" fill="url(#g962)"/><rect x="969" y="460" width="10" height="420" fill="url(#g970)"/><rect x="977" y="460" width="10" height="420" fill="url(#g978)"/><rect x="985" y="460" width="10" height="420" fill="url(#g986)"/><rect x="993" y="460" width="10" height="420" fill="url(#g994)"/><rect x="1001" y="460" width="10" height="420" fill="url(#g1002)"/><rect x="1009" y="460" width="10" height="420" fill="url(#g1010)"/><rect x="1017" y="460" width="10" height="420" fill="url(#g1018)"/><rect x="1025" y="460" width="10" height="420" fill="url(#g1026)"/><rect x="1033" y="460" width="10" height="420" fill="url(#g1034)"/><rect x="1041" y="460" width="10" height="420" fill="url(#g1042)"/><rect x="1049" y="460" width="10" height="420" fill="url(#g1050)"/><rect x="1057" y="460" width="10" height="420" fill="url(#g1058)"/><rect x="1065" y="460" width="10" height="420" fill="url(#g1066)"/><rect x="1073" y="460" width="10" height="420" fill="url(#g1074)"/><rect x="1081" y="460" width="10" height="420" fill="url(#g1082)"/><rect x="1089" y="460" width="10" height="420" fill="url(#g1090)"/><rect x="1097" y="460" width="10" height="420" fill="url(#g1098)"/><rect x="1105" y="460" width="10" height="420" fill="url(#g1106)"/><rect x="1113" y="460" width="10" height="420" fill="url(#g1114)"/><rect x="1121" y="460" width="10" height="420" fill="url(#g1122)"/><rect x="1129" y="460" width="10" height="420" fill="url(#g1130)"/><rect x="1137" y="460" width="10" height="420" fill="url(#g1138)"/><rect x="1145" y="460" width="10" height="420" fill="url(#g1146)"/><rect x="1153" y="460" width="10" height="420" fill="url(#g1154)"/><rect x="1161" y="460" width="10" height="420" fill="url(#g1162)"/><rect x="1169" y="460" width="10" height="420" fill="url(#g1170)"/><rect x="1177" y="460" width="10" height="420" fill="url(#g1178)"/><rect x="1185" y="460" width="10" height="420" fill="url(#g1186)"/><rect x="1193" y="460" width="10" height="420" fill="url(#g1194)"/><rect x="1201" y="460" width="10" height="420" fill="url(#g1202)"/><rect x="1209" y="460" width="10" height="420" fill="url(#g1210)"/><rect x="1217" y="460" width="10" height="420" fill="url(#g1218)"/><rect x="1225" y="460" width="10" height="420" fill="url(#g1226)"/><rect x="1233" y="460" width="10" height="420" fill="url(#g1234)"/><rect x="1241" y="460" width="10" height="420" fill="url(#g1242)"/><rect x="1249" y="460" width="10" height="420" fill="url(#g1250)"/><rect x="1257" y="460" width="10" height="420" fill="url(#g1258)"/><rect x="1265" y="460" width="10" height="420" fill="url(#g1266)"/><rect x="1273" y="460" width="10" height="420" fill="url(#g1274)"/><rect x="1281" y="460" width="10" height="420" fill="url(#g1282)"/><rect x="1289" y="460" width="10" height="420" fill="url(#g1290)"/><rect x="1297" y="460" width="10" height="420" fill="url(#g1298)"/><rect x="1305" y="460" width="10" height="420" fill="url(#g1306)"/><rect x="1313" y="460" width="10" height="420" fill="url(#g1314)"/><rect x="1321" y="460" width="10" height="420" fill="url(#g1322)"/><rect x="1329" y="460" width="10" height="420" fill="url(#g1330)"/><rect x="1337" y="460" width="10" height="420" fill="url(#g1338)"/><rect x="1345" y="460" width="10" height="420" fill="url(#g1346)"/><rect x="1353" y="460" width="10" height="420" fill="url(#g1354)"/><rect x="1361" y="460" width="10" height="420" fill="url(#g1362)"/><rect x="1369" y="460" width="10" height="420" fill="url(#g1370)"/><rect x="1377" y="460" width="10" height="420" fill="url(#g1378)"/><rect x="1385" y="460" width="10" height="420" fill="url(#g1386)"/><rect x="1393" y="460" width="10" height="420" fill="url(#g1394)"/><rect x="1401" y="460" width="10" height="420" fill="url(#g1402)"/><rect x="1409" y="460" width="10" height="420" fill="url(#g1410)"/><rect x="1417" y="460" width="10" height="420" fill="url(#g1418)"/><rect x="1425" y="460" width="10" height="420" fill="url(#g1426)"/><rect x="1433" y="460" width="10" height="420" fill="url(#g1434)"/><rect x="1441" y="460" width="10" height="420" fill="url(#g1442)"/><rect x="1449" y="460" width="10" height="420" fill="url(#g1450)"/><rect x="1457" y="460" width="10" height="420" fill="url(#g1458)"/><rect x="1465" y="460" width="10" height="420" fill="url(#g1466)"/><rect x="1473" y="460" width="10" height="420" fill="url(#g1474)"/><rect x="1481" y="460" width="10" height="420" fill="url(#g1482)"/><rect x="1489" y="460" width="10" height="420" fill="url(#g1490)"/><rect x="1497" y="460" width="10" height="420" fill="url(#g1498)"/><rect x="1505" y="460" width="10" height="420" fill="url(#g1506)"/><rect x="1513" y="460" width="10" height="420" fill="url(#g1514)"/><rect x="1521" y="460" width="10" height="420" fill="url(#g1522)"/><rect x="1529" y="460" width="10" height="420" fill="url(#g1530)"/><rect x="1537" y="460" width="10" height="420" fill="url(#g1538)"/><rect x="1545" y="460" width="10" height="420" fill="url(#g1546)"/><rect x="1553" y="460" width="10" height="420" fill="url(#g1554)"/><rect x="1561" y="460" width="10" height="420" fill="url(#g1562)"/><rect x="1569" y="460" width="10" height="420" fill="url(#g1570)"/><rect x="1577" y="460" width="10" height="420" fill="url(#g1578)"/><rect x="1585" y="460" width="10" height="420" fill="url(#g1586)"/><rect x="1593" y="460" width="10" height="420" fill="url(#g1594)"/><rect x="1601" y="460" width="10" height="420" fill="url(#g1602)"/><rect x="1609" y="460" width="10" height="420" fill="url(#g1610)"/><rect x="1617" y="460" width="10" height="420" fill="url(#g1618)"/><rect x="1625" y="460" width="10" height="420" fill="url(#g1626)"/><rect x="1633" y="460" width="10" height="420" fill="url(#g1634)"/><rect x="1641" y="460" width="10" height="420" fill="url(#g1642)"/><rect x="1649" y="460" width="10" height="420" fill="url(#g1650)"/><rect x="1657" y="460" width="10" height="420" fill="url(#g1658)"/><rect x="1665" y="460" width="10" height="420" fill="url(#g1666)"/><rect x="1673" y="460" width="10" height="420" fill="url(#g1674)"/><rect x="1681" y="460" width="10" height="420" fill="url(#g1682)"/><rect x="1689" y="460" width="10" height="420" fill="url(#g1690)"/><rect x="1697" y="460" width="10" height="420" fill="url(#g1698)"/><rect x="1705" y="460" width="10" height="420" fill="url(#g1706)"/><rect x="1713" y="460" width="10" height="420" fill="url(#g1714)"/><rect x="1721" y="460" width="10" height="420" fill="url(#g1722)"/><rect x="1729" y="460" width="10" height="420" fill="url(#g1730)"/><rect x="1737" y="460" width="10" height="420" fill="url(#g1738)"/><rect x="1745" y="460" width="10" height="420" fill="url(#g1746)"/><rect x="1753" y="460" width="10" height="420" fill="url(#g1754)"/><rect x="1761" y="460" width="10" height="420" fill="url(#g1762)"/><rect x="1769" y="460" width="10" height="420" fill="url(#g1770)"/><rect x="1777" y="460" width="10" height="420" fill="url(#g1778)"/><rect x="1785" y="460" width="10" height="420" fill="url(#g1786)"/><rect x="1793" y="460" width="10" height="420" fill="url(#g1794)"/><rect x="1801" y="460" width="10" height="420" fill="url(#g1802)"/><rect x="1809" y="460" width="10" height="420" fill="url(#g1810)"/><rect x="1817" y="460" width="10" height="420" fill="url(#g1818)"/><rect x="1825" y="460" width="10" height="420" fill="url(#g1826)"/><rect x="1833" y="460" width="10" height="420" fill="url(#g1834)"/><rect x="1841" y="460" width="10" height="420" fill="url(#g1842)"/><rect x="1849" y="460" width="10" height="420" fill="url(#g1850)"/><rect x="1857" y="460" width="10" height="420" fill="url(#g1858)"/></g><g filter="url(#bl2)"><path d="M760 662 L900 658 L962 668 L978 698 L900 704 L760 702Z" fill="#b2270a" opacity="0.75"/><path d="M845 706 L1000 704 L1035 735 L860 724Z" fill="#db5816" opacity="0.7"/><ellipse cx="0" cy="0" rx="75" ry="15" transform="translate(1558 763) rotate(19)" fill="#bb2e0d" opacity="0.75"/><ellipse cx="1330" cy="748" rx="40" ry="10" fill="#c83810" opacity="0.5"/><ellipse cx="0" cy="0" rx="55" ry="6" transform="translate(650 636) rotate(6)" fill="#eb791e" opacity="0.6"/></g></g>
<path stroke="#170c08" stroke-width="1" opacity="0.85" d="M1754 781.5h2M667 670.5h3M1324 721.5h3M728 678.5h1M808 676.5h1M1147 746.5h2M591 646.5h1M1104 709.5h2M1222 763.5h2M634 659.5h2M1571 750.5h2M1362 742.5h2M1814 824.5h2M1036 673.5h1M1299 752.5h2M670 668.5h1M1172 748.5h2M1138 688.5h2M1389 774.5h2M977 702.5h2M1614 812.5h3M687 678.5h1M610 677.5h3M1620 762.5h2M987 703.5h1M953 698.5h2M1564 775.5h1M698 687.5h2M1572 789.5h3M867 630.5h3M1264 710.5h2M1781 825.5h2M776 689.5h2M1097 747.5h2M590 666.5h2M1818 818.5h2M1600 761.5h2M1836 843.5h2M1527 721.5h2M1047 627.5h2M809 662.5h2M814 683.5h1M1766 821.5h3M693 687.5h1M1243 738.5h2M1610 768.5h2M886 628.5h1M1134 703.5h2M1002 662.5h3M1716 795.5h2M1448 723.5h3M1632 787.5h2M1386 785.5h1M1089 705.5h1M1556 749.5h2M1627 802.5h2M700 674.5h2M1282 740.5h1M1639 822.5h2M661 614.5h2M1286 738.5h1M1284 766.5h3M1168 681.5h2M565 665.5h3M1047 733.5h1M1680 808.5h2M823 694.5h3M1140 728.5h1M1105 681.5h2M1180 723.5h2M1450 728.5h3M1239 754.5h2M944 709.5h3M1692 821.5h2M1675 761.5h3M1429 792.5h1M1341 770.5h1M1011 692.5h3M950 683.5h2M1060 730.5h2M1102 726.5h3M1275 718.5h3M890 716.5h3M840 694.5h2M900 686.5h3M702 663.5h2M1157 710.5h2M1131 709.5h2M1668 823.5h1M879 625.5h1M1829 845.5h1M1602 808.5h1M916 705.5h3M1641 805.5h2M676 690.5h2M1437 739.5h3M938 629.5h2M1405 732.5h2M779 614.5h2M795 690.5h2M584 669.5h2M1505 786.5h1M1165 744.5h2M1555 745.5h1M1621 772.5h1M982 691.5h1M733 638.5h2M826 660.5h2M1111 723.5h3M1249 703.5h2M1669 793.5h2M1401 769.5h2M1522 764.5h2M1705 818.5h1M1828 839.5h3M1051 737.5h1M1559 806.5h1M1070 731.5h1M1495 801.5h1M832 655.5h2M1085 705.5h2M1112 736.5h1M1623 781.5h1M877 692.5h2M967 703.5h1M783 664.5h2M1621 715.5h2M1253 708.5h3M1365 718.5h2M1747 819.5h2M1827 838.5h2M640 661.5h2M1645 792.5h1M633 668.5h2M604 627.5h2M1516 709.5h2M1475 779.5h2M777 674.5h3M1338 715.5h3M1224 741.5h3M1260 758.5h1M1171 748.5h2M748 680.5h2M1361 748.5h3M1529 754.5h3M814 672.5h3M1008 695.5h2M927 719.5h2M1197 675.5h3M941 701.5h3M1803 806.5h2M1296 764.5h2M1724 806.5h2M1783 811.5h2M1421 697.5h1M1812 816.5h3M703 689.5h2M665 679.5h3M1587 793.5h3M1376 651.5h3M1221 759.5h2M1842 829.5h2M1395 763.5h1M1509 780.5h3M1505 711.5h1M787 670.5h1M840 650.5h1M743 679.5h1M1820 811.5h1M1540 811.5h1M1295 690.5h3M1382 744.5h2M740 689.5h2M1314 731.5h3M1222 723.5h2M1662 803.5h1M665 669.5h2M1350 711.5h3M1635 802.5h1M1587 729.5h1M744 668.5h2M1820 827.5h1M1352 725.5h2M1605 794.5h1M1234 700.5h1M1764 830.5h2M1594 797.5h1M1335 746.5h1M1623 799.5h2M1742 764.5h3M724 664.5h1M825 704.5h3M1207 676.5h2M688 688.5h1M880 650.5h2M1153 679.5h2M766 673.5h3M609 676.5h2M1325 687.5h1M1511 801.5h1M757 650.5h1M1540 780.5h1M1137 643.5h1M903 685.5h2M1514 710.5h3M996 713.5h2M679 659.5h2M1583 791.5h3M1081 721.5h3M1506 758.5h3M785 631.5h2M590 638.5h1M1669 817.5h2M696 643.5h2M1506 796.5h2M1805 815.5h3M1783 804.5h3M745 636.5h1M945 668.5h2M1791 837.5h2M1381 732.5h2M1781 817.5h1M1077 741.5h2M1079 677.5h2M998 728.5h3M994 726.5h2M947 677.5h2M1013 706.5h3M1756 830.5h2M1654 765.5h3M914 673.5h3M853 672.5h2M1832 815.5h2M877 673.5h3M681 658.5h1M890 666.5h2M1757 796.5h2M1827 844.5h3M1830 831.5h2M1523 734.5h2M1505 768.5h2M1319 722.5h2M1658 788.5h2M966 714.5h3M1582 803.5h1M709 688.5h3M709 631.5h3M1018 696.5h2M690 680.5h3M1297 735.5h3M1525 719.5h1M1360 761.5h3M1660 820.5h2M1524 685.5h3M924 640.5h3M1573 812.5h3M1503 747.5h3M1259 689.5h3M1387 728.5h2M1498 788.5h3M1740 817.5h3M856 674.5h3M1704 819.5h3M608 668.5h3M1694 815.5h2M1838 846.5h2M1318 775.5h1M890 632.5h3M1234 735.5h1M1121 691.5h3M1580 790.5h2M1060 719.5h1M562 628.5h2M1678 774.5h2M792 689.5h2M869 687.5h3M1383 778.5h1M670 671.5h3M788 671.5h2M614 627.5h1M1257 752.5h1M563 641.5h2M1039 737.5h2M1091 736.5h2M981 661.5h2M663 686.5h2M1678 820.5h3M731 636.5h1M681 688.5h1M880 700.5h3M740 637.5h1M1242 717.5h1M1201 669.5h1M619 681.5h3M618 682.5h2M1213 762.5h2M1367 785.5h2M1079 744.5h3M964 717.5h1M1534 803.5h3M1796 811.5h3M1638 804.5h2M1650 804.5h2M673 658.5h2M1586 773.5h2M966 665.5h3M1819 835.5h3M1575 784.5h1M849 708.5h2M631 624.5h1M1683 790.5h1M1452 753.5h1M1726 831.5h2M1221 745.5h1M849 694.5h2M676 685.5h2M1293 736.5h2M1061 729.5h3M682 669.5h2M601 629.5h2M1602 784.5h1M638 645.5h3M1523 768.5h2M773 689.5h2M999 678.5h1M762 649.5h3M1725 829.5h3M1816 796.5h3M764 701.5h2M807 695.5h1M1253 768.5h2M1022 701.5h2M1153 699.5h2M1278 740.5h1M1489 765.5h2M1545 719.5h1M1612 764.5h3M656 677.5h3M1152 679.5h2M1717 769.5h2M998 729.5h2M1802 801.5h1M1439 740.5h1M581 635.5h2M1293 668.5h3M1362 756.5h1M819 699.5h1M1531 796.5h2M1571 789.5h2M1280 748.5h2M1550 795.5h1M1527 793.5h1M1533 786.5h2M1524 795.5h2M1553 788.5h2M1533 793.5h2M1528 795.5h1M1546 787.5h2M1534 784.5h2M1513 787.5h2M1527 788.5h2M1521 786.5h2M1547 783.5h3M1478 798.5h2M1541 790.5h3M1567 795.5h2M1574 794.5h2M1557 792.5h3M1536 789.5h1M1452 797.5h3M1536 785.5h2M1567 786.5h2M1548 785.5h2M1511 795.5h2M1542 782.5h3M1555 794.5h2M1532 793.5h3M1570 795.5h2M1554 793.5h2M1578 790.5h2M1532 788.5h2M1617 784.5h1M1540 780.5h2M1538 788.5h3M1537 793.5h2M1575 790.5h3M1520 787.5h2M1539 786.5h1M1537 792.5h1M1544 799.5h2M1499 790.5h2M1564 784.5h3M1497 800.5h3M1562 792.5h1M1568 784.5h2M1511 797.5h2M1541 781.5h2M1536 797.5h2M1513 782.5h2M1482 789.5h2M1536 786.5h3M1525 788.5h3M1523 787.5h2M1562 789.5h1M1551 780.5h1M1516 794.5h2M1542 794.5h2M1503 792.5h1M1525 789.5h3M1522 785.5h1M753 697.5h2M804 692.5h1M764 692.5h3M758 701.5h2M768 693.5h1M796 699.5h3M787 698.5h1M764 701.5h1M763 698.5h3M782 703.5h2M775 701.5h2M737 698.5h1M783 698.5h3M729 701.5h3M763 694.5h1M817 696.5h2M801 689.5h2M795 698.5h3M786 693.5h2M787 696.5h1M812 695.5h2M740 702.5h2M752 696.5h2M797 706.5h3M792 701.5h2M783 698.5h2M777 699.5h3M757 698.5h3M807 698.5h2M775 701.5h2M1158 690.5h2M1234 695.5h3M1198 691.5h1M1162 686.5h3M1180 698.5h3M1178 695.5h2M1172 692.5h2M1188 706.5h3M1182 687.5h2M1202 691.5h2M1193 688.5h1M1201 688.5h2M1189 690.5h1M1161 694.5h1M1189 682.5h2M1196 695.5h2M1184 693.5h2M1186 693.5h1M1171 697.5h3M1209 687.5h2M1621 740.5h3M1608 749.5h1M1620 745.5h3M1610 756.5h3M1648 746.5h2M1624 753.5h1M1649 746.5h2M1615 739.5h2M1652 753.5h1M1676 746.5h2M1641 735.5h1M1635 741.5h2M1600 740.5h2M1598 742.5h2M1633 741.5h2M1611 744.5h2M1668 748.5h1M1604 748.5h2M1659 744.5h1M1637 750.5h2M1586 745.5h1M1617 748.5h3M1651 742.5h2M1583 742.5h1M1620 741.5h2M945 692.5h1M952 701.5h2M988 697.5h2M964 694.5h2M923 694.5h3M937 691.5h1M896 708.5h2M932 697.5h2M944 695.5h2M934 703.5h1M946 703.5h2M911 700.5h2M918 691.5h1M957 699.5h2M956 701.5h2M892 700.5h3M985 698.5h2M962 704.5h2M982 686.5h2M932 697.5h2"/>
<ellipse cx="0" cy="0" rx="37" ry="5.5" transform="translate(984 571) rotate(23)" fill="#ff00ff"/>
<path d="M1130 580L1190 543" stroke="#ff00ff" stroke-width="5" stroke-linecap="round"/>
<path d="M1190 543L1227 510" stroke="#ff00ff" stroke-width="3" stroke-linecap="round"/>
<path d="M968 694L1010 672" stroke="#ff00ff" stroke-width="6" stroke-linecap="round"/>
<path d="M1010 672L1062 628" stroke="#ff00ff" stroke-width="3" stroke-linecap="round"/>
<path d="M488 575L538 556" stroke="#ff00ff" stroke-width="5" stroke-linecap="round"/>
<path d="M411 593L446 586" stroke="#ff00ff" stroke-width="4" stroke-linecap="round"/>
<path d="M385 595L401 588" stroke="#ff00ff" stroke-width="3" stroke-linecap="round"/>
<path d="M449 584L464 581" stroke="#ff00ff" stroke-width="3" stroke-linecap="round"/>
<path d="M1398 612L1432 586" stroke="#ff00ff" stroke-width="5" stroke-linecap="round"/>
<path d="M1413 566L1471 531" stroke="#ff00ff" stroke-width="3" stroke-linecap="round"/>
<path d="M1565 612L1608 647" stroke="#ff00ff" stroke-width="2" stroke-linecap="round"/>
<path d="M1592 636L1606 645" stroke="#ff00ff" stroke-width="4" stroke-linecap="round"/>
<path d="M1608 690L1643 710" stroke="#ff00ff" stroke-width="3" stroke-linecap="round"/>
<path d="M1420 505L1444 512" stroke="#ff00ff" stroke-width="7" stroke-linecap="round"/>
<path d="M1534 537L1592 539" stroke="#ff00ff" stroke-width="2" stroke-linecap="round"/>
<path d="M650 531L674 522" stroke="#ff00ff" stroke-width="3" stroke-linecap="round"/>
<path d="M685 520L700 513" stroke="#ff00ff" stroke-width="3" stroke-linecap="round"/>
<path d="M830 492L872 479" stroke="#ff00ff" stroke-width="3" stroke-linecap="round"/>
<path d="M850 610L875 621" stroke="#ff00ff" stroke-width="3" stroke-linecap="round"/>
<path d="M816 614L839 624" stroke="#ff00ff" stroke-width="2.5" stroke-linecap="round"/>
<path d="M971 526L994 516" stroke="#ff00ff" stroke-width="2.5" stroke-linecap="round"/>
<path d="M990 542L1030 562" stroke="#ff00ff" stroke-width="2" stroke-linecap="round"/>
<path d="M1062 526L1089 549" stroke="#ff00ff" stroke-width="2" stroke-linecap="round"/>
<path d="M905 591L931 604" stroke="#ff00ff" stroke-width="2.5" stroke-linecap="round"/>
<path d="M1233 572L1253 608" stroke="#ff00ff" stroke-width="2" stroke-linecap="round"/>
<path d="M1266 631L1286 647" stroke="#ff00ff" stroke-width="2.5" stroke-linecap="round"/>
<path d="M1246 621L1259 631" stroke="#ff00ff" stroke-width="2.5" stroke-linecap="round"/>
<path d="M1780 718L1787 729" stroke="#ff00ff" stroke-width="2" stroke-linecap="round"/>
<path d="M1000 600L1020 603" stroke="#ff00ff" stroke-width="3" stroke-linecap="round"/>
<path stroke="#ff00ff" stroke-width="2" d="M1025 432h2m18 8h2m-169 1h2m116 0h2m-135 3h2m45 0h2m42 2h2m111 0h2m-147 1h2m64 1h2m17 0h2m17 0h2m26 0h2m-1 0h2m246 0h2m-432 2h2m41 0h2m-62 1h2m1 0h2m153 0h2m-85 1h2m93 0h2m4 0h2m-177 1h2m6 1h2m62 0h2m76 0h2m4 0h2m1 0h2m-158 1h2m1 0h2m-1 0h2m52 0h2m104 0h2m11 0h2m5 0h2m12 0h2m-191 1h2m0 0h2m6 0h2m40 0h2m2 0h2m1 0h2m13 0h2m33 0h2m42 0h2m1 0h2m19 0h2m-184 1h2m-1 0h2m3 0h2m1 0h2m21 0h2m40 0h2m28 0h2m70 0h2m1 0h2m-180 1h2m1 0h2m70 0h2m48 0h2m23 0h2m8 0h2m19 0h2m-188 1h2m5 0h2m3 0h2m0 0h2m49 0h2m69 0h2m1 0h2m-137 1h2m-1 0h2m4 0h2m84 0h2m46 0h2m15 0h2m-1 0h2m19 0h2m12 0h2m171 0h2m-382 1h2m7 0h2m2 0h2m11 0h2m28 0h2m39 0h2m-94 1h2m3 0h2m4 0h2m1 0h2m1 0h2m0 0h2m49 0h2m6 0h2m13 0h2m71 0h2m41 0h2m21 0h2m-227 1h2m3 0h2m4 0h2m58 0h2m1 0h2m55 0h2m25 0h2m16 0h2m-183 1h2m4 0h2m35 0h2m21 0h2m4 0h2m73 0h2m45 0h2m6 0h2m11 0h2m-156 1h2m5 0h2m16 0h2m52 0h2m2 0h2m27 0h2m-177 1h2m4 0h2m48 0h2m11 0h2m-1 0h2m3 0h2m2 0h2m0 0h2m8 0h2m68 0h2m-1 0h2m4 0h2m-1 0h2m11 0h2m6 0h2m8 0h2m5 0h2m214 0h2m10 0h2m-378 1h2m15 0h2m-1 0h2m10 0h2m56 0h2m27 0h2m6 0h2m10 0h2m-180 1h2m46 0h2m1 0h2m11 0h2m9 0h2m37 0h2m14 0h2m2 0h2m1 0h2m8 0h2m15 0h2m4 0h2m3 0h2m6 0h2m2 0h2m0 0h2m241 0h2m-385 1h2m7 0h2m-1 0h2m4 0h2m7 0h2m2 0h2m0 0h2m-1 0h2m29 0h2m0 0h2m26 0h2m10 0h2m7 0h2m5 0h2m13 0h2m28 0h2m-204 1h2m33 0h2m19 0h2m4 0h2m7 0h2m0 0h2m40 0h2m-1 0h2m3 0h2m30 0h2m6 0h2m22 0h2m48 0h2m-255 1h2m60 0h2m-1 0h2m5 0h2m39 0h2m8 0h2m7 0h2m0 0h2m-1 0h2m33 0h2m0 0h2m-1 0h2m0 0h2m7 0h2m42 0h2m-176 1h2m3 0h2m5 0h2m8 0h2m4 0h2m21 0h2m14 0h2m-1 0h2m0 0h2m25 0h2m5 0h2m-1 0h2m0 0h2m13 0h2m11 0h2m-1 0h2m7 0h2m2 0h2m-150 1h2m4 0h2m1 0h2m6 0h2m3 0h2m-1 0h2m24 0h2m6 0h2m17 0h2m-1 0h2m8 0h2m5 0h2m6 0h2m5 0h2m4 0h2m0 0h2m5 0h2m5 0h2m4 0h2m3 0h2m7 0h2m326 0h2m-497 1h2m2 0h2m6 0h2m29 0h2m1 0h2m21 0h2m16 0h2m20 0h2m1 0h2m0 0h2m-1 0h2m0 0h2m12 0h2m0 0h2m0 0h2m-1 0h2m1 0h2m-1 0h2m10 0h2m0 0h2m42 0h2m172 0h2m-376 1h2m2 0h2m21 0h2m-1 0h2m6 0h2m-1 0h2m0 0h2m6 0h2m21 0h2m7 0h2m10 0h2m8 0h2m2 0h2m-1 0h2m10 0h2m2 0h2m0 0h2m14 0h2m1 0h2m2 0h2m4 0h2m27 0h2m23 0h2m255 0h2m-551 1h2m86 0h2m1 0h2m14 0h2m0 0h2m0 0h2m11 0h2m8 0h2m32 0h2m13 0h2m-1 0h2m7 0h2m2 0h2m0 0h2m-1 0h2m0 0h2m0 0h2m1 0h2m3 0h2m4 0h2m0 0h2m0 0h2m5 0h2m2 0h2m15 0h2m3 0h2m0 0h2m201 0h2m-369 1h2m-1 0h2m19 0h2m3 0h2m12 0h2m0 0h2m19 0h2m7 0h2m0 0h2m2 0h2m11 0h2m6 0h2m1 0h2m1 0h2m1 0h2m40 0h2m-1 0h2m11 0h2m3 0h2m6 0h2m121 0h2m132 0h2m124 0h2m-649 1h2m78 0h2m14 0h2m0 0h2m0 0h2m5 0h2m-1 0h2m6 0h2m5 0h2m1 0h2m30 0h2m7 0h2m1 0h2m10 0h2m7 0h2m4 0h2m0 0h2m6 0h2m-1 0h2m72 0h2m197 0h2m7 0h2m13 0h2m-512 1h2m1 0h2m66 0h2m6 0h2m8 0h2m5 0h2m-1 0h2m7 0h2m0 0h2m1 0h2m6 0h2m3 0h2m-1 0h2m0 0h2m0 0h2m0 0h2m37 0h2m0 0h2m5 0h2m-1 0h2m0 0h2m-1 0h2m-1 0h2m6 0h2m0 0h2m3 0h2m2 0h2m1 0h2m1 0h2m7 0h2m-1 0h2m13 0h2m5 0h2m11 0h2m1 0h2m-1 0h2m221 0h2m65 0h2m138 0h2m-697 1h2m2 0h2m-1 0h2m-1 0h2m48 0h2m38 0h2m11 0h2m1 0h2m1 0h2m-1 0h2m0 0h2m3 0h2m0 0h2m11 0h2m3 0h2m7 0h2m30 0h2m5 0h2m4 0h2m-1 0h2m2 0h2m8 0h2m0 0h2m-1 0h2m1 0h2m-1 0h2m-1 0h2m-1 0h2m0 0h2m-1 0h2m4 0h2m23 0h2m0 0h2m4 0h2m189 0h2m79 0h2m-534 1h2m54 0h2m25 0h2m17 0h2m0 0h2m-1 0h2m0 0h2m3 0h2m-1 0h2m4 0h2m7 0h2m9 0h2m31 0h2m2 0h2m-1 0h2m-1 0h2m5 0h2m1 0h2m2 0h2m3 0h2m-1 0h2m2 0h2m0 0h2m-1 0h2m6 0h2m0 0h2m-1 0h2m5 0h2m0 0h2m0 0h2m1 0h2m11 0h2m0 0h2m18 0h2m21 0h2m142 0h2m29 0h2m-588 1h2m170 0h2m67 0h2m0 0h2m1 0h2m-1 0h2m0 0h2m-1 0h2m9 0h2m4 0h2m20 0h2m-1 0h2m2 0h2m6 0h2m0 0h2m3 0h2m-1 0h2m3 0h2m4 0h2m5 0h2m-1 0h2m2 0h2m4 0h2m0 0h2m0 0h2m0 0h2m3 0h2m5 0h2m-1 0h2m0 0h2m9 0h2m121 0h2m110 0h2m26 0h2m191 0h2m-714 1h2m6 0h2m42 0h2m3 0h2m3 0h2m4 0h2m1 0h2m4 0h2m0 0h2m11 0h2m3 0h2m3 0h2m1 0h2m4 0h2m0 0h2m-1 0h2m-1 0h2m3 0h2m3 0h2m1 0h2m-1 0h2m6 0h2m12 0h2m37 0h2m0 0h2m4 0h2m9 0h2m6 0h2m1 0h2m6 0h2m2 0h2m4 0h2m0 0h2m4 0h2m1 0h2m-1 0h2m9 0h2m-1 0h2m-1 0h2m2 0h2m230 0h2m25 0h2m15 0h2m-495 1h2m0 0h2m1 0h2m46 0h2m2 0h2m-1 0h2m1 0h2m6 0h2m-1 0h2m1 0h2m9 0h2m1 0h2m0 0h2m9 0h2m3 0h2m13 0h2m3 0h2m1 0h2m8 0h2m2 0h2m3 0h2m1 0h2m-1 0h2m8 0h2m5 0h2m-1 0h2m5 0h2m1 0h2m5 0h2m1 0h2m8 0h2m6 0h2m10 0h2m13 0h2m1 0h2m152 0h2m24 0h2m57 0h2m30 0h2m-556 1h2m33 0h2m5 0h2m1 0h2m8 0h2m25 0h2m11 0h2m9 0h2m10 0h2m-1 0h2m3 0h2m-1 0h2m12 0h2m5 0h2m5 0h2m5 0h2m0 0h2m3 0h2m26 0h2m4 0h2m-1 0h2m2 0h2m8 0h2m2 0h2m2 0h2m6 0h2m2 0h2m1 0h2m8 0h2m4 0h2m3 0h2m71 0h2m109 0h2m13 0h2m14 0h2m22 0h2m14 0h2m14 0h2m-507 1h2m4 0h2m7 0h2m1 0h2m43 0h2m38 0h2m1 0h2m-1 0h2m1 0h2m-1 0h2m0 0h2m41 0h2m19 0h2m3 0h2m2 0h2m2 0h2m-1 0h2m4 0h2m2 0h2m0 0h2m8 0h2m-1 0h2m0 0h2m5 0h2m3 0h2m20 0h2m11 0h2m158 0h2m101 0h2m107 0h2m-772 1h2m102 0h2m10 0h2m6 0h2m27 0h2m31 0h2m12 0h2m38 0h2m0 0h2m3 0h2m3 0h2m2 0h2m11 0h2m9 0h2m14 0h2m11 0h2m1 0h2m-1 0h2m4 0h2m11 0h2m1 0h2m-1 0h2m3 0h2m7 0h2m10 0h2m15 0h2m44 0h2m135 0h2m18 0h2m-1 0h2m13 0h2m33 0h2m5 0h2m1 0h2m-639 1h2m103 0h2m29 0h2m-1 0h2m1 0h2m-1 0h2m17 0h2m7 0h2m16 0h2m10 0h2m6 0h2m11 0h2m4 0h2m20 0h2m18 0h2m18 0h2m1 0h2m-1 0h2m18 0h2m5 0h2m2 0h2m3 0h2m0 0h2m-1 0h2m-1 0h2m1 0h2m3 0h2m3 0h2m1 0h2m15 0h2m11 0h2m8 0h2m60 0h2m2 0h2m8 0h2m65 0h2m4 0h2m-438 1h2m7 0h2m15 0h2m3 0h2m0 0h2m12 0h2m8 0h2m6 0h2m11 0h2m7 0h2m18 0h2m8 0h2m24 0h2m26 0h2m17 0h2m5 0h2m-1 0h2m3 0h2m3 0h2m-1 0h2m0 0h2m8 0h2m0 0h2m0 0h2m3 0h2m-1 0h2m-1 0h2m5 0h2m5 0h2m0 0h2m0 0h2m-1 0h2m15 0h2m-1 0h2m0 0h2m2 0h2m9 0h2m3 0h2m4 0h2m40 0h2m-1 0h2m126 0h2m0 0h2m2 0h2m28 0h2m34 0h2m-649 1h2m92 0h2m16 0h2m2 0h2m6 0h2m5 0h2m6 0h2m39 0h2m38 0h2m14 0h2m21 0h2m2 0h2m29 0h2m2 0h2m7 0h2m0 0h2m1 0h2m1 0h2m1 0h2m7 0h2m0 0h2m6 0h2m3 0h2m3 0h2m1 0h2m2 0h2m3 0h2m2 0h2m6 0h2m7 0h2m63 0h2m130 0h2m12 0h2m3 0h2m15 0h2m8 0h2m12 0h2m0 0h2m12 0h2m7 0h2m136 0h2m-790 1h2m73 0h2m17 0h2m4 0h2m2 0h2m3 0h2m1 0h2m9 0h2m13 0h2m39 0h2m10 0h2m1 0h2m12 0h2m22 0h2m0 0h2m5 0h2m21 0h2m20 0h2m3 0h2m3 0h2m5 0h2m5 0h2m0 0h2m1 0h2m-1 0h2m-1 0h2m3 0h2m7 0h2m2 0h2m9 0h2m9 0h2m1 0h2m4 0h2m-1 0h2m-1 0h2m103 0h2m91 0h2m39 0h2m-610 1h2m103 0h2m-1 0h2m13 0h2m7 0h2m3 0h2m33 0h2m11 0h2m21 0h2m36 0h2m14 0h2m6 0h2m13 0h2m24 0h2m4 0h2m9 0h2m1 0h2m-1 0h2m3 0h2m4 0h2m0 0h2m1 0h2m11 0h2m18 0h2m72 0h2m31 0h2m38 0h2m6 0h2m11 0h2m8 0h2m0 0h2m18 0h2m43 0h2m-642 1h2m110 0h2m6 0h2m23 0h2m19 0h2m4 0h2m3 0h2m9 0h2m2 0h2m3 0h2m4 0h2m35 0h2m52 0h2m-1 0h2m17 0h2m18 0h2m16 0h2m-1 0h2m4 0h2m12 0h2m2 0h2m3 0h2m7 0h2m1 0h2m12 0h2m29 0h2m18 0h2m113 0h2m35 0h2m5 0h2m-1 0h2m0 0h2m61 0h2m19 0h2m100 0h2m-689 1h2m6 0h2m1 0h2m27 0h2m7 0h2m10 0h2m33 0h2m18 0h2m26 0h2m72 0h2m0 0h2m17 0h2m0 0h2m6 0h2m1 0h2m0 0h2m3 0h2m1 0h2m6 0h2m18 0h2m5 0h2m11 0h2m2 0h2m-1 0h2m4 0h2m45 0h2m81 0h2m27 0h2m2 0h2m18 0h2m24 0h2m0 0h2m2 0h2m-651 1h2m0 0h2m6 0h2m2 0h2m46 0h2m28 0h2m14 0h2m-1 0h2m1 0h2m18 0h2m9 0h2m13 0h2m36 0h2m2 0h2m9 0h2m2 0h2m5 0h2m2 0h2m12 0h2m64 0h2m4 0h2m13 0h2m0 0h2m42 0h2m16 0h2m11 0h2m18 0h2m19 0h2m8 0h2m30 0h2m58 0h2m3 0h2m9 0h2m3 0h2m0 0h2m5 0h2m4 0h2m3 0h2m5 0h2m12 0h2m10 0h2m14 0h2m2 0h2m11 0h2m16 0h2m5 0h2m118 0h2m-808 1h2m9 0h2m4 0h2m13 0h2m60 0h2m18 0h2m2 0h2m14 0h2m0 0h2m5 0h2m16 0h2m17 0h2m4 0h2m5 0h2m2 0h2m0 0h2m36 0h2m2 0h2m11 0h2m-1 0h2m5 0h2m2 0h2m36 0h2m49 0h2m14 0h2m3 0h2m1 0h2m36 0h2m15 0h2m9 0h2m2 0h2m1 0h2m0 0h2m-1 0h2m25 0h2m15 0h2m10 0h2m16 0h2m36 0h2m26 0h2m-1 0h2m14 0h2m11 0h2m4 0h2m19 0h2m6 0h2m8 0h2m33 0h2m36 0h2m-743 1h2m3 0h2m49 0h2m26 0h2m12 0h2m18 0h2m4 0h2m-1 0h2m22 0h2m3 0h2m11 0h2m1 0h2m70 0h2m24 0h2m4 0h2m10 0h2m18 0h2m36 0h2m20 0h2m22 0h2m1 0h2m41 0h2m10 0h2m11 0h2m7 0h2m10 0h2m36 0h2m17 0h2m6 0h2m40 0h2m2 0h2m-1 0h2m20 0h2m-1 0h2m6 0h2m44 0h2m6 0h2m7 0h2m110 0h2m-736 1h2m7 0h2m34 0h2m55 0h2m5 0h2m9 0h2m23 0h2m59 0h2m5 0h2m0 0h2m16 0h2m21 0h2m1 0h2m11 0h2m103 0h2m4 0h2m5 0h2m2 0h2m0 0h2m11 0h2m32 0h2m44 0h2m17 0h2m9 0h2m-1 0h2m30 0h2m47 0h2m25 0h2m-695 1h2m7 0h2m5 0h2m56 0h2m73 0h2m53 0h2m12 0h2m6 0h2m5 0h2m3 0h2m15 0h2m17 0h2m7 0h2m19 0h2m13 0h2m92 0h2m0 0h2m3 0h2m6 0h2m8 0h2m16 0h2m25 0h2m59 0h2m13 0h2m2 0h2m20 0h2m0 0h2m5 0h2m1 0h2m1 0h2m3 0h2m15 0h2m4 0h2m-1 0h2m1 0h2m4 0h2m3 0h2m-1 0h2m28 0h2m143 0h2m-812 1h2m3 0h2m39 0h2m3 0h2m27 0h2m4 0h2m-1 0h2m-1 0h2m9 0h2m3 0h2m25 0h2m13 0h2m14 0h2m7 0h2m14 0h2m2 0h2m41 0h2m31 0h2m13 0h2m2 0h2m2 0h2m1 0h2m22 0h2m11 0h2m5 0h2m2 0h2m9 0h2m88 0h2m1 0h2m7 0h2m0 0h2m5 0h2m5 0h2m3 0h2m63 0h2m14 0h2m-1 0h2m11 0h2m0 0h2m0 0h2m8 0h2m-1 0h2m6 0h2m4 0h2m0 0h2m11 0h2m-1 0h2m0 0h2m0 0h2m15 0h2m0 0h2m34 0h2m1 0h2m28 0h2m-716 1h2m0 0h2m10 0h2m14 0h2m1 0h2m55 0h2m1 0h2m10 0h2m15 0h2m4 0h2m1 0h2m1 0h2m18 0h2m3 0h2m24 0h2m4 0h2m4 0h2m8 0h2m35 0h2m14 0h2m45 0h2m3 0h2m15 0h2m22 0h2m-1 0h2m82 0h2m4 0h2m6 0h2m11 0h2m26 0h2m9 0h2m13 0h2m29 0h2m2 0h2m27 0h2m11 0h2m1 0h2m4 0h2m5 0h2m-1 0h2m3 0h2m2 0h2m18 0h2m-1 0h2m7 0h2m25 0h2m5 0h2m40 0h2m48 0h2m19 0h2m0 0h2m-790 1h2m25 0h2m5 0h2m6 0h2m13 0h2m8 0h2m4 0h2m3 0h2m8 0h2m14 0h2m1 0h2m22 0h2m22 0h2m2 0h2m0 0h2m13 0h2m27 0h2m9 0h2m17 0h2m13 0h2m2 0h2m51 0h2m49 0h2m75 0h2m22 0h2m-1 0h2m9 0h2m10 0h2m48 0h2m21 0h2m7 0h2m2 0h2m6 0h2m0 0h2m7 0h2m0 0h2m-1 0h2m3 0h2m6 0h2m9 0h2m4 0h2m4 0h2m4 0h2m-1 0h2m7 0h2m3 0h2m50 0h2m7 0h2m15 0h2m-753 1h2m25 0h2m35 0h2m1 0h2m5 0h2m10 0h2m-1 0h2m2 0h2m2 0h2m24 0h2m7 0h2m9 0h2m8 0h2m16 0h2m1 0h2m11 0h2m8 0h2m1 0h2m4 0h2m9 0h2m3 0h2m10 0h2m9 0h2m9 0h2m59 0h2m34 0h2m8 0h2m19 0h2m16 0h2m5 0h2m102 0h2m6 0h2m18 0h2m7 0h2m11 0h2m16 0h2m1 0h2m2 0h2m5 0h2m19 0h2m0 0h2m28 0h2m22 0h2m7 0h2m5 0h2m50 0h2m3 0h2m50 0h2m5 0h2m-800 1h2m12 0h2m38 0h2m9 0h2m0 0h2m7 0h2m72 0h2m19 0h2m2 0h2m10 0h2m7 0h2m4 0h2m18 0h2m9 0h2m9 0h2m24 0h2m10 0h2m25 0h2m13 0h2m8 0h2m29 0h2m70 0h2m49 0h2m3 0h2m23 0h2m15 0h2m29 0h2m0 0h2m22 0h2m6 0h2m1 0h2m9 0h2m8 0h2m-1 0h2m8 0h2m10 0h2m34 0h2m1 0h2m1 0h2m-695 1h2m8 0h2m2 0h2m4 0h2m2 0h2m8 0h2m16 0h2m11 0h2m0 0h2m-1 0h2m3 0h2m2 0h2m9 0h2m-1 0h2m10 0h2m3 0h2m5 0h2m5 0h2m2 0h2m3 0h2m4 0h2m5 0h2m4 0h2m14 0h2m3 0h2m19 0h2m30 0h2m26 0h2m26 0h2m10 0h2m3 0h2m26 0h2m17 0h2m166 0h2m80 0h2m7 0h2m6 0h2m7 0h2m4 0h2m0 0h2m1 0h2m1 0h2m-1 0h2m2 0h2m6 0h2m13 0h2m-1 0h2m2 0h2m-1 0h2m-1 0h2m1 0h2m0 0h2m24 0h2m30 0h2m3 0h2m2 0h2m2 0h2m0 0h2m-1 0h2m0 0h2m67 0h2m1 0h2m-821 1h2m4 0h2m4 0h2m0 0h2m7 0h2m1 0h2m1 0h2m22 0h2m1 0h2m11 0h2m25 0h2m3 0h2m11 0h2m44 0h2m59 0h2m15 0h2m20 0h2m3 0h2m17 0h2m14 0h2m0 0h2m16 0h2m23 0h2m30 0h2m24 0h2m10 0h2m124 0h2m14 0h2m0 0h2m5 0h2m6 0h2m0 0h2m5 0h2m1 0h2m9 0h2m4 0h2m3 0h2m-1 0h2m2 0h2m3 0h2m5 0h2m2 0h2m1 0h2m-1 0h2m17 0h2m1 0h2m1 0h2m12 0h2m3 0h2m9 0h2m42 0h2m-1 0h2m-1 0h2m3 0h2m1 0h2m-1 0h2m1 0h2m25 0h2m37 0h2m17 0h2m-809 1h2m28 0h2m-1 0h2m27 0h2m0 0h2m12 0h2m17 0h2m13 0h2m42 0h2m6 0h2m-1 0h2m5 0h2m16 0h2m28 0h2m22 0h2m16 0h2m22 0h2m10 0h2m-1 0h2m19 0h2m8 0h2m12 0h2m13 0h2m60 0h2m90 0h2m9 0h2m1 0h2m11 0h2m10 0h2m11 0h2m8 0h2m0 0h2m2 0h2m-1 0h2m-1 0h2m2 0h2m10 0h2m1 0h2m-1 0h2m10 0h2m-1 0h2m5 0h2m4 0h2m0 0h2m18 0h2m-1 0h2m1 0h2m4 0h2m24 0h2m7 0h2m-1 0h2m7 0h2m2 0h2m-1 0h2m-1 0h2m-1 0h2m0 0h2m-1 0h2m1 0h2m2 0h2m51 0h2m3 0h2m2 0h2m17 0h2m7 0h2m-835 1h2m0 0h2m11 0h2m5 0h2m4 0h2m29 0h2m-1 0h2m3 0h2m10 0h2m15 0h2m3 0h2m2 0h2m3 0h2m15 0h2m10 0h2m7 0h2m-1 0h2m31 0h2m10 0h2m0 0h2m5 0h2m21 0h2m12 0h2m16 0h2m16 0h2m1 0h2m11 0h2m33 0h2m7 0h2m58 0h2m21 0h2m117 0h2m6 0h2m8 0h2m19 0h2m6 0h2m5 0h2m5 0h2m1 0h2m0 0h2m3 0h2m5 0h2m-1 0h2m8 0h2m-1 0h2m0 0h2m9 0h2m6 0h2m11 0h2m14 0h2m7 0h2m13 0h2m23 0h2m4 0h2m2 0h2m-1 0h2m0 0h2m1 0h2m-1 0h2m53 0h2m12 0h2m6 0h2m-798 1h2m-1 0h2m0 0h2m20 0h2m4 0h2m3 0h2m4 0h2m4 0h2m8 0h2m6 0h2m21 0h2m48 0h2m6 0h2m7 0h2m1 0h2m4 0h2m22 0h2m1 0h2m2 0h2m8 0h2m17 0h2m3 0h2m13 0h2m15 0h2m50 0h2m4 0h2m14 0h2m17 0h2m192 0h2m12 0h2m1 0h2m26 0h2m18 0h2m0 0h2m3 0h2m14 0h2m2 0h2m-1 0h2m0 0h2m0 0h2m1 0h2m6 0h2m26 0h2m19 0h2m0 0h2m0 0h2m1 0h2m5 0h2m85 0h2m3 0h2m1 0h2m-833 1h2m43 0h2m20 0h2m3 0h2m37 0h2m2 0h2m16 0h2m11 0h2m0 0h2m8 0h2m6 0h2m-1 0h2m20 0h2m1 0h2m2 0h2m27 0h2m12 0h2m49 0h2m10 0h2m0 0h2m15 0h2m22 0h2m2 0h2m14 0h2m125 0h2m12 0h2m69 0h2m2 0h2m1 0h2m2 0h2m0 0h2m7 0h2m0 0h2m11 0h2m-1 0h2m3 0h2m4 0h2m10 0h2m14 0h2m0 0h2m0 0h2m6 0h2m7 0h2m34 0h2m7 0h2m-1 0h2m6 0h2m6 0h2m33 0h2m24 0h2m128 0h2m-927 1h2m0 0h2m7 0h2m-1 0h2m41 0h2m16 0h2m1 0h2m33 0h2m12 0h2m5 0h2m8 0h2m8 0h2m22 0h2m11 0h2m2 0h2m35 0h2m9 0h2m6 0h2m20 0h2m12 0h2m11 0h2m11 0h2m1 0h2m4 0h2m3 0h2m36 0h2m44 0h2m24 0h2m60 0h2m61 0h2m23 0h2m3 0h2m3 0h2m14 0h2m1 0h2m0 0h2m-1 0h2m2 0h2m-1 0h2m3 0h2m9 0h2m4 0h2m2 0h2m0 0h2m-1 0h2m1 0h2m3 0h2m3 0h2m1 0h2m-1 0h2m5 0h2m-1 0h2m10 0h2m1 0h2m21 0h2m-1 0h2m0 0h2m1 0h2m-1 0h2m-1 0h2m3 0h2m4 0h2m1 0h2m7 0h2m59 0h2m-806 1h2m2 0h2m5 0h2m72 0h2m0 0h2m8 0h2m3 0h2m41 0h2m19 0h2m14 0h2m0 0h2m59 0h2m5 0h2m9 0h2m27 0h2m49 0h2m26 0h2m12 0h2m4 0h2m20 0h2m6 0h2m183 0h2m10 0h2m2 0h2m6 0h2m4 0h2m-1 0h2m4 0h2m14 0h2m0 0h2m2 0h2m16 0h2m9 0h2m0 0h2m12 0h2m13 0h2m6 0h2m52 0h2m21 0h2m-800 1h2m18 0h2m14 0h2m3 0h2m6 0h2m4 0h2m7 0h2m28 0h2m4 0h2m5 0h2m13 0h2m22 0h2m2 0h2m19 0h2m16 0h2m4 0h2m4 0h2m1 0h2m3 0h2m14 0h2m21 0h2m26 0h2m44 0h2m4 0h2m25 0h2m26 0h2m51 0h2m50 0h2m7 0h2m6 0h2m54 0h2m31 0h2m22 0h2m0 0h2m-1 0h2m-1 0h2m2 0h2m2 0h2m2 0h2m1 0h2m0 0h2m5 0h2m0 0h2m78 0h2m46 0h2m0 0h2m0 0h2m8 0h2m2 0h2m0 0h2m0 0h2m-828 1h2m25 0h2m17 0h2m6 0h2m7 0h2m15 0h2m13 0h2m10 0h2m25 0h2m32 0h2m1 0h2m9 0h2m1 0h2m19 0h2m-1 0h2m2 0h2m26 0h2m51 0h2m41 0h2m9 0h2m18 0h2m0 0h2m3 0h2m65 0h2m49 0h2m40 0h2m1 0h2m117 0h2m1 0h2m7 0h2m-1 0h2m0 0h2m10 0h2m0 0h2m18 0h2m-1 0h2m44 0h2m13 0h2m32 0h2m8 0h2m7 0h2m0 0h2m-816 1h2m16 0h2m0 0h2m0 0h2m12 0h2m9 0h2m7 0h2m9 0h2m5 0h2m5 0h2m13 0h2m13 0h2m49 0h2m27 0h2m12 0h2m4 0h2m34 0h2m-1 0h2m16 0h2m8 0h2m24 0h2m34 0h2m0 0h2m32 0h2m1 0h2m15 0h2m11 0h2m44 0h2m69 0h2m-1 0h2m21 0h2m94 0h2m21 0h2m3 0h2m0 0h2m0 0h2m23 0h2m0 0h2m31 0h2m17 0h2m62 0h2m12 0h2m26 0h2m-869 1h2m2 0h2m6 0h2m10 0h2m31 0h2m23 0h2m10 0h2m28 0h2m10 0h2m1 0h2m10 0h2m19 0h2m3 0h2m-1 0h2m2 0h2m0 0h2m2 0h2m3 0h2m2 0h2m5 0h2m6 0h2m64 0h2m7 0h2m12 0h2m11 0h2m11 0h2m3 0h2m4 0h2m12 0h2m4 0h2m13 0h2m34 0h2m60 0h2m195 0h2m15 0h2m-1 0h2m0 0h2m1 0h2m6 0h2m3 0h2m4 0h2m17 0h2m16 0h2m21 0h2m5 0h2m47 0h2m9 0h2m-1 0h2m-813 1h2m3 0h2m1 0h2m29 0h2m45 0h2m28 0h2m4 0h2m26 0h2m19 0h2m21 0h2m5 0h2m15 0h2m16 0h2m2 0h2m24 0h2m-1 0h2m3 0h2m64 0h2m1 0h2m50 0h2m59 0h2m12 0h2m23 0h2m11 0h2m97 0h2m21 0h2m73 0h2m23 0h2m11 0h2m22 0h2m20 0h2m12 0h2m-828 1h2m12 0h2m10 0h2m47 0h2m14 0h2m5 0h2m7 0h2m8 0h2m8 0h2m24 0h2m1 0h2m0 0h2m3 0h2m4 0h2m10 0h2m23 0h2m-1 0h2m0 0h2m19 0h2m1 0h2m3 0h2m18 0h2m13 0h2m22 0h2m4 0h2m3 0h2m13 0h2m8 0h2m40 0h2m11 0h2m5 0h2m47 0h2m82 0h2m171 0h2m69 0h2m35 0h2m-811 1h2m0 0h2m29 0h2m5 0h2m20 0h2m1 0h2m7 0h2m2 0h2m7 0h2m5 0h2m5 0h2m8 0h2m30 0h2m-1 0h2m15 0h2m22 0h2m8 0h2m19 0h2m3 0h2m44 0h2m8 0h2m15 0h2m2 0h2m57 0h2m10 0h2m8 0h2m4 0h2m12 0h2m1 0h2m112 0h2m7 0h2m18 0h2m38 0h2m82 0h2m50 0h2m49 0h2m14 0h2m2 0h2m2 0h2m11 0h2m3 0h2m6 0h2m2 0h2m-816 1h2m10 0h2m13 0h2m96 0h2m38 0h2m17 0h2m3 0h2m11 0h2m10 0h2m4 0h2m25 0h2m28 0h2m2 0h2m4 0h2m18 0h2m-1 0h2m11 0h2m7 0h2m20 0h2m61 0h2m82 0h2m0 0h2m66 0h2m215 0h2m-1 0h2m23 0h2m3 0h2m-836 1h2m17 0h2m33 0h2m11 0h2m26 0h2m5 0h2m6 0h2m11 0h2m2 0h2m10 0h2m14 0h2m7 0h2m13 0h2m5 0h2m5 0h2m19 0h2m20 0h2m14 0h2m12 0h2m10 0h2m7 0h2m7 0h2m2 0h2m8 0h2m5 0h2m12 0h2m24 0h2m29 0h2m3 0h2m52 0h2m32 0h2m2 0h2m39 0h2m139 0h2m17 0h2m53 0h2m0 0h2m2 0h2m6 0h2m18 0h2m0 0h2m7 0h2m6 0h2m6 0h2m1 0h2m14 0h2m-836 1h2m62 0h2m33 0h2m30 0h2m9 0h2m5 0h2m19 0h2m15 0h2m-1 0h2m28 0h2m3 0h2m29 0h2m12 0h2m34 0h2m0 0h2m10 0h2m9 0h2m38 0h2m40 0h2m59 0h2m123 0h2m27 0h2m160 0h2m-1 0h2m9 0h2m17 0h2m3 0h2m0 0h2m-789 1h2m-1 0h2m2 0h2m2 0h2m14 0h2m15 0h2m-1 0h2m8 0h2m28 0h2m18 0h2m14 0h2m37 0h2m5 0h2m3 0h2m18 0h2m0 0h2m-1 0h2m1 0h2m10 0h2m3 0h2m9 0h2m7 0h2m1 0h2m70 0h2m19 0h2m2 0h2m10 0h2m1 0h2m19 0h2m20 0h2m30 0h2m144 0h2m5 0h2m173 0h2m21 0h2m12 0h2m0 0h2m6 0h2m0 0h2m7 0h2m1 0h2m-854 1h2m49 0h2m4 0h2m38 0h2m1 0h2m19 0h2m4 0h2m26 0h2m8 0h2m3 0h2m7 0h2m28 0h2m6 0h2m-1 0h2m26 0h2m22 0h2m7 0h2m18 0h2m2 0h2m-1 0h2m14 0h2m8 0h2m20 0h2m1 0h2m9 0h2m33 0h2m21 0h2m30 0h2m77 0h2m54 0h2m31 0h2m76 0h2m85 0h2m14 0h2m10 0h2m6 0h2m8 0h2m0 0h2m1 0h2m-1 0h2m7 0h2m4 0h2m-868 1h2m4 0h2m9 0h2m30 0h2m0 0h2m3 0h2m13 0h2m15 0h2m25 0h2m3 0h2m0 0h2m22 0h2m10 0h2m2 0h2m20 0h2m7 0h2m1 0h2m5 0h2m3 0h2m-1 0h2m0 0h2m1 0h2m8 0h2m6 0h2m18 0h2m50 0h2m2 0h2m3 0h2m29 0h2m2 0h2m22 0h2m31 0h2m21 0h2m18 0h2m98 0h2m5 0h2m91 0h2m186 0h2m1 0h2m2 0h2m0 0h2m57 0h2m-898 1h2m69 0h2m61 0h2m44 0h2m7 0h2m6 0h2m1 0h2m15 0h2m1 0h2m3 0h2m4 0h2m24 0h2m4 0h2m20 0h2m3 0h2m18 0h2m5 0h2m24 0h2m1 0h2m30 0h2m155 0h2m4 0h2m182 0h2m79 0h2m29 0h2m63 0h2m-916 1h2m24 0h2m12 0h2m-1 0h2m25 0h2m18 0h2m8 0h2m38 0h2m3 0h2m3 0h2m8 0h2m21 0h2m7 0h2m12 0h2m17 0h2m3 0h2m-1 0h2m16 0h2m4 0h2m18 0h2m38 0h2m10 0h2m14 0h2m11 0h2m43 0h2m42 0h2m3 0h2m19 0h2m27 0h2m47 0h2m114 0h2m204 0h2m15 0h2m10 0h2m-861 1h2m8 0h2m28 0h2m8 0h2m4 0h2m31 0h2m25 0h2m6 0h2m29 0h2m8 0h2m3 0h2m12 0h2m3 0h2m3 0h2m0 0h2m46 0h2m6 0h2m16 0h2m13 0h2m7 0h2m11 0h2m18 0h2m1 0h2m15 0h2m25 0h2m16 0h2m3 0h2m20 0h2m1 0h2m2 0h2m16 0h2m0 0h2m33 0h2m3 0h2m4 0h2m18 0h2m25 0h2m45 0h2m15 0h2m3 0h2m26 0h2m14 0h2m148 0h2m29 0h2m9 0h2m30 0h2m-923 1h2m1 0h2m1 0h2m17 0h2m6 0h2m54 0h2m27 0h2m15 0h2m4 0h2m35 0h2m13 0h2m10 0h2m4 0h2m2 0h2m8 0h2m11 0h2m2 0h2m3 0h2m1 0h2m0 0h2m9 0h2m21 0h2m5 0h2m26 0h2m22 0h2m21 0h2m12 0h2m31 0h2m12 0h2m29 0h2m85 0h2m12 0h2m172 0h2m76 0h2m72 0h2m4 0h2m13 0h2m49 0h2m-1012 1h2m84 0h2m17 0h2m22 0h2m46 0h2m-1 0h2m28 0h2m14 0h2m5 0h2m2 0h2m25 0h2m3 0h2m2 0h2m10 0h2m12 0h2m14 0h2m42 0h2m-1 0h2m2 0h2m23 0h2m20 0h2m6 0h2m43 0h2m1 0h2m125 0h2m6 0h2m-1 0h2m137 0h2m35 0h2m43 0h2m30 0h2m-858 1h2m0 0h2m49 0h2m-1 0h2m29 0h2m7 0h2m4 0h2m87 0h2m16 0h2m1 0h2m18 0h2m0 0h2m23 0h2m4 0h2m-1 0h2m6 0h2m6 0h2m18 0h2m2 0h2m-1 0h2m8 0h2m4 0h2m13 0h2m6 0h2m37 0h2m26 0h2m50 0h2m-1 0h2m20 0h2m64 0h2m51 0h2m109 0h2m0 0h2m40 0h2m29 0h2m7 0h2m143 0h2m-866 1h2m25 0h2m8 0h2m4 0h2m32 0h2m8 0h2m4 0h2m0 0h2m20 0h2m19 0h2m16 0h2m2 0h2m2 0h2m12 0h2m4 0h2m3 0h2m13 0h2m0 0h2m-1 0h2m17 0h2m9 0h2m37 0h2m30 0h2m5 0h2m25 0h2m10 0h2m14 0h2m10 0h2m64 0h2m72 0h2m13 0h2m137 0h2m142 0h2m-832 1h2m9 0h2m0 0h2m20 0h2m13 0h2m17 0h2m8 0h2m0 0h2m10 0h2m14 0h2m5 0h2m6 0h2m18 0h2m3 0h2m5 0h2m26 0h2m10 0h2m4 0h2m4 0h2m3 0h2m2 0h2m2 0h2m1 0h2m16 0h2m10 0h2m15 0h2m7 0h2m-1 0h2m13 0h2m47 0h2m48 0h2m0 0h2m21 0h2m22 0h2m90 0h2m11 0h2m18 0h2m20 0h2m153 0h2m6 0h2m40 0h2m0 0h2m88 0h2m-959 1h2m84 0h2m22 0h2m32 0h2m55 0h2m43 0h2m6 0h2m15 0h2m2 0h2m10 0h2m1 0h2m0 0h2m3 0h2m-1 0h2m9 0h2m2 0h2m15 0h2m20 0h2m6 0h2m8 0h2m4 0h2m14 0h2m5 0h2m21 0h2m3 0h2m8 0h2m-1 0h2m25 0h2m5 0h2m0 0h2m14 0h2m90 0h2m23 0h2m23 0h2m42 0h2m19 0h2m24 0h2m163 0h2m64 0h2m-998 1h2m39 0h2m63 0h2m53 0h2m16 0h2m24 0h2m7 0h2m2 0h2m8 0h2m12 0h2m1 0h2m27 0h2m0 0h2m14 0h2m10 0h2m0 0h2m26 0h2m29 0h2m45 0h2m10 0h2m22 0h2m6 0h2m42 0h2m7 0h2m45 0h2m15 0h2m5 0h2m20 0h2m141 0h2m12 0h2m89 0h2m18 0h2m7 0h2m1 0h2m51 0h2m53 0h2m-994 1h2m42 0h2m-1 0h2m0 0h2m65 0h2m38 0h2m2 0h2m45 0h2m17 0h2m14 0h2m10 0h2m14 0h2m12 0h2m3 0h2m1 0h2m7 0h2m3 0h2m6 0h2m2 0h2m9 0h2m10 0h2m3 0h2m4 0h2m9 0h2m7 0h2m14 0h2m2 0h2m29 0h2m14 0h2m25 0h2m13 0h2m11 0h2m14 0h2m3 0h2m13 0h2m10 0h2m44 0h2m3 0h2m7 0h2m28 0h2m7 0h2m0 0h2m10 0h2m55 0h2m10 0h2m29 0h2m146 0h2m50 0h2m26 0h2m16 0h2m-954 1h2m94 0h2m2 0h2m37 0h2m3 0h2m2 0h2m59 0h2m0 0h2m38 0h2m33 0h2m11 0h2m13 0h2m0 0h2m5 0h2m3 0h2m31 0h2m15 0h2m28 0h2m19 0h2m43 0h2m8 0h2m1 0h2m26 0h2m43 0h2m12 0h2m-1 0h2m14 0h2m9 0h2m10 0h2m-1 0h2m12 0h2m43 0h2m13 0h2m235 0h2m2 0h2m2 0h2m2 0h2m1 0h2m-1 0h2m0 0h2m5 0h2m1 0h2m2 0h2m-1 0h2m-1 0h2m77 0h2m-1089 1h2m0 0h2m42 0h2m0 0h2m55 0h2m10 0h2m51 0h2m4 0h2m33 0h2m17 0h2m4 0h2m27 0h2m7 0h2m47 0h2m24 0h2m4 0h2m4 0h2m38 0h2m10 0h2m16 0h2m15 0h2m45 0h2m5 0h2m11 0h2m1 0h2m33 0h2m13 0h2m42 0h2m1 0h2m19 0h2m0 0h2m61 0h2m55 0h2m36 0h2m47 0h2m14 0h2m36 0h2m83 0h2m7 0h2m0 0h2m21 0h2m11 0h2m-1030 1h2m69 0h2m11 0h2m52 0h2m47 0h2m23 0h2m29 0h2m16 0h2m5 0h2m10 0h2m19 0h2m9 0h2m3 0h2m14 0h2m15 0h2m2 0h2m14 0h2m-1 0h2m5 0h2m24 0h2m9 0h2m12 0h2m12 0h2m2 0h2m2 0h2m28 0h2m5 0h2m7 0h2m12 0h2m0 0h2m34 0h2m2 0h2m51 0h2m10 0h2m20 0h2m24 0h2m48 0h2m37 0h2m5 0h2m18 0h2m5 0h2m53 0h2m10 0h2m12 0h2m22 0h2m3 0h2m33 0h2m46 0h2m3 0h2m0 0h2m11 0h2m3 0h2m3 0h2m9 0h2m1 0h2m10 0h2m-1041 1h2m0 0h2m40 0h2m48 0h2m5 0h2m51 0h2m39 0h2m7 0h2m-1 0h2m31 0h2m39 0h2m6 0h2m3 0h2m14 0h2m11 0h2m0 0h2m15 0h2m-1 0h2m-1 0h2m19 0h2m1 0h2m7 0h2m1 0h2m4 0h2m42 0h2m27 0h2m3 0h2m9 0h2m46 0h2m7 0h2m15 0h2m21 0h2m18 0h2m31 0h2m8 0h2m0 0h2m11 0h2m9 0h2m83 0h2m24 0h2m4 0h2m116 0h2m12 0h2m70 0h2m2 0h2m11 0h2m0 0h2m4 0h2m-1 0h2m1 0h2m0 0h2m6 0h2m-1 0h2m0 0h2m-980 1h2m56 0h2m12 0h2m7 0h2m5 0h2m2 0h2m46 0h2m14 0h2m9 0h2m35 0h2m18 0h2m3 0h2m23 0h2m28 0h2m15 0h2m1 0h2m15 0h2m28 0h2m2 0h2m0 0h2m6 0h2m8 0h2m45 0h2m36 0h2m9 0h2m17 0h2m25 0h2m15 0h2m13 0h2m30 0h2m3 0h2m2 0h2m1 0h2m31 0h2m32 0h2m-1 0h2m33 0h2m5 0h2m29 0h2m5 0h2m62 0h2m41 0h2m56 0h2m43 0h2m29 0h2m-983 1h2m0 0h2m27 0h2m43 0h2m45 0h2m8 0h2m11 0h2m28 0h2m7 0h2m1 0h2m16 0h2m3 0h2m1 0h2m48 0h2m23 0h2m21 0h2m-1 0h2m26 0h2m1 0h2m41 0h2m54 0h2m29 0h2m-1 0h2m21 0h2m14 0h2m22 0h2m3 0h2m65 0h2m24 0h2m28 0h2m2 0h2m70 0h2m27 0h2m76 0h2m-1 0h2m-1 0h2m89 0h2m-917 1h2m82 0h2m21 0h2m29 0h2m1 0h2m8 0h2m9 0h2m1 0h2m9 0h2m35 0h2m5 0h2m13 0h2m11 0h2m1 0h2m8 0h2m5 0h2m-1 0h2m12 0h2m-1 0h2m-1 0h2m-1 0h2m6 0h2m7 0h2m3 0h2m3 0h2m5 0h2m7 0h2m30 0h2m2 0h2m8 0h2m9 0h2m38 0h2m3 0h2m0 0h2m15 0h2m10 0h2m1 0h2m7 0h2m31 0h2m22 0h2m4 0h2m11 0h2m49 0h2m6 0h2m15 0h2m10 0h2m33 0h2m4 0h2m19 0h2m34 0h2m11 0h2m2 0h2m22 0h2m22 0h2m8 0h2m21 0h2m10 0h2m56 0h2m18 0h2m67 0h2m10 0h2m17 0h2m10 0h2m-1109 1h2m43 0h2m37 0h2m3 0h2m23 0h2m1 0h2m13 0h2m16 0h2m8 0h2m34 0h2m55 0h2m14 0h2m3 0h2m6 0h2m9 0h2m32 0h2m15 0h2m15 0h2m17 0h2m-1 0h2m26 0h2m10 0h2m54 0h2m5 0h2m4 0h2m17 0h2m8 0h2m20 0h2m16 0h2m54 0h2m11 0h2m17 0h2m0 0h2m50 0h2m10 0h2m66 0h2m1 0h2m11 0h2m31 0h2m1 0h2m12 0h2m4 0h2m32 0h2m34 0h2m111 0h2m-1036 1h2m41 0h2m-1 0h2m62 0h2m59 0h2m0 0h2m10 0h2m20 0h2m16 0h2m14 0h2m36 0h2m17 0h2m0 0h2m50 0h2m13 0h2m9 0h2m25 0h2m48 0h2m14 0h2m46 0h2m53 0h2m19 0h2m10 0h2m11 0h2m7 0h2m5 0h2m31 0h2m18 0h2m7 0h2m21 0h2m7 0h2m129 0h2m125 0h2m1 0h2m10 0h2m8 0h2m22 0h2m-1041 1h2m-1 0h2m92 0h2m4 0h2m2 0h2m25 0h2m35 0h2m13 0h2m4 0h2m12 0h2m45 0h2m8 0h2m1 0h2m0 0h2m22 0h2m21 0h2m15 0h2m18 0h2m11 0h2m5 0h2m28 0h2m18 0h2m4 0h2m4 0h2m-1 0h2m27 0h2m3 0h2m25 0h2m21 0h2m0 0h2m8 0h2m37 0h2m31 0h2m23 0h2m67 0h2m11 0h2m15 0h2m19 0h2m24 0h2m112 0h2m0 0h2m132 0h2m12 0h2m20 0h2m-1057 1h2m-1 0h2m40 0h2m55 0h2m11 0h2m48 0h2m20 0h2m42 0h2m3 0h2m10 0h2m10 0h2m2 0h2m10 0h2m12 0h2m12 0h2m9 0h2m8 0h2m2 0h2m6 0h2m23 0h2m16 0h2m83 0h2m15 0h2m17 0h2m73 0h2m16 0h2m7 0h2m6 0h2m0 0h2m4 0h2m44 0h2m31 0h2m6 0h2m21 0h2m8 0h2m85 0h2m70 0h2m21 0h2m35 0h2m17 0h2m12 0h2m5 0h2m78 0h2m-1079 1h2m-1 0h2m-1 0h2m40 0h2m1 0h2m86 0h2m46 0h2m9 0h2m3 0h2m2 0h2m4 0h2m15 0h2m14 0h2m49 0h2m3 0h2m61 0h2m3 0h2m0 0h2m12 0h2m18 0h2m17 0h2m17 0h2m0 0h2m25 0h2m8 0h2m68 0h2m72 0h2m10 0h2m25 0h2m21 0h2m1 0h2m10 0h2m1 0h2m7 0h2m33 0h2m-1 0h2m3 0h2m39 0h2m16 0h2m3 0h2m11 0h2m24 0h2m4 0h2m16 0h2m0 0h2m47 0h2m51 0h2m49 0h2m-1039 1h2m2 0h2m-1 0h2m55 0h2m14 0h2m59 0h2m20 0h2m10 0h2m32 0h2m6 0h2m2 0h2m2 0h2m28 0h2m26 0h2m6 0h2m6 0h2m10 0h2m33 0h2m0 0h2m3 0h2m3 0h2m1 0h2m9 0h2m10 0h2m22 0h2m6 0h2m34 0h2m77 0h2m34 0h2m18 0h2m2 0h2m32 0h2m14 0h2m4 0h2m29 0h2m16 0h2m27 0h2m2 0h2m10 0h2m4 0h2m62 0h2m2 0h2m10 0h2m27 0h2m142 0h2m69 0h2m-996 1h2m18 0h2m31 0h2m34 0h2m14 0h2m56 0h2m14 0h2m13 0h2m2 0h2m8 0h2m53 0h2m12 0h2m2 0h2m-1 0h2m7 0h2m1 0h2m4 0h2m8 0h2m-1 0h2m3 0h2m18 0h2m5 0h2m13 0h2m1 0h2m142 0h2m8 0h2m54 0h2m9 0h2m-1 0h2m57 0h2m1 0h2m0 0h2m9 0h2m0 0h2m8 0h2m30 0h2m109 0h2m0 0h2m17 0h2m89 0h2m23 0h2m42 0h2m-1068 1h2m-1 0h2m38 0h2m3 0h2m1 0h2m9 0h2m7 0h2m15 0h2m14 0h2m7 0h2m50 0h2m12 0h2m12 0h2m6 0h2m13 0h2m8 0h2m12 0h2m32 0h2m11 0h2m9 0h2m31 0h2m6 0h2m13 0h2m0 0h2m10 0h2m8 0h2m2 0h2m27 0h2m5 0h2m1 0h2m12 0h2m2 0h2m7 0h2m4 0h2m1 0h2m53 0h2m31 0h2m63 0h2m6 0h2m10 0h2m2 0h2m62 0h2m22 0h2m26 0h2m0 0h2m4 0h2m4 0h2m1 0h2m7 0h2m37 0h2m98 0h2m26 0h2m2 0h2m114 0h2m18 0h2m17 0h2m14 0h2m-1116 1h2m43 0h2m-1 0h2m4 0h2m75 0h2m96 0h2m15 0h2m2 0h2m9 0h2m0 0h2m36 0h2m9 0h2m14 0h2m16 0h2m8 0h2m9 0h2m5 0h2m0 0h2m16 0h2m43 0h2m6 0h2m-1 0h2m31 0h2m115 0h2m13 0h2m-1 0h2m-1 0h2m1 0h2m31 0h2m46 0h2m10 0h2m11 0h2m-1 0h2m33 0h2m19 0h2m0 0h2m21 0h2m11 0h2m20 0h2m2 0h2m18 0h2m11 0h2m4 0h2m88 0h2m43 0h2m1 0h2m19 0h2m8 0h2m68 0h2m-1125 1h2m-1 0h2m10 0h2m40 0h2m0 0h2m88 0h2m4 0h2m32 0h2m7 0h2m8 0h2m9 0h2m14 0h2m33 0h2m48 0h2m24 0h2m28 0h2m17 0h2m7 0h2m0 0h2m18 0h2m18 0h2m65 0h2m14 0h2m7 0h2m19 0h2m45 0h2m14 0h2m3 0h2m95 0h2m21 0h2m1 0h2m19 0h2m22 0h2m29 0h2m6 0h2m194 0h2m-1030 1h2m-1 0h2m-1 0h2m-1 0h2m33 0h2m2 0h2m18 0h2m33 0h2m24 0h2m21 0h2m8 0h2m25 0h2m54 0h2m10 0h2m2 0h2m18 0h2m5 0h2m25 0h2m15 0h2m30 0h2m-1 0h2m15 0h2m73 0h2m0 0h2m34 0h2m102 0h2m14 0h2m3 0h2m54 0h2m16 0h2m3 0h2m40 0h2m1 0h2m47 0h2m8 0h2m11 0h2m61 0h2m0 0h2m12 0h2m105 0h2m29 0h2m9 0h2m8 0h2m-1047 1h2m25 0h2m36 0h2m62 0h2m38 0h2m46 0h2m6 0h2m6 0h2m32 0h2m21 0h2m6 0h2m37 0h2m2 0h2m28 0h2m45 0h2m6 0h2m10 0h2m6 0h2m7 0h2m7 0h2m9 0h2m-1 0h2m42 0h2m77 0h2m16 0h2m17 0h2m9 0h2m0 0h2m92 0h2m18 0h2m57 0h2m3 0h2m32 0h2m47 0h2m23 0h2m55 0h2m17 0h2m-939 1h2m58 0h2m15 0h2m23 0h2m15 0h2m2 0h2m7 0h2m41 0h2m59 0h2m36 0h2m14 0h2m5 0h2m21 0h2m45 0h2m9 0h2m5 0h2m51 0h2m46 0h2m19 0h2m13 0h2m2 0h2m3 0h2m8 0h2m38 0h2m1 0h2m41 0h2m0 0h2m11 0h2m12 0h2m15 0h2m47 0h2m35 0h2m10 0h2m2 0h2m10 0h2m31 0h2m34 0h2m9 0h2m30 0h2m112 0h2m-1126 1h2m34 0h2m44 0h2m52 0h2m24 0h2m60 0h2m19 0h2m12 0h2m6 0h2m4 0h2m5 0h2m11 0h2m2 0h2m52 0h2m12 0h2m13 0h2m29 0h2m3 0h2m10 0h2m7 0h2m41 0h2m6 0h2m-1 0h2m26 0h2m25 0h2m16 0h2m1 0h2m68 0h2m0 0h2m82 0h2m5 0h2m5 0h2m12 0h2m23 0h2m8 0h2m8 0h2m4 0h2m8 0h2m-1 0h2m60 0h2m2 0h2m15 0h2m3 0h2m0 0h2m0 0h2m30 0h2m3 0h2m31 0h2m33 0h2m10 0h2m4 0h2m14 0h2m19 0h2m21 0h2m-1095 1h2m2 0h2m52 0h2m6 0h2m7 0h2m76 0h2m51 0h2m16 0h2m19 0h2m9 0h2m30 0h2m7 0h2m18 0h2m2 0h2m25 0h2m13 0h2m6 0h2m5 0h2m8 0h2m6 0h2m5 0h2m1 0h2m98 0h2m24 0h2m2 0h2m16 0h2m91 0h2m19 0h2m24 0h2m17 0h2m4 0h2m25 0h2m4 0h2m0 0h2m29 0h2m8 0h2m23 0h2m3 0h2m23 0h2m7 0h2m1 0h2m183 0h2m8 0h2m9 0h2m-1061 1h2m8 0h2m23 0h2m-1 0h2m19 0h2m56 0h2m40 0h2m31 0h2m29 0h2m4 0h2m13 0h2m25 0h2m33 0h2m2 0h2m48 0h2m31 0h2m1 0h2m8 0h2m26 0h2m-1 0h2m11 0h2m20 0h2m18 0h2m4 0h2m0 0h2m56 0h2m63 0h2m7 0h2m6 0h2m4 0h2m15 0h2m32 0h2m39 0h2m0 0h2m7 0h2m-1 0h2m22 0h2m9 0h2m13 0h2m10 0h2m26 0h2m42 0h2m4 0h2m2 0h2m2 0h2m40 0h2m50 0h2m27 0h2m19 0h2m27 0h2m2 0h2m3 0h2m43 0h2m-1088 1h2m8 0h2m12 0h2m53 0h2m12 0h2m5 0h2m17 0h2m35 0h2m8 0h2m15 0h2m14 0h2m24 0h2m3 0h2m12 0h2m5 0h2m9 0h2m15 0h2m10 0h2m23 0h2m27 0h2m13 0h2m-1 0h2m21 0h2m58 0h2m9 0h2m10 0h2m12 0h2m5 0h2m7 0h2m24 0h2m30 0h2m38 0h2m0 0h2m34 0h2m7 0h2m1 0h2m21 0h2m36 0h2m10 0h2m15 0h2m-1 0h2m-1 0h2m4 0h2m28 0h2m2 0h2m0 0h2m43 0h2m4 0h2m0 0h2m25 0h2m0 0h2m-1 0h2m29 0h2m33 0h2m12 0h2m69 0h2m3 0h2m9 0h2m13 0h2m2 0h2m-1102 1h2m5 0h2m4 0h2m37 0h2m58 0h2m88 0h2m39 0h2m19 0h2m22 0h2m20 0h2m4 0h2m26 0h2m1 0h2m12 0h2m1 0h2m12 0h2m11 0h2m21 0h2m5 0h2m5 0h2m64 0h2m11 0h2m88 0h2m21 0h2m22 0h2m7 0h2m15 0h2m11 0h2m16 0h2m31 0h2m26 0h2m19 0h2m3 0h2m7 0h2m3 0h2m0 0h2m2 0h2m6 0h2m49 0h2m36 0h2m30 0h2m21 0h2m7 0h2m16 0h2m-988 1h2m7 0h2m3 0h2m35 0h2m48 0h2m35 0h2m52 0h2m34 0h2m21 0h2m6 0h2m8 0h2m1 0h2m17 0h2m10 0h2m30 0h2m71 0h2m44 0h2m0 0h2m5 0h2m43 0h2m3 0h2m29 0h2m38 0h2m64 0h2m54 0h2m3 0h2m26 0h2m18 0h2m5 0h2m4 0h2m4 0h2m13 0h2m0 0h2m3 0h2m31 0h2m52 0h2m21 0h2m51 0h2m9 0h2m23 0h2m23 0h2m82 0h2m17 0h2m7 0h2m-1086 1h2m-1 0h2m0 0h2m59 0h2m47 0h2m20 0h2m3 0h2m5 0h2m48 0h2m9 0h2m17 0h2m7 0h2m21 0h2m28 0h2m2 0h2m76 0h2m19 0h2m47 0h2m18 0h2m41 0h2m20 0h2m41 0h2m44 0h2m6 0h2m28 0h2m25 0h2m29 0h2m14 0h2m26 0h2m2 0h2m33 0h2m14 0h2m48 0h2m10 0h2m47 0h2m3 0h2m41 0h2m36 0h2m3 0h2m66 0h2m-1125 1h2m48 0h2m34 0h2m51 0h2m9 0h2m16 0h2m29 0h2m32 0h2m2 0h2m4 0h2m1 0h2m18 0h2m8 0h2m9 0h2m47 0h2m0 0h2m13 0h2m-1 0h2m41 0h2m18 0h2m11 0h2m74 0h2m56 0h2m42 0h2m12 0h2m3 0h2m9 0h2m8 0h2m62 0h2m3 0h2m26 0h2m48 0h2m52 0h2m0 0h2m1 0h2m40 0h2m1 0h2m11 0h2m4 0h2m12 0h2m50 0h2m67 0h2m57 0h2m-968 1h2m109 0h2m2 0h2m-1 0h2m20 0h2m24 0h2m8 0h2m13 0h2m9 0h2m12 0h2m10 0h2m4 0h2m33 0h2m11 0h2m25 0h2m31 0h2m3 0h2m27 0h2m69 0h2m37 0h2m2 0h2m34 0h2m27 0h2m48 0h2m7 0h2m18 0h2m7 0h2m36 0h2m16 0h2m17 0h2m10 0h2m59 0h2m1 0h2m39 0h2m10 0h2m12 0h2m21 0h2m33 0h2m0 0h2m-1076 1h2m91 0h2m50 0h2m5 0h2m28 0h2m28 0h2m8 0h2m5 0h2m71 0h2m0 0h2m3 0h2m34 0h2m2 0h2m32 0h2m46 0h2m35 0h2m6 0h2m42 0h2m9 0h2m17 0h2m31 0h2m5 0h2m17 0h2m22 0h2m122 0h2m18 0h2m3 0h2m-1 0h2m1 0h2m46 0h2m32 0h2m20 0h2m8 0h2m15 0h2m39 0h2m0 0h2m4 0h2m83 0h2m14 0h2m36 0h2m2 0h2m-1130 1h2m19 0h2m-1 0h2m47 0h2m39 0h2m2 0h2m83 0h2m31 0h2m50 0h2m20 0h2m0 0h2m3 0h2m13 0h2m9 0h2m68 0h2m7 0h2m8 0h2m16 0h2m17 0h2m61 0h2m8 0h2m5 0h2m18 0h2m2 0h2m7 0h2m64 0h2m5 0h2m4 0h2m85 0h2m11 0h2m1 0h2m38 0h2m38 0h2m57 0h2m5 0h2m25 0h2m51 0h2m36 0h2m53 0h2m11 0h2m3 0h2m1 0h2m5 0h2m14 0h2m-1114 1h2m111 0h2m67 0h2m17 0h2m45 0h2m-1 0h2m17 0h2m1 0h2m13 0h2m141 0h2m9 0h2m0 0h2m47 0h2m47 0h2m20 0h2m62 0h2m34 0h2m95 0h2m6 0h2m23 0h2m12 0h2m24 0h2m29 0h2m87 0h2m52 0h2m13 0h2m5 0h2m47 0h2m7 0h2m7 0h2m-837 1h2m20 0h2m28 0h2m9 0h2m26 0h2m-1 0h2m94 0h2m131 0h2m184 0h2m6 0h2m19 0h2m11 0h2m60 0h2m56 0h2m64 0h2m3 0h2m141 0h2m-999 1h2m52 0h2m8 0h2m4 0h2m61 0h2m27 0h2m6 0h2m34 0h2m69 0h2m36 0h2m67 0h2m15 0h2m90 0h2m78 0h2m58 0h2m59 0h2m5 0h2m19 0h2m14 0h2m14 0h2m0 0h2m8 0h2m27 0h2m2 0h2m35 0h2m27 0h2m89 0h2m-1099 1h2m159 0h2m6 0h2m95 0h2m9 0h2m18 0h2m1 0h2m7 0h2m53 0h2m2 0h2m35 0h2m36 0h2m89 0h2m65 0h2m30 0h2m1 0h2m4 0h2m26 0h2m7 0h2m94 0h2m5 0h2m3 0h2m118 0h2m92 0h2m148 0h2m-1177 1h2m82 0h2m61 0h2m24 0h2m6 0h2m84 0h2m48 0h2m25 0h2m6 0h2m15 0h2m-1 0h2m30 0h2m23 0h2m3 0h2m10 0h2m23 0h2m6 0h2m3 0h2m32 0h2m6 0h2m21 0h2m79 0h2m39 0h2m43 0h2m22 0h2m5 0h2m32 0h2m10 0h2m10 0h2m70 0h2m27 0h2m21 0h2m23 0h2m7 0h2m2 0h2m5 0h2m24 0h2m10 0h2m79 0h2m7 0h2m2 0h2m18 0h2m-1132 1h2m10 0h2m2 0h2m125 0h2m30 0h2m47 0h2m8 0h2m16 0h2m0 0h2m30 0h2m23 0h2m44 0h2m18 0h2m-1 0h2m146 0h2m131 0h2m19 0h2m57 0h2m6 0h2m1 0h2m16 0h2m37 0h2m6 0h2m65 0h2m4 0h2m10 0h2m25 0h2m10 0h2m21 0h2m11 0h2m30 0h2m32 0h2m-1024 1h2m126 0h2m118 0h2m32 0h2m0 0h2m38 0h2m2 0h2m18 0h2m3 0h2m15 0h2m28 0h2m28 0h2m13 0h2m28 0h2m59 0h2m19 0h2m11 0h2m18 0h2m11 0h2m105 0h2m59 0h2m17 0h2m2 0h2m9 0h2m10 0h2m109 0h2m31 0h2m35 0h2m35 0h2m60 0h2m41 0h2m-1136 1h2m169 0h2m14 0h2m27 0h2m87 0h2m8 0h2m4 0h2m16 0h2m7 0h2m1 0h2m69 0h2m26 0h2m4 0h2m25 0h2m16 0h2m31 0h2m73 0h2m20 0h2m70 0h2m48 0h2m28 0h2m2 0h2m32 0h2m53 0h2m40 0h2m38 0h2m84 0h2m25 0h2m66 0h2m-1035 1h2m99 0h2m24 0h2m10 0h2m10 0h2m16 0h2m4 0h2m29 0h2m18 0h2m17 0h2m-1 0h2m5 0h2m24 0h2m11 0h2m11 0h2m27 0h2m45 0h2m35 0h2m35 0h2m39 0h2m31 0h2m92 0h2m5 0h2m21 0h2m12 0h2m31 0h2m120 0h2m16 0h2m41 0h2m24 0h2m-965 1h2m58 0h2m32 0h2m33 0h2m45 0h2m2 0h2m35 0h2m18 0h2m5 0h2m3 0h2m51 0h2m33 0h2m11 0h2m26 0h2m10 0h2m2 0h2m95 0h2m62 0h2m9 0h2m8 0h2m0 0h2m23 0h2m88 0h2m35 0h2m8 0h2m20 0h2m96 0h2m111 0h2m34 0h2m22 0h2m18 0h2m-1 0h2m-1075 1h2m123 0h2m34 0h2m65 0h2m23 0h2m40 0h2m6 0h2m14 0h2m14 0h2m35 0h2m55 0h2m204 0h2m29 0h2m24 0h2m-1 0h2m1 0h2m8 0h2m25 0h2m12 0h2m7 0h2m95 0h2m64 0h2m63 0h2m5 0h2m6 0h2m105 0h2m-907 1h2m14 0h2m21 0h2m66 0h2m9 0h2m5 0h2m197 0h2m59 0h2m1 0h2m5 0h2m12 0h2m37 0h2m42 0h2m-1 0h2m37 0h2m19 0h2m14 0h2m97 0h2m9 0h2m34 0h2m7 0h2m89 0h2m47 0h2m23 0h2m-1035 1h2m47 0h2m107 0h2m14 0h2m13 0h2m9 0h2m31 0h2m15 0h2m21 0h2m15 0h2m42 0h2m96 0h2m41 0h2m11 0h2m117 0h2m29 0h2m0 0h2m-1 0h2m21 0h2m26 0h2m2 0h2m14 0h2m41 0h2m10 0h2m17 0h2m22 0h2m9 0h2m4 0h2m71 0h2m42 0h2m-1095 1h2m9 0h2m109 0h2m15 0h2m17 0h2m84 0h2m80 0h2m15 0h2m11 0h2m21 0h2m25 0h2m3 0h2m-1 0h2m46 0h2m57 0h2m2 0h2m1 0h2m71 0h2m1 0h2m52 0h2m21 0h2m0 0h2m68 0h2m28 0h2m46 0h2m18 0h2m14 0h2m60 0h2m126 0h2m22 0h2m2 0h2m63 0h2m18 0h2m1 0h2m24 0h2m0 0h2m-1194 1h2m133 0h2m32 0h2m14 0h2m62 0h2m61 0h2m26 0h2m16 0h2m46 0h2m85 0h2m53 0h2m50 0h2m100 0h2m14 0h2m49 0h2m55 0h2m5 0h2m10 0h2m16 0h2m20 0h2m21 0h2m74 0h2m7 0h2m29 0h2m25 0h2m54 0h2m-1106 1h2m42 0h2m25 0h2m31 0h2m178 0h2m1 0h2m1 0h2m9 0h2m1 0h2m0 0h2m90 0h2m16 0h2m9 0h2m4 0h2m-1 0h2m179 0h2m40 0h2m25 0h2m156 0h2m22 0h2m38 0h2m39 0h2m34 0h2m5 0h2m20 0h2m18 0h2m3 0h2m16 0h2m-1071 1h2m50 0h2m160 0h2m21 0h2m99 0h2m76 0h2m-1 0h2m0 0h2m223 0h2m4 0h2m7 0h2m99 0h2m44 0h2m77 0h2m92 0h2m203 0h2m-1183 1h2m168 0h2m17 0h2m12 0h2m50 0h2m51 0h2m18 0h2m0 0h2m5 0h2m33 0h2m4 0h2m34 0h2m1 0h2m2 0h2m120 0h2m45 0h2m2 0h2m55 0h2m88 0h2m19 0h2m106 0h2m-1 0h2m59 0h2m99 0h2m9 0h2m6 0h2m96 0h2m-1150 1h2m-1 0h2m131 0h2m15 0h2m23 0h2m43 0h2m7 0h2m122 0h2m57 0h2m-1 0h2m44 0h2m147 0h2m71 0h2m64 0h2m22 0h2m7 0h2m14 0h2m15 0h2m11 0h2m26 0h2m15 0h2m20 0h2m66 0h2m3 0h2m27 0h2m2 0h2m172 0h2m-1190 1h2m4 0h2m138 0h2m21 0h2m42 0h2m29 0h2m19 0h2m48 0h2m157 0h2m213 0h2m114 0h2m45 0h2m4 0h2m1 0h2m16 0h2m29 0h2m17 0h2m72 0h2m66 0h2m66 0h2m55 0h2m-1200 1h2m6 0h2m264 0h2m48 0h2m31 0h2m10 0h2m22 0h2m15 0h2m0 0h2m16 0h2m221 0h2m56 0h2m21 0h2m27 0h2m44 0h2m90 0h2m40 0h2m47 0h2m30 0h2m41 0h2m9 0h2m9 0h2m4 0h2m50 0h2m38 0h2m-1188 1h2m3 0h2m255 0h2m11 0h2m148 0h2m-1 0h2m1 0h2m21 0h2m70 0h2m122 0h2m28 0h2m26 0h2m126 0h2m5 0h2m59 0h2m93 0h2m29 0h2m0 0h2m5 0h2m4 0h2m0 0h2m8 0h2m1 0h2m33 0h2m26 0h2m67 0h2m7 0h2m15 0h2m-1225 1h2m137 0h2m4 0h2m73 0h2m98 0h2m101 0h2m10 0h2m31 0h2m7 0h2m84 0h2m53 0h2m44 0h2m8 0h2m139 0h2m12 0h2m5 0h2m11 0h2m13 0h2m9 0h2m102 0h2m1 0h2m11 0h2m0 0h2m4 0h2m24 0h2m16 0h2m2 0h2m7 0h2m112 0h2m8 0h2m10 0h2m1 0h2m3 0h2m24 0h2m-1267 1h2m19 0h2m6 0h2m16 0h2m154 0h2m26 0h2m195 0h2m31 0h2m4 0h2m-1 0h2m1 0h2m39 0h2m0 0h2m-1 0h2m12 0h2m33 0h2m84 0h2m79 0h2m114 0h2m102 0h2m63 0h2m20 0h2m32 0h2m132 0h2m40 0h2m-1247 1h2m-1 0h2m18 0h2m11 0h2m77 0h2m4 0h2m11 0h2m125 0h2m103 0h2m40 0h2m7 0h2m51 0h2m42 0h2m2 0h2m75 0h2m196 0h2m75 0h2m-1 0h2m45 0h2m24 0h2m37 0h2m51 0h2m38 0h2m2 0h2m153 0h2m-1305 1h2m62 0h2m18 0h2m4 0h2m7 0h2m340 0h2m2 0h2m8 0h2m56 0h2m22 0h2m-1 0h2m41 0h2m36 0h2m28 0h2m108 0h2m184 0h2m8 0h2m12 0h2m34 0h2m12 0h2m121 0h2m148 0h2m-1233 1h2m29 0h2m56 0h2m25 0h2m93 0h2m106 0h2m44 0h2m156 0h2m24 0h2m15 0h2m79 0h2m70 0h2m55 0h2m7 0h2m61 0h2m71 0h2m1 0h2m58 0h2m14 0h2m44 0h2m7 0h2m23 0h2m20 0h2m10 0h2m14 0h2m42 0h2m67 0h2m-1150 1h2m98 0h2m31 0h2m90 0h2m0 0h2m137 0h2m265 0h2m127 0h2m19 0h2m21 0h2m57 0h2m42 0h2m30 0h2m53 0h2m2 0h2m1 0h2m63 0h2m43 0h2m-1213 1h2m6 0h2m200 0h2m31 0h2m28 0h2m13 0h2m5 0h2m41 0h2m63 0h2m5 0h2m69 0h2m57 0h2m23 0h2m120 0h2m93 0h2m15 0h2m11 0h2m5 0h2m64 0h2m91 0h2m44 0h2m38 0h2m48 0h2m26 0h2m26 0h2m48 0h2m25 0h2m-1247 1h2m78 0h2m185 0h2m106 0h2m100 0h2m1 0h2m46 0h2m17 0h2m41 0h2m0 0h2m36 0h2m89 0h2m53 0h2m80 0h2m-1 0h2m13 0h2m36 0h2m49 0h2m66 0h2m40 0h2m51 0h2m28 0h2m17 0h2m56 0h2m-1060 1h2m37 0h2m90 0h2m2 0h2m52 0h2m39 0h2m4 0h2m5 0h2m22 0h2m36 0h2m131 0h2m3 0h2m14 0h2m42 0h2m51 0h2m128 0h2m14 0h2m27 0h2m100 0h2m23 0h2m26 0h2m21 0h2m22 0h2m27 0h2m15 0h2m31 0h2m2 0h2m-1247 1h2m301 0h2m36 0h2m40 0h2m202 0h2m65 0h2m25 0h2m150 0h2m59 0h2m50 0h2m55 0h2m34 0h2m93 0h2m-910 1h2m61 0h2m86 0h2m23 0h2m17 0h2m109 0h2m48 0h2m11 0h2m72 0h2m126 0h2m57 0h2m56 0h2m0 0h2m15 0h2m8 0h2m37 0h2m13 0h2m21 0h2m52 0h2m0 0h2m0 0h2m31 0h2m51 0h2m3 0h2m78 0h2m11 0h2m45 0h2m-1127 1h2m143 0h2m97 0h2m11 0h2m5 0h2m-1 0h2m6 0h2m130 0h2m2 0h2m24 0h2m29 0h2m23 0h2m-1 0h2m20 0h2m3 0h2m85 0h2m23 0h2m190 0h2m22 0h2m16 0h2m27 0h2m4 0h2m10 0h2m57 0h2m8 0h2m23 0h2m75 0h2m30 0h2m15 0h2m-1330 1h2m170 0h2m229 0h2m39 0h2m48 0h2m47 0h2m-1 0h2m0 0h2m55 0h2m76 0h2m-1 0h2m-1 0h2m44 0h2m108 0h2m44 0h2m46 0h2m28 0h2m21 0h2m104 0h2m-1 0h2m31 0h2m23 0h2m100 0h2m13 0h2m51 0h2m-1321 1h2m291 0h2m224 0h2m21 0h2m-1 0h2m0 0h2m56 0h2m83 0h2m6 0h2m-1 0h2m182 0h2m141 0h2m49 0h2m12 0h2m129 0h2m5 0h2m30 0h2m47 0h2m15 0h2m-1322 1h2m121 0h2m276 0h2m135 0h2m92 0h2m51 0h2m1 0h2m197 0h2m20 0h2m13 0h2m84 0h2m68 0h2m-1 0h2m94 0h2m130 0h2m17 0h2m-1349 1h2m13 0h2m343 0h2m30 0h2m339 0h2m49 0h2m191 0h2m125 0h2m37 0h2m74 0h2m121 0h2m-1128 1h2m135 0h2m30 0h2m20 0h2m7 0h2m13 0h2m28 0h2m210 0h2m20 0h2m43 0h2m44 0h2m12 0h2m72 0h2m1 0h2m73 0h2m1 0h2m7 0h2m37 0h2m74 0h2m272 0h2m-1217 1h2m93 0h2m116 0h2m191 0h2m14 0h2m170 0h2m169 0h2m37 0h2m-1 0h2m48 0h2m23 0h2m38 0h2m228 0h2m9 0h2m25 0h2m-1057 1h2m195 0h2m88 0h2m16 0h2m157 0h2m117 0h2m14 0h2m71 0h2m64 0h2m83 0h2m120 0h2m78 0h2m40 0h2m-1329 1h2m12 0h2m319 0h2m14 0h2m50 0h2m27 0h2m106 0h2m192 0h2m197 0h2m3 0h2m116 0h2m27 0h2m10 0h2m25 0h2m57 0h2m7 0h2m36 0h2m118 0h2m-1352 1h2m10 0h2m141 0h2m359 0h2m93 0h2m38 0h2m20 0h2m99 0h2m61 0h2m114 0h2m143 0h2m52 0h2m2 0h2m174 0h2m3 0h2m-1346 1h2m18 0h2m-1 0h2m357 0h2m7 0h2m45 0h2m-1 0h2m333 0h2m166 0h2m139 0h2m20 0h2m26 0h2m37 0h2m41 0h2m120 0h2m-1237 1h2m204 0h2m33 0h2m111 0h2m21 0h2m11 0h2m113 0h2m86 0h2m44 0h2m283 0h2m27 0h2m102 0h2m20 0h2m38 0h2m21 0h2m10 0h2m-1235 1h2m371 0h2m110 0h2m34 0h2m14 0h2m219 0h2m50 0h2m33 0h2m59 0h2m7 0h2m69 0h2m130 0h2m27 0h2m67 0h2m11 0h2m-805 1h2m52 0h2m54 0h2m-1 0h2m186 0h2m228 0h2m16 0h2m7 0h2m41 0h2m38 0h2m74 0h2m2 0h2m13 0h2m100 0h2m19 0h2m34 0h2m-1241 1h2m246 0h2m24 0h2m30 0h2m230 0h2m305 0h2m31 0h2m135 0h2m36 0h2m0 0h2m99 0h2m9 0h2m52 0h2m28 0h2m23 0h2m-1083 1h2m82 0h2m67 0h2m48 0h2m10 0h2m33 0h2m-1 0h2m0 0h2m3 0h2m1 0h2m266 0h2m79 0h2m13 0h2m245 0h2m78 0h2m6 0h2m11 0h2m72 0h2m-1229 1h2m189 0h2m48 0h2m26 0h2m46 0h2m114 0h2m5 0h2m65 0h2m151 0h2m142 0h2m105 0h2m51 0h2m0 0h2m3 0h2m39 0h2m34 0h2m14 0h2m119 0h2m23 0h2m17 0h2m-845 1h2m-1 0h2m2 0h2m7 0h2m363 0h2m20 0h2m205 0h2m58 0h2m24 0h2m23 0h2m36 0h2m111 0h2m4 0h2m-1313 1h2m20 0h2m327 0h2m91 0h2m0 0h2m9 0h2m29 0h2m1 0h2m54 0h2m112 0h2m48 0h2m143 0h2m145 0h2m106 0h2m52 0h2m43 0h2m50 0h2m15 0h2m-1116 1h2m45 0h2m34 0h2m11 0h2m68 0h2m73 0h2m29 0h2m44 0h2m5 0h2m48 0h2m334 0h2m176 0h2m95 0h2m77 0h2m5 0h2m35 0h2m13 0h2m-1152 1h2m291 0h2m11 0h2m8 0h2m30 0h2m1 0h2m2 0h2m0 0h2m47 0h2m162 0h2m222 0h2m50 0h2m10 0h2m50 0h2m145 0h2m77 0h2m-1034 1h2m24 0h2m128 0h2m51 0h2m37 0h2m157 0h2m72 0h2m97 0h2m210 0h2m139 0h2m16 0h2m-1 0h2m-1065 1h2m172 0h2m56 0h2m27 0h2m91 0h2m11 0h2m13 0h2m3 0h2m99 0h2m253 0h2m319 0h2m39 0h2m35 0h2m-1063 1h2m81 0h2m22 0h2m131 0h2m196 0h2m128 0h2m85 0h2m-1 0h2m124 0h2m25 0h2m176 0h2m19 0h2m51 0h2m-1254 1h2m383 0h2m18 0h2m6 0h2m160 0h2m112 0h2m130 0h2m24 0h2m0 0h2m197 0h2m129 0h2m-1048 1h2m320 0h2m230 0h2m162 0h2m42 0h2m69 0h2m186 0h2m104 0h2m21 0h2m-1190 1h2m281 0h2m64 0h2m188 0h2m183 0h2m15 0h2m10 0h2m2 0h2m9 0h2m317 0h2m91 0h2m3 0h2m-1283 1h2m100 0h2m174 0h2m94 0h2m79 0h2m20 0h2m31 0h2m191 0h2m89 0h2m55 0h2m3 0h2m323 0h2m-1004 1h2m93 0h2m128 0h2m122 0h2m282 0h2m11 0h2m192 0h2m273 0h2m-1121 1h2m380 0h2m65 0h2m249 0h2m82 0h2m197 0h2m80 0h2m49 0h2m4 0h2m-1224 1h2m144 0h2m294 0h2m27 0h2m232 0h2m194 0h2m210 0h2m27 0h2m-1223 1h2m15 0h2m163 0h2m66 0h2m330 0h2m78 0h2m-1 0h2m51 0h2m156 0h2m36 0h2m112 0h2m191 0h2m10 0h2m3 0h2m40 0h2m-1231 1h2m49 0h2m157 0h2m68 0h2m327 0h2m109 0h2m78 0h2m299 0h2m40 0h2m74 0h2m36 0h2m2 0h2m-1369 1h2m5 0h2m343 0h2m168 0h2m472 0h2m10 0h2m98 0h2m9 0h2m107 0h2m19 0h2m90 0h2m15 0h2m-1198 1h2m33 0h2m33 0h2m11 0h2m41 0h2m266 0h2m130 0h2m26 0h2m130 0h2m79 0h2m0 0h2m61 0h2m29 0h2m34 0h2m24 0h2m114 0h2m47 0h2m8 0h2m-1256 1h2m702 0h2m215 0h2m-1 0h2m113 0h2m175 0h2m30 0h2m13 0h2m-1205 1h2m186 0h2m159 0h2m108 0h2m128 0h2m52 0h2m121 0h2m37 0h2m25 0h2m193 0h2m159 0h2m17 0h2m58 0h2m2 0h2m27 0h2m-1387 1h2m51 0h2m325 0h2m105 0h2m268 0h2m215 0h2m49 0h2m63 0h2m0 0h2m108 0h2m151 0h2m1 0h2m-1248 1h2m617 0h2m65 0h2m4 0h2m72 0h2m10 0h2m38 0h2m21 0h2m73 0h2m246 0h2m0 0h2m-1 0h2m73 0h2m18 0h2m-1086 1h2m183 0h2m252 0h2m225 0h2m274 0h2m45 0h2m3 0h2m0 0h2m-976 1h2m66 0h2m122 0h2m242 0h2m0 0h2m55 0h2m22 0h2m126 0h2m25 0h2m87 0h2m4 0h2m0 0h2m16 0h2m92 0h2m54 0h2m24 0h2m-1 0h2m0 0h2m35 0h2m-1191 1h2m0 0h2m296 0h2m99 0h2m88 0h2m100 0h2m3 0h2m-1 0h2m0 0h2m-1 0h2m313 0h2m30 0h2m1 0h2m5 0h2m1 0h2m2 0h2m41 0h2m140 0h2m0 0h2m84 0h2m8 0h2m-1329 1h2m46 0h2m327 0h2m86 0h2m202 0h2m0 0h2m215 0h2m107 0h2m23 0h2m1 0h2m-1 0h2m3 0h2m-1 0h2m6 0h2m-1 0h2m-1 0h2m1 0h2m181 0h2m-1 0h2m4 0h2m61 0h2m24 0h2m0 0h2m9 0h2m-1066 1h2m297 0h2m101 0h2m9 0h2m135 0h2m169 0h2m22 0h2m0 0h2m4 0h2m-1 0h2m-1 0h2m-1 0h2m0 0h2m0 0h2m-1 0h2m3 0h2m0 0h2m-1 0h2m-1 0h2m186 0h2m42 0h2m-1298 1h2m267 0h2m78 0h2m338 0h2m121 0h2m195 0h2m29 0h2m0 0h2m-1 0h2m0 0h2m0 0h2m2 0h2m8 0h2m0 0h2m0 0h2m160 0h2m111 0h2m-412 1h2m71 0h2m36 0h2m-1 0h2m0 0h2m0 0h2m-1 0h2m-1 0h2m0 0h2m6 0h2m0 0h2m26 0h2m178 0h2m75 0h2m-1291 1h2m33 0h2m317 0h2m2 0h2m246 0h2m24 0h2m350 0h2m2 0h2m2 0h2m1 0h2m7 0h2m156 0h2m48 0h2m11 0h2m15 0h2m-450 1h2m43 0h2m37 0h2m-1 0h2m113 0h2m184 0h2m11 0h2m5 0h2m-1142 1h2m538 0h2m31 0h2m77 0h2m206 0h2m66 0h2m2 0h2m47 0h2m127 0h2m120 0h2m6 0h2m-1225 1h2m158 0h2m396 0h2m244 0h2m317 0h2m32 0h2m73 0h2m-1040 1h2m266 0h2m90 0h2m224 0h2m43 0h2m170 0h2m138 0h2m-763 1h2m467 0h2m46 0h2m159 0h2m46 0h2m-1068 1h2m197 0h2m45 0h2m44 0h2m144 0h2m72 0h2m479 0h2m177 0h2m20 0h2m-681 1h2m115 0h2m105 0h2m434 0h2m11 0h2m7 0h2m-1077 1h2m204 0h2m51 0h2m128 0h2m62 0h2m-273 1h2m9 0h2m26 0h2m166 0h2m53 0h2m21 0h2m598 0h2m-1 0h2m-1311 1h2m260 0h2m46 0h2m40 0h2m490 0h2m29 0h2m130 0h2m307 0h2m-958 1h2m266 0h2m124 0h2m71 0h2m57 0h2m29 0h2m125 0h2m8 0h2m154 0h2m20 0h2m60 0h2m7 0h2m4 0h2m-1090 1h2m116 0h2m389 0h2m14 0h2m66 0h2m159 0h2m197 0h2m21 0h2m32 0h2m16 0h2m59 0h2m-1 0h2m6 0h2m-1246 1h2m245 0h2m215 0h2m-332 1h2m137 0h2m0 0h2m54 0h2m410 0h2m65 0h2m265 0h2m-984 1h2m247 0h2m243 0h2m517 0h2m105 0h2m21 0h2m-1054 1h2m147 0h2m546 0h2m-112 1h2m282 0h2m8 0h2m26 0h2m15 0h2m15 0h2m65 0h2m-930 1h2m102 0h2m42 0h2m550 0h2m236 0h2m28 0h2m-744 1h2m46 0h2m0 0h2m73 0h2m206 0h2m76 0h2m136 0h2m105 0h2m-609 1h2m615 0h2m18 0h2m52 0h2m-985 1h2m116 0h2m160 0h2m198 0h2m149 0h2m352 0h2m-1188 1h2m165 0h2m318 0h2m4 0h2m54 0h2m158 0h2m428 0h2m-1066 1h2m77 0h2m335 0h2m694 0h2m-686 1h2m614 0h2m-837 1h2m621 0h2m90 0h2m89 0h2m19 0h2m-414 1h2m45 0h2m247 0h2m74 0h2m-839 1h2m677 0h2m41 0h2m72 0h2m25 0h2m35 0h2m18 0h2m49 0h2m-689 1h2m1 0h2m93 0h2m239 0h2m40 0h2m88 0h2m132 0h2m63 0h2m-1048 1h2m243 0h2m124 0h2m258 0h2m-262 1h2m93 0h2m295 0h2m-680 1h2m49 0h2m264 0h2m196 0h2m224 0h2m60 0h2m136 0h2m-1166 1h2m6 0h2m84 0h2m409 0h2m373 0h2m126 0h2m13 0h2m200 0h2m-728 1h2m1 0h2m3 0h2m3 0h2m276 0h2m284 0h2m-394 1h2m260 0h2m5 0h2m2 0h2m-1115 1h2m660 0h2m199 0h2m130 0h2m108 0h2m147 0h2m86 0h2m-1299 1h2m135 0h2m182 0h2m287 0h2m443 0h2m4 0h2m2 0h2m103 0h2m21 0h2m-1207 1h2m623 0h2m8 0h2m430 0h2m7 0h2m-1 0h2m-1 0h2m212 0h2m15 0h2m55 0h2m-911 1h2m164 0h2m269 0h2m164 0h2m1 0h2m8 0h2m-1 0h2m79 0h2m205 0h2m-760 1h2m452 0h2m1 0h2m-1 0h2m1 0h2m2 0h2m-1 0h2m2 0h2m0 0h2m151 0h2m7 0h2m117 0h2m-1002 1h2m10 0h2m125 0h2m284 0h2m191 0h2m74 0h2m6 0h2m130 0h2m121 0h2m39 0h2m-1275 1h2m523 0h2m6 0h2m434 0h2m0 0h2m1 0h2m-1 0h2m1 0h2m3 0h2m0 0h2m-1 0h2m0 0h2m6 0h2m134 0h2m-840 1h2m343 0h2m27 0h2m247 0h2m52 0h2m1 0h2m0 0h2m-1 0h2m2 0h2m2 0h2m53 0h2m74 0h2m52 0h2m-771 1h2m113 0h2m370 0h2m74 0h2m5 0h2m2 0h2m5 0h2m218 0h2m-863 1h2m179 0h2m6 0h2m437 0h2m-1 0h2m7 0h2m-1 0h2m178 0h2m-797 1h2m432 0h2m16 0h2m34 0h2m122 0h2m22 0h2m157 0h2m-1 0h2m-645 1h2m4 0h2m191 0h2m249 0h2m0 0h2m1 0h2m-1 0h2m-656 1h2m404 0h2m181 0h2m6 0h2m47 0h2m5 0h2m82 0h2m103 0h2m-644 1h2m667 0h2m90 0h2m-690 1h2m-165 1h2m483 0h2m246 0h2m3 0h2m-866 1h2m569 0h2m296 0h2m66 0h2m33 0h2m-157 1h2m123 0h2m-896 1h2m845 0h2m-1257 1h2m593 0h2m55 0h2m81 0h2m149 0h2m350 0h2m0 0h2m113 0h2m-606 1h2m30 0h2m449 0h2m-1 0h2m-29 1h2m27 0h2m-1 0h2m11 0h2m20 0h2m0 0h2m-1286 1h2m1245 0h2m0 0h2m0 0h2m-1201 1h2m1192 0h2m29 0h2m27 0h2m-1321 1h2m517 0h2m714 0h2m32 0h2m-574 1h2m315 1h2m6 0h2m208 0h2m56 0h2m39 0h2m8 0h2m9 0h2m-444 1h2m46 0h2m295 0h2m11 0h2m98 0h2m-549 1h2m447 0h2m5 0h2m-615 1h2m404 0h2m-577 1h2m178 0h2m85 0h2m414 0h2m92 0h2m-360 1h2m22 0h2m111 0h2m329 0h2m-682 1h2m28 0h2m325 0h2m6 0h2m3 0h2m16 0h2m266 0h2m30 0h2m-493 1h2m147 0h2m2 0h2m7 0h2m6 0h2m-1 0h2m-1 0h2m-1 0h2m153 0h2m117 0h2m-654 1h2m30 0h2m108 0h2m183 0h2m31 0h2m1 0h2m1 0h2m1 0h2m0 0h2m0 0h2m-1 0h2m0 0h2m203 0h2m9 0h2m-345 1h2m101 0h2m4 0h2m2 0h2m-1 0h2m-1 0h2m2 0h2m0 0h2m-1 0h2m0 0h2m5 0h2m224 0h2m-255 1h2m-1 0h2m3 0h2m-1 0h2m0 0h2m0 0h2m0 0h2m3 0h2m4 0h2m174 0h2m-363 1h2m154 0h2m-1 0h2m5 0h2m0 0h2m0 0h2m9 0h2m-1 0h2m-1 0h2m-1 0h2m127 0h2m174 0h2m32 0h2m0 0h2m-1 0h2m-549 1h2m181 0h2m1 0h2m-1 0h2m2 0h2m0 0h2m203 0h2m2 0h2m-220 1h2m19 0h2m-198 1h2m174 0h2m254 0h2m33 0h2m-296 1h2m10 0h2m-393 1h2m275 0h2m376 1h2m90 0h2m-269 1h2m139 0h2m23 0h2m83 0h2m-1524 1h2m781 0h2m722 0h2m34 0h2m-737 1h2m686 0h2m42 0h2m-616 1h2m342 0h2m208 0h2m-299 1h2m7 1h2m-164 1h2m146 0h2m269 0h2m-274 1h2m0 0h2m343 0h2m-358 1h2m5 0h2m0 0h2m-1 0h2m-20 1h2m14 0h2m-1 0h2m3 0h2m-1 0h2m1 0h2m36 0h2m39 0h2m185 0h2m-299 1h2m12 0h2m1 0h2m0 0h2m-1 0h2m3 0h2m1 0h2m-1 0h2m207 0h2m-998 1h2m778 0h2m1 0h2m5 0h2m1 0h2m231 0h2m92 0h2m-347 1h2m5 0h2m0 0h2m0 0h2m258 0h2m59 0h2m27 0h2m-683 1h2m301 0h2m3 0h2m2 0h2m3 0h2m0 0h2m-1 0h2m3 0h2m-1 0h2m0 0h2m-1 0h2m0 0h2m70 0h2m-105 1h2m8 0h2m2 0h2m1 0h2m-1 0h2m-1 0h2m0 0h2m3 0h2m3 0h2m278 0h2m-738 1h2m333 0h2m83 0h2m12 0h2m4 0h2m1 0h2m0 0h2m-1 0h2m6 0h2m0 0h2m4 0h2m288 0h2m8 0h2m-805 1h2m19 0h2m368 0h2m64 0h2m4 0h2m7 0h2m-1 0h2m-1 0h2m6 0h2m-1 0h2m-1 0h2m0 0h2m0 0h2m0 0h2m337 0h2m-375 1h2m6 0h2m8 0h2m-1 0h2m-1 0h2m0 0h2m1 0h2m1 0h2m1 0h2m-1 0h2m0 0h2m-1 0h2m0 0h2m0 0h2m208 0h2m-1034 1h2m595 0h2m183 0h2m2 0h2m-1 0h2m6 0h2m-1 0h2m0 0h2m-1 0h2m6 0h2m0 0h2m-1 0h2m3 0h2m-1 0h2m-1 0h2m5 0h2m-785 1h2m739 0h2m-1 0h2m-1 0h2m3 0h2m-1 0h2m-1 0h2m2 0h2m-1 0h2m0 0h2m-1 0h2m-1 0h2m2 0h2m6 0h2m2 0h2m-827 1h2m792 0h2m2 0h2m0 0h2m0 0h2m5 0h2m0 0h2m2 0h2m-1 0h2m2 0h2m10 0h2m263 0h2m72 0h2m-1139 1h2m18 0h2m736 0h2m0 0h2m0 0h2m1 0h2m0 0h2m2 0h2m1 0h2m0 0h2m0 0h2m-1 0h2m0 0h2m-1 0h2m1 0h2m0 0h2m4 0h2m4 0h2m282 0h2m-331 1h2m1 0h2m3 0h2m8 0h2m0 0h2m7 0h2m2 0h2m252 0h2m109 0h2m-479 1h2m81 0h2m-1 0h2m1 0h2m-1 0h2m-1 0h2m-1 0h2m2 0h2m-1 0h2m-1 0h2m3 0h2m2 0h2m1 0h2m0 0h2m317 0h2m-1069 1h2m290 0h2m419 0h2m7 0h2m1 0h2m-1 0h2m-1 0h2m-1 0h2m0 0h2m2 0h2m1 0h2m0 0h2m0 0h2m-1 0h2m1 0h2m5 0h2m205 0h2m138 0h2m33 0h2m-1201 1h2m362 0h2m5 0h2m188 0h2m213 0h2m9 0h2m2 0h2m2 0h2m-1 0h2m0 0h2m2 0h2m0 0h2m-1 0h2m-1 0h2m-780 1h2m323 0h2m424 0h2m0 0h2m2 0h2m0 0h2m3 0h2m1 0h2m1 0h2m1 0h2m7 0h2m348 0h2m-798 1h2m425 0h2m10 0h2m-1 0h2m1 0h2m-812 1h2m0 0h2m50 0h2m412 0h2m314 0h2m1 0h2m0 0h2m7 0h2m-1 0h2m1 0h2m-1 0h2m1 0h2m0 0h2m-1 0h2m3 0h2m369 0h2m-1210 1h2m22 0h2m4 0h2m343 0h2m438 0h2m5 0h2m-1 0h2m-1 0h2m3 0h2m-1 0h2m44 0h2m175 0h2m-560 1h2m102 0h2m213 0h2m3 0h2m9 0h2m-765 1h2m421 0h2m6 0h2m1 0h2m319 0h2m-1 0h2m1 0h2m8 0h2m141 0h2m199 0h2m-1169 1h2m94 0h2m390 0h2m180 0h2m140 0h2m85 0h2m-882 1h2m35 0h2m429 0h2m202 0h2m113 0h2m-326 1h2m303 0h2m-314 1h2m5 0h2m-4 1h2m1 0h2m-111 1h2m97 0h2m5 0h2m4 0h2m-548 1h2m541 0h2m8 0h2m395 0h2m-523 1h2m108 0h2m558 0h2m147 0h2m15 0h2m37 0h2m-766 1h2m2 0h2m190 0h2m-307 1h2m108 0h2m447 0h2m-227 1h2m432 0h2m95 1h2m-111 1h2m13 0h2m61 0h2m0 0h2m-838 1h2m8 0h2m324 1h2m-349 1h2m812 0h2m41 0h2m-1273 1h2m850 0h2m92 2h2m85 0h2m239 1h2m-42 2h2m-29 1h2m58 0h2m-485 1h2m127 1h2m82 0h2m172 0h2m71 1h2m4 2h2m-170 2h2m19 0h2m143 0h2m-230 1h2m104 0h2m78 1h2m-178 1h2m26 2h2m228 1h2m-8 2h2m7 4h2m6 1h2m-158 1h2m160 0h2m-239 1h2m211 1h2m-95 1h2m8 0h2m68 1h2m-253 2h2m55 0h2m-593 3h2m364 4h2m0 0h2m415 0h2m16 0h2m-144 1h2m19 0h2m-624 2h2m527 0h2m204 0h2m-713 1h2m271 0h2m399 1h2m-775 1h2m796 0h2m-429 1h2m-389 1h2m53 0h2m42 0h2m642 0h2m53 0h2m-66 1h2m-673 1h2m33 0h2m67 0h2m1 0h2m213 0h2m242 0h2m177 0h2m-718 1h2m27 0h2m270 0h2m-315 1h2m94 2h2m-19 1h2m41 0h2m186 1h2m422 0h2m-753 1h2m22 0h2m95 0h2m211 0h2m281 0h2m133 0h2m-100 1h2m22 0h2m-18 1h2m-599 1h2m8 0h2m649 0h2m-684 1h2m571 1h2m-607 1h2m30 0h2m686 0h2m18 0h2m-705 1h2m-1 0h2m66 0h2m519 0h2m141 0h2m-189 1h2m36 0h2m116 0h2m-104 1h2m-565 1h2m478 0h2m97 0h2m-639 1h2m-25 2h2m734 0h2m17 0h2m-710 1h2m-36 2h2m46 1h2m-41 1h2m48 2h2m-6 2h2m-102 1h2m39 9h2m13 4h2"/>
<path fill="none" stroke="#ff00ff" stroke-width="1.8" stroke-linejoin="round" d="M509.2 411.8C511.4 412 517.3 412.7 522.6 412.8C527.9 412.9 536.2 412.5 541 412.2C545.8 411.9 547.9 409.9 551.3 410.8C554.7 411.7 558.5 416.7 561.6 417.6C564.7 418.5 566.7 418.2 569.8 416.3C572.9 414.4 576.6 408.4 580 406C583.4 403.6 586.5 403.4 590.3 401.6C594.1 399.8 598.9 396.2 602.6 395C606.4 393.8 608.7 394.2 612.8 394.4C616.9 394.6 622.1 395.7 627.2 396.4C632.3 397.1 638.5 397.6 643.6 398.5C648.7 399.4 653.9 401.7 658 401.6C662.1 401.5 664.8 398.4 668.2 397.9C671.6 397.4 675.1 397.6 678.5 398.5C681.9 399.4 686.4 403.2 688.8 403.2C691.2 403.2 689.5 399.2 692.9 398.5C696.3 397.8 704.9 399.5 709.3 399.1C713.7 398.8 717.6 397.9 719.5 396.4C721.4 394.9 720.2 390.3 720.6 390.3C721 390.3 720.4 394.9 721.6 396.4C722.8 397.9 725.7 399.9 727.7 399.1C729.8 398.3 731.7 393.2 733.9 391.7C736.1 390.2 739 392.6 741.1 390.3C743.2 388 743.3 379.9 746.2 378C749.1 376.1 754.7 378.9 758.5 378.6C762.3 378.4 765.4 376.3 768.8 376.5C772.2 376.7 775.2 378.7 779 380C782.8 381.3 787 381.6 791.3 384.1C795.6 386.6 800.9 395.2 804.7 395C808.5 394.8 810.3 384.4 813.9 383.1C817.5 381.8 822.1 387.7 826.2 387.2C830.3 386.7 834 381.8 838.5 380C843 378.2 849.1 376.4 852.9 376.5C856.7 376.6 858.2 379.4 861.1 380.6C864 381.9 866.9 384.9 870 384C873.1 383.1 876 376.5 880 375C884 373.5 889.7 374.2 894 375C898.3 375.8 902.3 380.7 906 380C909.7 379.3 912.7 373.3 916 371C919.3 368.7 923 365.3 926 366C929 366.7 930.3 374.7 934 375C937.7 375.3 944.7 368.3 948 368C951.3 367.7 952 373.5 954 373C956 372.5 957 366 960 365C963 364 968 367.5 972 367C976 366.5 979.7 362.7 984 362C988.3 361.3 994.7 362 998 363C1001.3 364 1002 369.2 1004 368C1006 366.8 1007.3 357.7 1010 356C1012.7 354.3 1017.3 357.7 1020 358C1022.7 358.3 1023.7 357.7 1026 358C1028.3 358.3 1032.7 359.7 1034 360"/>
<path fill="none" stroke="#ff00ff" stroke-width="1.8" stroke-linejoin="round" d="M800.6 357.4C801.8 358.3 805.9 361.2 807.8 362.6C809.7 364 810.2 365.1 811.9 365.6C813.6 366.1 815.6 366.3 818 365.6C820.4 364.9 824.3 361.7 826.2 361.5C828.1 361.3 828.6 365.9 829.3 364.2C830 362.5 829.3 353.7 830.3 351.3C831.3 348.9 834.1 348.3 835.5 349.8C836.9 351.3 837 357.7 838.5 360.5C840 363.3 842.3 366.3 844.7 366.7C847.1 367.1 850.5 363.7 852.9 363C855.3 362.3 857.3 363.5 859 362.6C860.7 361.7 861.4 357.8 863.1 357.4C864.8 357 867.2 359.8 869.3 360.5C871.4 361.2 874 362.4 875.5 361.5C877 360.6 877.4 355.2 878 355C878.6 354.8 877.8 359 879 360C880.2 361 883.5 361.7 885 361C886.5 360.3 887.5 356.8 888 356"/>
<path fill="none" stroke="#ff00ff" stroke-width="1.8" stroke-linejoin="round" d="M860 424.9C861 425.6 863 429.9 866 428.9C869 427.9 874.3 419.9 878 418.9C881.7 417.9 884.7 423.2 888 422.9C891.3 422.6 894 416.7 898 416.9C902 417.1 907.3 424.7 912 423.9C916.7 423.1 922 414.2 926 411.9C930 409.6 933 411.2 936 409.9C939 408.6 942 404.2 944 403.9C946 403.6 945.3 407.4 948 407.9C950.7 408.4 956.7 407.9 960 406.9C963.3 405.9 964.7 401.6 968 401.9C971.3 402.2 977 409.2 980 408.9C983 408.6 983.3 400.9 986 399.9C988.7 398.9 992.3 403.9 996 402.9C999.7 401.9 1004.7 394.6 1008 393.9C1011.3 393.2 1012.3 398.1 1016 398.9C1019.7 399.7 1026 398.7 1030 398.9C1034 399.1 1036.3 400.9 1040 399.9C1043.7 398.9 1048.7 393.9 1052 392.9C1055.3 391.9 1057.7 395.7 1060 393.9C1062.3 392.1 1064.7 382.4 1066 381.9C1067.3 381.4 1066.8 388.2 1068 390.9C1069.2 393.6 1070.3 399.6 1073 397.9C1075.7 396.2 1081.5 382.2 1084 380.9C1086.5 379.6 1086 389.7 1088 389.9C1090 390.1 1094 381.6 1096 381.9C1098 382.2 1098.7 392.7 1100 391.9C1101.3 391.1 1102 379.6 1104 376.9C1106 374.2 1109.3 374.4 1112 375.9C1114.7 377.4 1117.3 384.7 1120 385.9C1122.7 387.1 1124.7 385.1 1128 382.9C1131.3 380.7 1136.7 373.6 1140 372.9C1143.3 372.2 1145 379.4 1148 378.9C1151 378.4 1155.3 372.1 1158 369.9C1160.7 367.7 1161.7 365.4 1164 365.9C1166.3 366.4 1168.7 373.1 1172 372.9C1175.3 372.7 1181 365.4 1184 364.9C1187 364.4 1187.7 370.1 1190 369.9C1192.3 369.7 1195.7 363.6 1198 363.9C1200.3 364.2 1202 371.6 1204 371.9C1206 372.2 1208 367.6 1210 365.9C1212 364.2 1215 362.6 1216 361.9"/>
<path fill="none" stroke="#ff00ff" stroke-width="1.8" stroke-linejoin="round" d="M1303.5 447C1304.2 446.5 1306.1 444.4 1308 444.2C1309.9 444 1313.1 446.2 1314.8 445.9C1316.5 445.6 1317.7 444.2 1318.2 442.5C1318.7 440.8 1318 438.1 1317.6 435.7C1317.2 433.2 1315.4 428.4 1315.9 427.8C1316.4 427.2 1317.3 434.1 1320.5 432.4C1323.7 430.7 1331.5 421.1 1335.1 417.7C1338.7 414.3 1340.6 414.4 1341.9 412C1343.2 409.6 1342.4 405.2 1343 403C1343.6 400.8 1345.1 397.9 1345.3 398.5C1345.5 399.1 1345.2 405.6 1344.1 406.4C1343 407.1 1337.2 402.2 1338.5 403C1339.8 403.8 1349.4 408.8 1352 410.9C1354.6 413 1354.5 415.8 1354.3 415.4C1354.1 415 1350.7 411.7 1350.9 408.7C1351.1 405.7 1353.5 401.2 1355.4 397.4C1357.3 393.6 1360.7 388.6 1362.2 386.1C1363.7 383.6 1364.3 381.3 1364.5 382.2C1364.7 383.1 1361.6 390.5 1363.3 391.7C1365 392.9 1371.8 390.8 1374.6 389.5C1377.4 388.2 1378.7 384.4 1380.2 383.8C1381.7 383.2 1384 386.9 1383.6 386.1C1383.2 385.4 1378.6 381.4 1378 379.3C1377.4 377.2 1378.7 373.9 1380.2 373.7C1381.7 373.5 1384.4 377.2 1387 378.2C1389.6 379.2 1395.2 381.6 1396 379.9C1396.8 378.2 1391.1 369.6 1391.5 368C1391.9 366.4 1395.5 369.1 1398.3 370.3C1401.1 371.5 1406 375.2 1408.4 375.4C1410.9 375.6 1412.8 373.8 1413 371.4C1413.2 369 1409.8 361.9 1409.6 361.3C1409.4 360.7 1411.5 366.9 1411.9 368"/>
<path fill="none" stroke="#ff00ff" stroke-width="1.8" stroke-linejoin="round" d="M1670.7 380.4C1670 380.7 1667.6 380.3 1666.4 382C1665.2 383.7 1663.9 387.9 1663.6 390.7C1663.3 393.5 1663.9 397.4 1664.7 398.9C1665.5 400.3 1667.6 400.2 1668.5 399.4C1669.4 398.6 1669.3 395.4 1670.2 394C1671.1 392.6 1672.1 390.3 1674 391.3C1675.9 392.3 1679.4 398.8 1681.6 400C1683.8 401.2 1685.5 399 1687.1 398.4C1688.6 397.8 1690.2 395.5 1690.9 396.2C1691.6 396.9 1690.4 401.4 1691.4 402.7C1692.4 404 1695.2 403.8 1696.9 403.8C1698.6 403.8 1700 401.8 1701.3 402.7C1702.6 403.6 1703.2 409.1 1704.5 409.3C1705.8 409.5 1708 406.2 1708.9 403.8C1709.8 401.4 1710.2 396.8 1710 395.1C1709.8 393.4 1708 391.8 1707.8 393.4C1707.6 395 1707.6 402.1 1708.9 404.9C1710.2 407.7 1713.4 408 1715.4 410.4C1717.4 412.8 1719.1 417.3 1720.9 419.1C1722.7 420.9 1724.3 421.7 1726.3 421.3C1728.3 420.9 1730.9 419.8 1732.9 416.9C1734.9 414 1737.6 406.9 1738.3 403.8C1739 400.7 1736.9 398.8 1737.3 398.4C1737.7 398 1740.3 400.3 1740.5 401.6C1740.7 402.9 1737 402.4 1738.3 406C1739.6 409.6 1745.5 420.7 1748.2 423.4C1750.9 426.1 1754.2 424.4 1754.7 422.4C1755.2 420.4 1751.2 413.6 1751.4 411.4C1751.6 409.2 1754.7 408.6 1755.8 409.3C1756.9 410 1756.7 414.7 1758 415.8C1759.3 416.9 1761.6 416.9 1763.4 415.8C1765.2 414.7 1768.2 409.7 1768.9 409.3C1769.6 408.9 1767.2 409.4 1767.8 413.6C1768.3 417.8 1770.8 430.8 1772.2 434.4C1773.7 437.9 1773.6 435.3 1776.5 434.9C1779.4 434.5 1786.1 433.8 1789.6 432.2C1793 430.6 1795.4 428 1797.2 425.6C1799 423.2 1800.5 418.2 1800.5 418C1800.5 417.8 1797 421.6 1797.2 424.5C1797.4 427.4 1800.1 432.9 1801.6 435.4C1803.1 437.9 1804 439.5 1806 439.3C1808 439.1 1811.2 436.9 1813.6 434.4C1816 431.9 1819.5 427.4 1820.2 424.5C1820.9 421.6 1819.8 416.9 1818 416.9C1816.2 416.9 1810.7 421.6 1809.2 424.5C1807.7 427.4 1808.5 431.3 1809.2 434.4C1809.9 437.5 1811.6 441.5 1813.6 443.1C1815.6 444.7 1819 443.5 1821.2 444.2C1823.4 444.9 1824.5 448.3 1826.7 447.4C1828.9 446.5 1831.8 439.6 1834.3 438.7C1836.8 437.8 1838.7 442.2 1842 442C1845.3 441.8 1852 438.3 1854 437.6"/>
</svg>
</div>
</body></html>
